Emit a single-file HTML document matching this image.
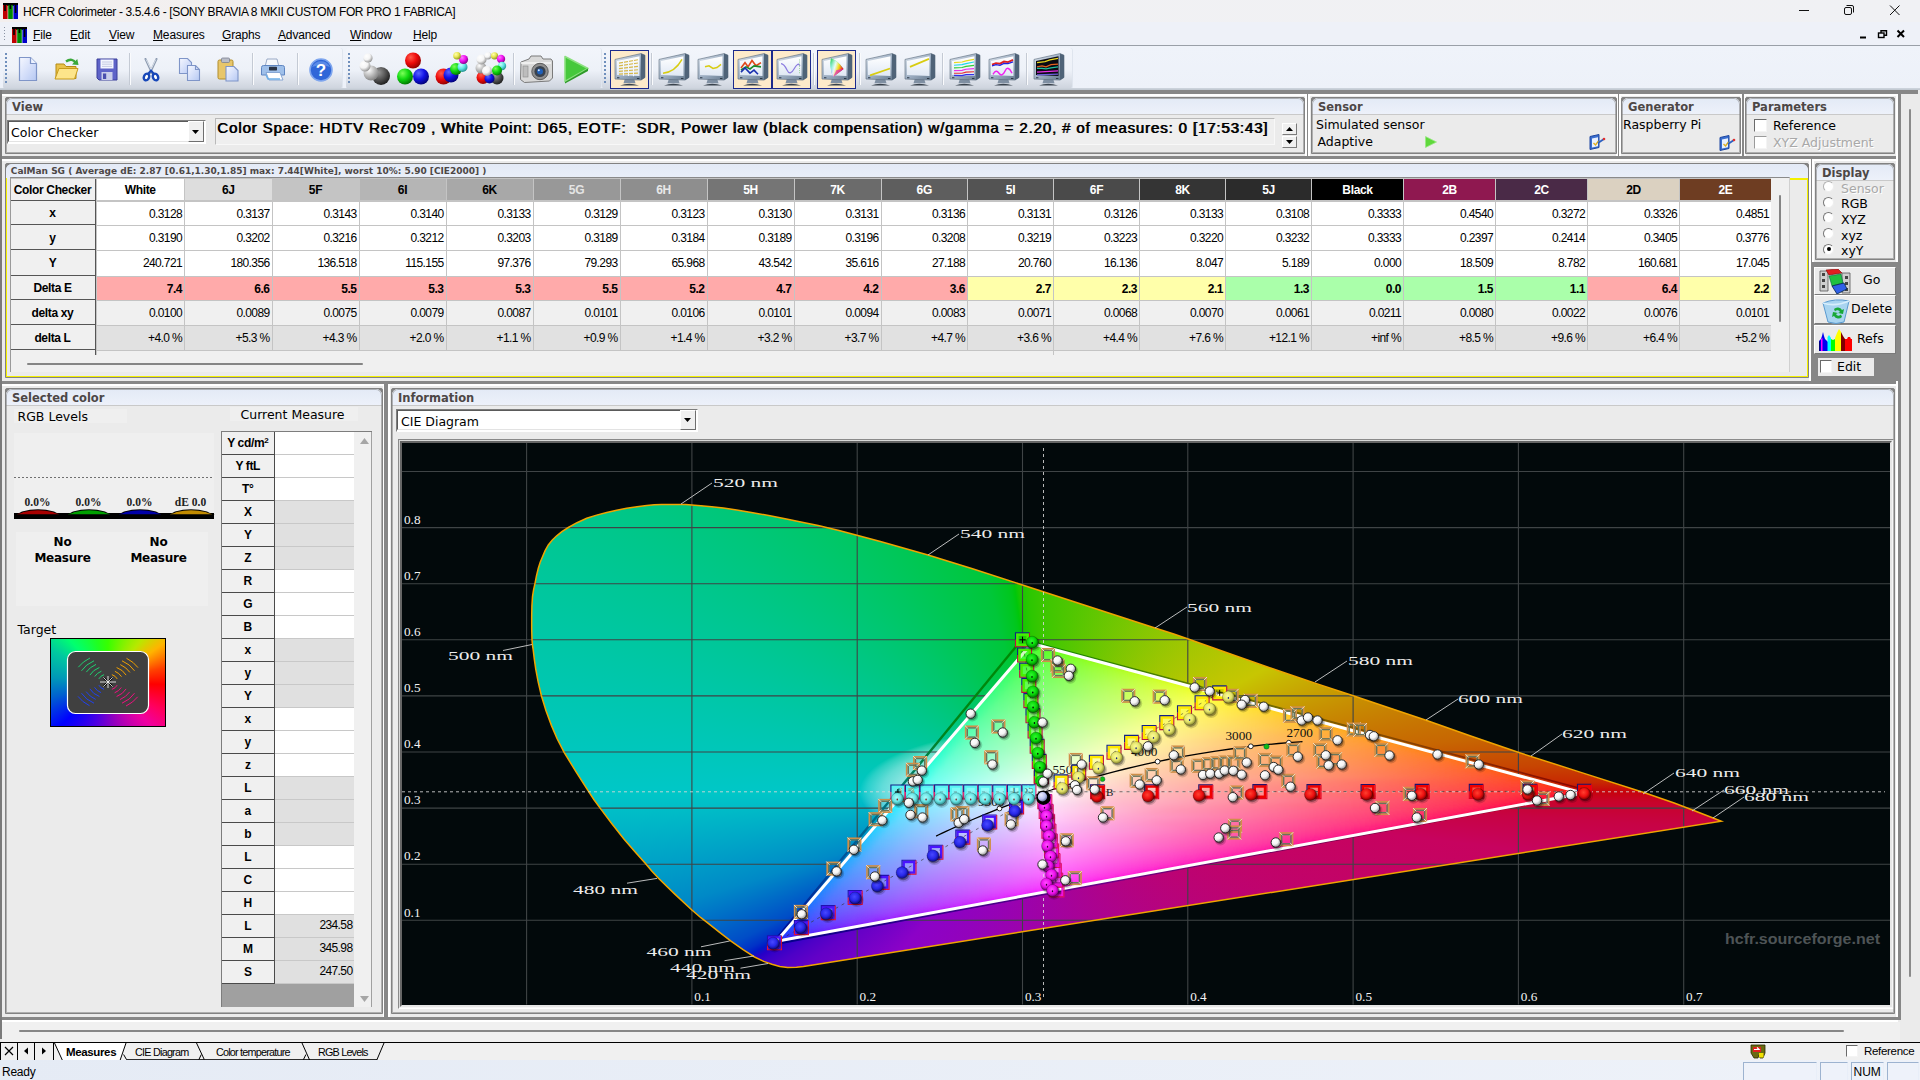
<!DOCTYPE html><html><head><meta charset="utf-8"><title>HCFR Colorimeter</title><style>

*{box-sizing:border-box;margin:0;padding:0}
html,body{width:1920px;height:1080px;overflow:hidden;background:#ebebeb;font-family:"Liberation Sans",sans-serif;font-size:12px;color:#000}
.a{position:absolute}
.t{position:absolute;white-space:pre;line-height:1}
.dj{font-family:"DejaVu Sans","Liberation Sans",sans-serif}
.hd{font-family:"DejaVu Sans","Liberation Sans",sans-serif;font-weight:bold;font-size:11.5px;color:#4d4746}
.pn{position:absolute;border:1px solid #828282;border-radius:2px 2px 0 0;background:#828282}
.pe{position:absolute;left:0;top:0;right:0;bottom:0;border-radius:6px 6px 0 0;box-shadow:inset 0 0 0 1px rgba(125,125,125,.55)}
.pn>.pb{position:absolute;left:0;top:0;right:0;bottom:0;background:#ebebeb;border-radius:6px 6px 0 0;overflow:hidden}
.pn .ph{position:absolute;left:0;top:0;right:0;height:17px;background:linear-gradient(#e3eaf6,#edf1fa);border-bottom:1px solid #c9c9c9}
.gb{position:absolute;background:#868686}
.wl{position:absolute;background:#fff}

</style></head><body>
<div class="a" style="left:0px;top:0px;width:1920px;height:22px;background:linear-gradient(90deg,#f3efee,#f1f1f3 30%,#f0f1f4)"></div>
<svg class="a" style="left:3px;top:3px" width="15" height="16" viewBox="0 0 15 16"><rect x="0" y="0" width="15" height="3" fill="#000"/><rect x="0" y="2" width="4.6" height="14" fill="#c00000"/><rect x="5.2" y="2" width="4.6" height="14" fill="#008a00"/><rect x="10.4" y="2" width="4.6" height="14" fill="#0000c8"/><rect x="1.2" y="2" width="1.6" height="6" fill="#000"/><rect x="6.6" y="2" width="1.6" height="4" fill="#000"/><rect x="11.8" y="2" width="1.6" height="8" fill="#000"/></svg>
<div class="t" style="left:23px;top:6px;font-size:12px;letter-spacing:-0.36px">HCFR Colorimeter - 3.5.4.6 - [SONY BRAVIA 8 MKII CUSTOM FOR PRO 1 FABRICA]</div>
<svg class="a" style="left:1780px;top:0" width="140" height="22" viewBox="0 0 140 22" fill="none" stroke="#111" stroke-width="1"><path d="M19 10.5h10"/><rect x="64.5" y="7.5" width="7" height="7" rx="1.5"/><path d="M66.5 5.5h5.5a1.5 1.5 0 0 1 1.5 1.5v5.5"/><path d="M110 5.5l9.5 9.5M119.5 5.5l-9.5 9.5"/></svg>
<div class="a" style="left:0px;top:22px;width:1920px;height:24px;background:#eef1f8"></div>
<div class="a" style="left:0px;top:45px;width:1920px;height:1px;background:#9aa0a8"></div>
<div class="a" style="left:4px;top:27px;width:1px;height:14px;background:repeating-linear-gradient(#8a93a3 0 1px,transparent 1px 3px)"></div>
<svg class="a" style="left:12px;top:27px" width="15" height="16" viewBox="0 0 15 16"><rect x="0" y="0" width="15" height="3" fill="#000"/><rect x="0" y="2" width="4.6" height="14" fill="#c00000"/><rect x="5.2" y="2" width="4.6" height="14" fill="#008a00"/><rect x="10.4" y="2" width="4.6" height="14" fill="#0000c8"/><rect x="1.2" y="2" width="1.6" height="6" fill="#000"/><rect x="6.6" y="2" width="1.6" height="4" fill="#000"/><rect x="11.8" y="2" width="1.6" height="8" fill="#000"/></svg>
<div class="t" style="left:33px;top:28.5px;font-size:12px;letter-spacing:-0.15px"><u>F</u>ile</div>
<div class="t" style="left:70px;top:28.5px;font-size:12px;letter-spacing:-0.15px"><u>E</u>dit</div>
<div class="t" style="left:109px;top:28.5px;font-size:12px;letter-spacing:-0.15px"><u>V</u>iew</div>
<div class="t" style="left:153px;top:28.5px;font-size:12px;letter-spacing:-0.15px"><u>M</u>easures</div>
<div class="t" style="left:222px;top:28.5px;font-size:12px;letter-spacing:-0.15px"><u>G</u>raphs</div>
<div class="t" style="left:278px;top:28.5px;font-size:12px;letter-spacing:-0.15px"><u>A</u>dvanced</div>
<div class="t" style="left:350px;top:28.5px;font-size:12px;letter-spacing:-0.15px"><u>W</u>indow</div>
<div class="t" style="left:413px;top:28.5px;font-size:12px;letter-spacing:-0.15px"><u>H</u>elp</div>
<svg class="a" style="left:1850px;top:26" width="60" height="16" viewBox="0 0 60 16" fill="none" stroke="#000"><path d="M10 11.5h6" stroke-width="2"/><rect x="28.5" y="7" width="5.5" height="4.5" stroke-width="1.4"/><path d="M31 7v-2.3h5.5v4.5h-2.5" stroke-width="1.4"/><path d="M47.5 4.5l6.5 6.5M54 4.5l-6.5 6.5" stroke-width="2"/></svg>
<div class="a" style="left:0px;top:46px;width:1920px;height:44px;background:linear-gradient(#eff3fa,#edf1f9)"></div>
<div class="a" style="left:3px;top:48px;width:339px;height:41px;border-radius:3px;background:linear-gradient(#f2f5fb 0,#edf1f8 55%,#cdd3dd 100%);box-shadow:1px 0 0 #dfe5ee"></div>
<div class="a" style="left:346px;top:48px;width:255px;height:41px;border-radius:3px;background:linear-gradient(#f2f5fb 0,#edf1f8 55%,#cdd3dd 100%);box-shadow:1px 0 0 #dfe5ee"></div>
<div class="a" style="left:602px;top:48px;width:470px;height:41px;border-radius:3px;background:linear-gradient(#f2f5fb 0,#edf1f8 55%,#cdd3dd 100%);box-shadow:1px 0 0 #dfe5ee"></div>
<div class="a" style="left:5px;top:53px;width:2px;height:31px;background:repeating-linear-gradient(#6f8fbc 0 2px,transparent 2px 4px)"></div>
<div class="a" style="left:348px;top:53px;width:2px;height:31px;background:repeating-linear-gradient(#6f8fbc 0 2px,transparent 2px 4px)"></div>
<div class="a" style="left:604px;top:53px;width:2px;height:31px;background:repeating-linear-gradient(#6f8fbc 0 2px,transparent 2px 4px)"></div>
<div class="a" style="left:129px;top:53px;width:1px;height:32px;background:#c4cad4"></div>
<div class="a" style="left:130px;top:53px;width:1px;height:32px;background:#fafbfd"></div>
<div class="a" style="left:252px;top:53px;width:1px;height:32px;background:#c4cad4"></div>
<div class="a" style="left:253px;top:53px;width:1px;height:32px;background:#fafbfd"></div>
<div class="a" style="left:297px;top:53px;width:1px;height:32px;background:#c4cad4"></div>
<div class="a" style="left:298px;top:53px;width:1px;height:32px;background:#fafbfd"></div>
<div class="a" style="left:513px;top:53px;width:1px;height:32px;background:#c4cad4"></div>
<div class="a" style="left:514px;top:53px;width:1px;height:32px;background:#fafbfd"></div>
<div class="a" style="left:651px;top:53px;width:1px;height:32px;background:#c4cad4"></div>
<div class="a" style="left:652px;top:53px;width:1px;height:32px;background:#fafbfd"></div>
<div class="a" style="left:813px;top:53px;width:1px;height:32px;background:#c4cad4"></div>
<div class="a" style="left:814px;top:53px;width:1px;height:32px;background:#fafbfd"></div>
<div class="a" style="left:858.5px;top:53px;width:1px;height:32px;background:#c4cad4"></div>
<div class="a" style="left:859.5px;top:53px;width:1px;height:32px;background:#fafbfd"></div>
<div class="a" style="left:942px;top:53px;width:1px;height:32px;background:#c4cad4"></div>
<div class="a" style="left:943px;top:53px;width:1px;height:32px;background:#fafbfd"></div>
<div class="a" style="left:1026px;top:53px;width:1px;height:32px;background:#c4cad4"></div>
<div class="a" style="left:1027px;top:53px;width:1px;height:32px;background:#fafbfd"></div>
<div class="a" style="left:0px;top:88px;width:1920px;height:2px;background:linear-gradient(#cfd6df,#bfc6cf)"></div>
<svg width="0" height="0" style="position:absolute"><defs>
<radialGradient id="bw" cx="35%" cy="30%" r="70%"><stop offset="0" stop-color="#fff"/><stop offset="0.55" stop-color="#f4f4f4"/><stop offset="1" stop-color="#9a9a9a"/></radialGradient>
<radialGradient id="bgry" cx="35%" cy="30%" r="70%"><stop offset="0" stop-color="#fff"/><stop offset="1" stop-color="#888"/></radialGradient>
<radialGradient id="bdk" cx="35%" cy="30%" r="70%"><stop offset="0" stop-color="#999"/><stop offset="1" stop-color="#222"/></radialGradient>
<radialGradient id="bred" cx="35%" cy="30%" r="75%"><stop offset="0" stop-color="#ff5a4a"/><stop offset="0.5" stop-color="#ee0a0a"/><stop offset="1" stop-color="#8a0000"/></radialGradient>
<radialGradient id="bgrn" cx="35%" cy="30%" r="75%"><stop offset="0" stop-color="#7dff5a"/><stop offset="0.5" stop-color="#10d810"/><stop offset="1" stop-color="#007000"/></radialGradient>
<radialGradient id="bblu" cx="35%" cy="30%" r="75%"><stop offset="0" stop-color="#5a66ff"/><stop offset="0.5" stop-color="#1212e6"/><stop offset="1" stop-color="#000070"/></radialGradient>
<radialGradient id="byel" cx="35%" cy="30%" r="75%"><stop offset="0" stop-color="#ffffb0"/><stop offset="0.5" stop-color="#e6e650"/><stop offset="1" stop-color="#8a8a20"/></radialGradient>
<radialGradient id="bcya" cx="35%" cy="30%" r="75%"><stop offset="0" stop-color="#c8ffff"/><stop offset="0.5" stop-color="#5fe6e6"/><stop offset="1" stop-color="#1f8a8a"/></radialGradient>
<radialGradient id="bmag" cx="35%" cy="30%" r="75%"><stop offset="0" stop-color="#ff7aff"/><stop offset="0.5" stop-color="#f010f0"/><stop offset="1" stop-color="#800080"/></radialGradient>
<radialGradient id="bwp" cx="35%" cy="30%" r="75%"><stop offset="0" stop-color="#eef"/><stop offset="0.6" stop-color="#b8c0f0"/><stop offset="1" stop-color="#606890"/></radialGradient>
<linearGradient id="bez" x1="0" y1="0" x2="1" y2="1"><stop offset="0" stop-color="#dfe6ee"/><stop offset="0.5" stop-color="#9fb0c4"/><stop offset="1" stop-color="#5f7488"/></linearGradient>
<linearGradient id="scr" x1="0" y1="0" x2="0" y2="1"><stop offset="0" stop-color="#ffffff"/><stop offset="1" stop-color="#dfe8f4"/></linearGradient>
<linearGradient id="pg" x1="0" y1="0" x2="1" y2="1"><stop offset="0" stop-color="#f6f8ff"/><stop offset="0.5" stop-color="#d6e0fa"/><stop offset="1" stop-color="#b6c8f2"/></linearGradient>
</defs></svg>
<svg class="a" style="left:18px;top:56px" width="20" height="26" viewBox="0 0 20 26"><path d="M1.5 1.5h11l6 6v17h-17z" fill="url(#pg)" stroke="#7f95c8" stroke-width="1.2"/><path d="M12.5 1.5v6h6" fill="#eef3ff" stroke="#7f95c8" stroke-width="1.2"/></svg>
<svg class="a" style="left:54px;top:56px" width="27" height="26" viewBox="0 0 27 26"><path d="M2 8h8l2 2.5h10v12h-20z" fill="#e9c24a" stroke="#b48a14" stroke-width="1"/><path d="M1 23l4-10.5h19l-3.5 10.5z" fill="#fde58a" stroke="#c89b1a" stroke-width="1"/><path d="M12 5.5c4-3 8-2 9.5 1.5" fill="none" stroke="#3aa83a" stroke-width="2.4"/><path d="M18 8.5l6.5 0.5-1.2-6z" fill="#3aa83a"/></svg>
<svg class="a" style="left:96px;top:58px" width="22" height="23" viewBox="0 0 22 23"><path d="M1 1h20v21h-18l-2-2z" fill="#5e63c8" stroke="#3a3f9a" stroke-width="1"/><rect x="4.5" y="1.5" width="13" height="9" fill="#f4f6ff"/><path d="M6 4h10M6 6.2h10M6 8.4h10" stroke="#b9bfdc" stroke-width="0.8"/><rect x="5.5" y="14" width="11" height="8" fill="#c9cdea"/><rect x="7" y="15.5" width="3.2" height="5.5" fill="#4a4fae"/></svg>
<svg class="a" style="left:141px;top:58px" width="20" height="24" viewBox="0 0 20 24"><path d="M4.500 1l6.500 14M15.500 1l-6.500 14" stroke="#8d9bb0" stroke-width="2" stroke-linecap="round"/><path d="M5.200 1.500l5.300 11M14.800 1.500l-5.300 11" stroke="#e8edf5" stroke-width=".8"/><ellipse cx="5.500" cy="19" rx="2.600" ry="3.400" transform="rotate(25 5.500 19)" fill="#fff" stroke="#1747b8" stroke-width="2.400"/><ellipse cx="14.500" cy="19" rx="2.600" ry="3.400" transform="rotate(-25 14.500 19)" fill="#fff" stroke="#1747b8" stroke-width="2.400"/><path d="M7.500 15.500l2.500-3 2.500 3" fill="none" stroke="#1747b8" stroke-width="2"/></svg>
<svg class="a" style="left:178px;top:57px" width="23" height="25" viewBox="0 0 23 25"><path d="M1.5 1.5h8l4 4v11h-12z" fill="url(#pg)" stroke="#7f95c8" stroke-width="1.1"/><path d="M9.5 8.5h8l4 4v11h-12z" fill="url(#pg)" stroke="#7f95c8" stroke-width="1.1"/><path d="M17.5 8.5v4h4" fill="none" stroke="#7f95c8" stroke-width="1.1"/></svg>
<svg class="a" style="left:217px;top:57px" width="22" height="25" viewBox="0 0 22 25"><rect x="1" y="3" width="15" height="19" rx="1.5" fill="#e8c66a" stroke="#b08c2a" stroke-width="1"/><rect x="4.5" y="1" width="8" height="4.5" rx="1" fill="#b9bdc8" stroke="#7c8190" stroke-width="0.8"/><path d="M9 9.5h8l4 4v10.5h-12z" fill="url(#pg)" stroke="#7f95c8" stroke-width="1.1"/></svg>
<svg class="a" style="left:260px;top:58px" width="26" height="23" viewBox="0 0 26 23"><path d="M7 1h10l2 8h-14z" fill="#f6f8fc" stroke="#8fa0c0" stroke-width="0.9"/><path d="M1.5 9.5q0-2 2-2h19q2 0 2 2v7.5h-23z" fill="#9fc0ea" stroke="#5f86c2" stroke-width="1"/><path d="M6 14.5h14l3 7.5h-14z" fill="#ffffff" stroke="#7fa0d0" stroke-width="0.9"/><rect x="9" y="8.8" width="8" height="3.6" rx="0.6" fill="#2a3446"/><path d="M6 17l2 4h12" stroke="#6fb0e8" stroke-width="1.5" fill="none"/></svg>
<svg class="a" style="left:309px;top:58px" width="24" height="24" viewBox="0 0 24 24"><circle cx="12" cy="12" r="11" fill="#2f66d8" stroke="#7fa6ee" stroke-width="1.6"/><path d="M3 9a10 10 0 0 1 18 0a14 8 0 0 0-18 0z" fill="#7ea8f2" opacity=".55"/><text x="12" y="18" text-anchor="middle" font-family="Liberation Sans, sans-serif" font-weight="bold" font-size="17" fill="#fff">?</text></svg>
<svg class="a" style="left:357px;top:52px" width="34" height="34" viewBox="0 0 34 34"><circle cx="24" cy="24" r="9" fill="url(#bdk)"/><circle cx="14" cy="21" r="7.5" fill="url(#bgry)"/><circle cx="8" cy="14" r="5.5" fill="url(#bw)"/><circle cx="11" cy="6" r="4.6" fill="url(#bw)"/></svg>
<svg class="a" style="left:396px;top:52px" width="34" height="34" viewBox="0 0 34 34"><circle cx="17" cy="8.5" r="8" fill="url(#bred)"/><circle cx="9" cy="24.5" r="8" fill="url(#bgrn)"/><circle cx="25" cy="24.5" r="8" fill="url(#bblu)"/></svg>
<svg class="a" style="left:435px;top:52px" width="36" height="34" viewBox="0 0 36 34"><circle cx="8.5" cy="24.5" r="8" fill="url(#bred)"/><circle cx="16" cy="23" r="7.5" fill="url(#bblu)"/><circle cx="21" cy="17" r="6" fill="url(#bgrn)"/><circle cx="27.5" cy="15" r="5" fill="url(#bcya)"/><circle cx="28.5" cy="7.5" r="4.6" fill="url(#bmag)"/><circle cx="22" cy="3.8" r="3.8" fill="url(#byel)"/></svg>
<svg class="a" style="left:474px;top:52px" width="34" height="34" viewBox="0 0 34 34"><circle cx="23" cy="26" r="6.5" fill="url(#bdk)"/><circle cx="9" cy="25.5" r="6.5" fill="url(#bred)"/><circle cx="15.5" cy="26.5" r="5" fill="url(#bblu)"/><circle cx="7" cy="16" r="5.5" fill="url(#bgry)"/><circle cx="7.5" cy="7.5" r="5" fill="url(#bw)"/><circle cx="14" cy="3.8" r="3.6" fill="url(#bw)"/><circle cx="20.5" cy="3.8" r="3.6" fill="url(#byel)"/><circle cx="27" cy="7" r="4.2" fill="url(#bmag)"/><circle cx="28" cy="14" r="4.2" fill="url(#bcya)"/><circle cx="23" cy="18.5" r="5" fill="url(#bgrn)"/><circle cx="13" cy="19" r="5" fill="url(#bw)"/></svg>
<svg class="a" style="left:519px;top:54px" width="35" height="31" viewBox="0 0 35 31"><path d="M2 8l8-3 2-3h10l2 3h8l1.5 2v17l-3 3-25 1.5-4-3z" fill="#d9d9d9" stroke="#7a7a7a" stroke-width="1"/><path d="M2 9h30" stroke="#f6f6f6" stroke-width="1.5"/><rect x="4" y="12" width="5" height="11" fill="#bdbdbd" stroke="#8a8a8a" stroke-width=".6"/><circle cx="21" cy="17.5" r="8.2" fill="#8f8f8f" stroke="#5a5a5a"/><circle cx="21" cy="17.5" r="5.6" fill="#39424e"/><circle cx="21" cy="17.5" r="3" fill="#1f5fb8"/><circle cx="19.8" cy="16.2" r="1" fill="#cfe4ff"/></svg>
<svg class="a" style="left:563px;top:55px" width="27" height="29" viewBox="0 0 27 29"><path d="M2 1.5l23 12-23 13z" fill="#46c83c" stroke="#8be07f" stroke-width="1.6" stroke-linejoin="round"/><path d="M2 27l23-13.5v2.5l-23 12.5z" fill="#2e9a28"/></svg>
<div class="a" style="left:610px;top:50px;width:39px;height:39px;background:#fdeaca;border:1.5px solid #1c2a8c"></div><svg class="a" style="left:614px;top:51.500px" width="32" height="35" viewBox="0 0 32 33" preserveAspectRatio="none"><path d="M6 31.500q9-3 19 0z" fill="#39424c"/><path d="M11 25h9l1.500 4.500h-12z" fill="#7f8fa2"/><path d="M1 7l26-5.5 4 1.5v21l-4 2.5-26-1z" fill="url(#bez)" stroke="#5b6b7d" stroke-width="0.6"/><path d="M27 1.5l4 1.5v21l-4 2.5z" fill="#4f6378"/><path d="M3 8.6l22.5-4.6v18.6l-22.5-0.9z" fill="url(#scr)"/><path d="M3 24.2l2.4.1M23 24.9l2.4.1" stroke="#2d3a48" stroke-width="1"/><g stroke="#d6b84a" stroke-width="1.1"><path d="M5 10.5l19-3.2"/><path d="M5 13.1l19-2.7"/><path d="M5 15.7l19-2.1"/><path d="M5 18.3l19-1.6"/><path d="M5 20.9l19-1.0"/></g><g stroke="#f4f7fb" stroke-width="1"><path d="M9.5 7.5v15M14.5 6.5v16.2M19.5 5.5v17.4"/></g></svg>
<svg class="a" style="left:658px;top:51.500px" width="32" height="35" viewBox="0 0 32 33" preserveAspectRatio="none"><path d="M6 31.500q9-3 19 0z" fill="#39424c"/><path d="M11 25h9l1.500 4.500h-12z" fill="#7f8fa2"/><path d="M1 7l26-5.5 4 1.5v21l-4 2.5-26-1z" fill="url(#bez)" stroke="#5b6b7d" stroke-width="0.6"/><path d="M27 1.5l4 1.5v21l-4 2.5z" fill="#4f6378"/><path d="M3 8.6l22.5-4.6v18.6l-22.5-0.9z" fill="url(#scr)"/><path d="M3 24.2l2.4.1M23 24.9l2.4.1" stroke="#2d3a48" stroke-width="1"/><path d="M5 20q12-1 19-13" fill="none" stroke="#d8cc10" stroke-width="1.5"/></svg>
<svg class="a" style="left:697px;top:51.500px" width="32" height="35" viewBox="0 0 32 33" preserveAspectRatio="none"><path d="M6 31.500q9-3 19 0z" fill="#39424c"/><path d="M11 25h9l1.500 4.500h-12z" fill="#7f8fa2"/><path d="M1 7l26-5.5 4 1.5v21l-4 2.5-26-1z" fill="url(#bez)" stroke="#5b6b7d" stroke-width="0.6"/><path d="M27 1.5l4 1.5v21l-4 2.5z" fill="#4f6378"/><path d="M3 8.6l22.5-4.6v18.6l-22.5-0.9z" fill="url(#scr)"/><path d="M3 24.2l2.4.1M23 24.9l2.4.1" stroke="#2d3a48" stroke-width="1"/><path d="M8 14l4-1 4 2.5 4-.8 4-3" fill="none" stroke="#d8cc10" stroke-width="1.5"/></svg>
<div class="a" style="left:733px;top:50px;width:39px;height:39px;background:#fdeaca;border:1.5px solid #1c2a8c"></div><svg class="a" style="left:737px;top:51.500px" width="32" height="35" viewBox="0 0 32 33" preserveAspectRatio="none"><path d="M6 31.500q9-3 19 0z" fill="#39424c"/><path d="M11 25h9l1.500 4.500h-12z" fill="#7f8fa2"/><path d="M1 7l26-5.5 4 1.5v21l-4 2.5-26-1z" fill="url(#bez)" stroke="#5b6b7d" stroke-width="0.6"/><path d="M27 1.5l4 1.5v21l-4 2.5z" fill="#4f6378"/><path d="M3 8.6l22.5-4.6v18.6l-22.5-0.9z" fill="url(#scr)"/><path d="M3 24.2l2.4.1M23 24.9l2.4.1" stroke="#2d3a48" stroke-width="1"/><path d="M4 15l4-5 3 4 4-6 4 5 5-3" fill="none" stroke="#e0481a" stroke-width="1.6"/><path d="M4 17l5-3 4 2 4-3 7 1" fill="none" stroke="#1a8a2a" stroke-width="1.6"/><path d="M4 19l4-4 5 5 4-3 4 4" fill="none" stroke="#1a30b0" stroke-width="1.6"/></svg>
<div class="a" style="left:772px;top:50px;width:39px;height:39px;background:#fdeaca;border:1.5px solid #1c2a8c"></div><svg class="a" style="left:776px;top:51.500px" width="32" height="35" viewBox="0 0 32 33" preserveAspectRatio="none"><path d="M6 31.500q9-3 19 0z" fill="#39424c"/><path d="M11 25h9l1.500 4.500h-12z" fill="#7f8fa2"/><path d="M1 7l26-5.5 4 1.5v21l-4 2.5-26-1z" fill="url(#bez)" stroke="#5b6b7d" stroke-width="0.6"/><path d="M27 1.5l4 1.5v21l-4 2.5z" fill="#4f6378"/><path d="M3 8.6l22.5-4.6v18.6l-22.5-0.9z" fill="url(#scr)"/><path d="M3 24.2l2.4.1M23 24.9l2.4.1" stroke="#2d3a48" stroke-width="1"/><path d="M5 11q3 0 6 6t7-1 6-3" fill="none" stroke="#8a7adf" stroke-width="1.2"/><path d="M23.5 7v14" stroke="#8fd08f" stroke-width="0.8" stroke-dasharray="1 1"/></svg>
<div class="a" style="left:817px;top:50px;width:39px;height:39px;background:#fdeaca;border:1.5px solid #1c2a8c"></div><svg class="a" style="left:821px;top:51.500px" width="32" height="35" viewBox="0 0 32 33" preserveAspectRatio="none"><path d="M6 31.500q9-3 19 0z" fill="#39424c"/><path d="M11 25h9l1.500 4.500h-12z" fill="#7f8fa2"/><path d="M1 7l26-5.5 4 1.5v21l-4 2.5-26-1z" fill="url(#bez)" stroke="#5b6b7d" stroke-width="0.6"/><path d="M27 1.5l4 1.5v21l-4 2.5z" fill="#4f6378"/><path d="M3 8.6l22.5-4.6v18.6l-22.5-0.9z" fill="url(#scr)"/><path d="M3 24.2l2.4.1M23 24.9l2.4.1" stroke="#2d3a48" stroke-width="1"/><defs><linearGradient id="ci1" x1="0" y1="0" x2="0.300" y2="1"><stop offset="0" stop-color="#10c830"/><stop offset=".5" stop-color="#30e0c0"/><stop offset="1" stop-color="#3030f0"/></linearGradient><linearGradient id="ci2" x1="0" y1="0" x2="1" y2="0.400"><stop offset="0" stop-color="#fff" stop-opacity="0"/><stop offset=".45" stop-color="#fff" stop-opacity=".9"/><stop offset=".7" stop-color="#f0e020"/><stop offset="1" stop-color="#f02020"/></linearGradient></defs><path d="M10 6q-2 8 2 17.500l10.500-7.500q-6-8-12.500-10z" fill="url(#ci1)"/><path d="M10 6q-2 8 2 17.500l10.500-7.500q-6-8-12.500-10z" fill="url(#ci2)"/><path d="M12 23.500l10.500-7.500-7 1z" fill="#e020c0" opacity=".7"/></svg>
<svg class="a" style="left:865px;top:51.500px" width="32" height="35" viewBox="0 0 32 33" preserveAspectRatio="none"><path d="M6 31.500q9-3 19 0z" fill="#39424c"/><path d="M11 25h9l1.500 4.500h-12z" fill="#7f8fa2"/><path d="M1 7l26-5.5 4 1.5v21l-4 2.5-26-1z" fill="url(#bez)" stroke="#5b6b7d" stroke-width="0.6"/><path d="M27 1.5l4 1.5v21l-4 2.5z" fill="#4f6378"/><path d="M3 8.6l22.5-4.6v18.6l-22.5-0.9z" fill="url(#scr)"/><path d="M3 24.2l2.4.1M23 24.9l2.4.1" stroke="#2d3a48" stroke-width="1"/><path d="M5 22l20-6.5" fill="none" stroke="#d8cc10" stroke-width="1.6"/></svg>
<svg class="a" style="left:904px;top:51.500px" width="32" height="35" viewBox="0 0 32 33" preserveAspectRatio="none"><path d="M6 31.500q9-3 19 0z" fill="#39424c"/><path d="M11 25h9l1.500 4.500h-12z" fill="#7f8fa2"/><path d="M1 7l26-5.5 4 1.5v21l-4 2.5-26-1z" fill="url(#bez)" stroke="#5b6b7d" stroke-width="0.6"/><path d="M27 1.5l4 1.5v21l-4 2.5z" fill="#4f6378"/><path d="M3 8.6l22.5-4.6v18.6l-22.5-0.9z" fill="url(#scr)"/><path d="M3 24.2l2.4.1M23 24.9l2.4.1" stroke="#2d3a48" stroke-width="1"/><path d="M6 14l19-7.5" fill="none" stroke="#d8cc10" stroke-width="1.6"/></svg>
<svg class="a" style="left:949px;top:51.500px" width="32" height="35" viewBox="0 0 32 33" preserveAspectRatio="none"><path d="M6 31.500q9-3 19 0z" fill="#39424c"/><path d="M11 25h9l1.500 4.500h-12z" fill="#7f8fa2"/><path d="M1 7l26-5.5 4 1.5v21l-4 2.5-26-1z" fill="url(#bez)" stroke="#5b6b7d" stroke-width="0.6"/><path d="M27 1.5l4 1.5v21l-4 2.5z" fill="#4f6378"/><path d="M3 8.6l22.5-4.6v18.6l-22.5-0.9z" fill="url(#scr)"/><path d="M3 24.2l2.4.1M23 24.9l2.4.1" stroke="#2d3a48" stroke-width="1"/><g stroke-width="1.1" fill="none"><path d="M5 10l8-.6 4-1 8-1.5" stroke="#e8d820"/><path d="M5 12.5l8-.6 4-1 8-1.5" stroke="#20d8e8"/><path d="M5 15l8-.4 4-1 8-1" stroke="#30d030"/><path d="M5 17.5l8-.2 4-1 8-.6" stroke="#e830e8"/><path d="M5 20l8 0 4-1 8-.4" stroke="#e83030"/><path d="M5 22l8 .2 4-.8 8 0" stroke="#3030e8"/></g></svg>
<svg class="a" style="left:988px;top:51.500px" width="32" height="35" viewBox="0 0 32 33" preserveAspectRatio="none"><path d="M6 31.500q9-3 19 0z" fill="#39424c"/><path d="M11 25h9l1.500 4.500h-12z" fill="#7f8fa2"/><path d="M1 7l26-5.5 4 1.5v21l-4 2.5-26-1z" fill="url(#bez)" stroke="#5b6b7d" stroke-width="0.6"/><path d="M27 1.5l4 1.5v21l-4 2.5z" fill="#4f6378"/><path d="M3 8.6l22.5-4.6v18.6l-22.5-0.9z" fill="url(#scr)"/><path d="M3 24.2l2.4.1M23 24.9l2.4.1" stroke="#2d3a48" stroke-width="1"/><path d="M4 12l4-1.5 4 .5 4-2 4 .5 5-2" fill="none" stroke="#e02020" stroke-width="1.8"/><path d="M4 13l4-1 4 .5 4-1.8 4 .2 5-1.6" fill="none" stroke="#2020e0" stroke-width="1.2"/><path d="M5 21q3-5 6-1t6-2 7 2" fill="none" stroke="#f020f0" stroke-width="1.4"/></svg>
<svg class="a" style="left:1033px;top:51.500px" width="32" height="35" viewBox="0 0 32 33" preserveAspectRatio="none"><path d="M6 31.500q9-3 19 0z" fill="#39424c"/><path d="M11 25h9l1.500 4.500h-12z" fill="#7f8fa2"/><path d="M1 7l26-5.5 4 1.5v21l-4 2.5-26-1z" fill="url(#bez)" stroke="#5b6b7d" stroke-width="0.6"/><path d="M27 1.5l4 1.5v21l-4 2.5z" fill="#4f6378"/><path d="M3 8.6l22.5-4.6v18.6l-22.5-0.9z" fill="#0a0a14"/><path d="M3 24.2l2.4.1M23 24.9l2.4.1" stroke="#2d3a48" stroke-width="1"/><g stroke-width="1.2" fill="none"><path d="M4 10l8-1 5-1.5 8-1.5" stroke="#e8d820"/><path d="M4 14l5-1 4 1 5-2 7-.5" stroke="#e06020"/><path d="M4 15.5l5 0 4 .5 5-1 7-1" stroke="#20c0a0"/><path d="M4 19l21-1.2" stroke="#e830e8"/><path d="M4 21.5l21-.6" stroke="#7060e0"/></g></svg>
<div class="a" style="left:0px;top:90px;width:1900px;height:3.5px;background:#878787"></div>
<div class="a" style="left:2px;top:93.5px;width:1896px;height:2px;background:#fff"></div>
<div class="a" style="left:0px;top:155.8px;width:1900px;height:3px;background:#878787"></div>
<div class="a" style="left:2px;top:158.8px;width:1896px;height:2px;background:#fff"></div>
<div class="a" style="left:0px;top:380.6px;width:1900px;height:3.4px;background:#878787"></div>
<div class="a" style="left:2px;top:384.0px;width:1896px;height:2px;background:#fff"></div>
<div class="a" style="left:0px;top:1016.6px;width:1900px;height:3px;background:#878787"></div>
<div class="a" style="left:2px;top:1019.6px;width:1896px;height:2px;background:#fff"></div>
<div class="a" style="left:1900px;top:90px;width:18px;height:3.5px;background:#878787"></div>
<div class="a" style="left:0px;top:90px;width:1.6px;height:949px;background:#7a7a7a"></div>
<div class="a" style="left:1897.6px;top:90px;width:3.2px;height:930px;background:#878787"></div>
<div class="a" style="left:1895.6px;top:94px;width:2px;height:923px;background:#fff"></div>
<div class="a" style="left:1304.8px;top:94px;width:2px;height:62px;background:#fff"></div>
<div class="a" style="left:1306.8px;top:94px;width:1.3px;height:62px;background:#878787"></div>
<div class="a" style="left:1308.1px;top:94px;width:2px;height:62px;background:#fff"></div>
<div class="a" style="left:1616px;top:94px;width:2px;height:62px;background:#fff"></div>
<div class="a" style="left:1618px;top:94px;width:1.3px;height:62px;background:#878787"></div>
<div class="a" style="left:1619.3px;top:94px;width:2px;height:62px;background:#fff"></div>
<div class="a" style="left:1740.4px;top:94px;width:2px;height:62px;background:#fff"></div>
<div class="a" style="left:1742.4px;top:94px;width:1.3px;height:62px;background:#878787"></div>
<div class="a" style="left:1743.7px;top:94px;width:2px;height:62px;background:#fff"></div>
<div class="a" style="left:1808.8px;top:159px;width:2px;height:222px;background:#fff"></div>
<div class="a" style="left:1810.6px;top:159px;width:1.6px;height:222px;background:#878787"></div>
<div class="a" style="left:1812.2px;top:159px;width:2px;height:222px;background:#fff"></div>
<div class="a" style="left:1812px;top:262px;width:86px;height:119px;background:#878787"></div>
<div class="a" style="left:382.6px;top:384px;width:2px;height:633px;background:#fff"></div>
<div class="a" style="left:384.4px;top:384px;width:3.4px;height:633px;background:#878787"></div>
<div class="a" style="left:387.8px;top:384px;width:2.4px;height:633px;background:#fff"></div>
<div class="a" style="left:1909.4px;top:109px;width:2px;height:868px;background:#8a8a8a;border-radius:1px"></div>
<div class="a" style="left:1901px;top:94px;width:19px;height:945px;background:#f0f0f0;z-index:-1"></div>
<div class="pn" style="left:5px;top:97px;width:1300px;height:56.5px;"><div class="pb"><div class="ph" style="height:17px"></div><div class="t hd" style="left:6px;top:4px">View</div><div class="a" style="left:1px;top:22px;width:199px;height:23.5px;border:1.5px solid #7d7d7d;border-right-color:#fff;border-bottom-color:#fff;background:#fff"><div class="a" style="left:0px;top:0px;width:196px;height:20.5px;border:1px solid #5a5a5a;border-right-color:#e3e3e3;border-bottom-color:#e3e3e3"></div><div class="t dj" style="left:3px;top:5.5px;font-size:12.5px">Color Checker</div><div class="a" style="left:180px;top:0px;width:16px;height:20.5px;background:#f0f0f0;border:1px solid #fff;border-right-color:#6f6f6f;border-bottom-color:#6f6f6f"></div><svg class="a" style="left:184px;top:8.5px" width="8" height="5"><path d="M0 0h7l-3.5 4z" fill="#000"/></svg></div><div class="a" style="left:209px;top:20px;width:1060px;height:27px;border:1px solid #b9b9b9;border-right-color:#f8f8f8;border-bottom-color:#f8f8f8;background:#efefef"></div><div class="t" style="left:211px;top:21.5px;font-size:15px;letter-spacing:0.88px;text-shadow:0.8px 0 0 #000">Color Space: HDTV Rec709 , White Point: D65, EOTF:  SDR, Power law (black compensation) w/gamma = 2.20, # of measures: 0 [17:53:43]</div><div class="a" style="left:1276px;top:25px;width:15px;height:12px;background:#f0f0f0;border:1px solid #fff;border-right-color:#7b7b7b;border-bottom-color:#7b7b7b"></div><svg class="a" style="left:1280px;top:29px" width="8" height="5"><path d="M0 4l3.5-4 3.5 4z" fill="#000"/></svg><div class="a" style="left:1276px;top:38px;width:15px;height:12px;background:#f0f0f0;border:1px solid #fff;border-right-color:#7b7b7b;border-bottom-color:#7b7b7b"></div><svg class="a" style="left:1280px;top:42px" width="8" height="5"><path d="M0 0h7l-3.5 4z" fill="#000"/></svg><div class="pe"></div></div></div>
<div class="pn" style="left:1311px;top:97px;width:305.5px;height:56.5px;"><div class="pb"><div class="ph" style="height:17px"></div><div class="t hd" style="left:6px;top:4px">Sensor</div><div class="t dj" style="left:4px;top:21px;font-size:12.5px">Simulated sensor</div><div class="t dj" style="left:5.5px;top:38px;font-size:12.5px">Adaptive</div><svg class="a" style="left:113px;top:38px" width="13" height="12"><path d="M0.5 0.5l11 5.5-11 5.5z" fill="#5fd83c" stroke="#9be884" stroke-width="0.8"/></svg><svg class="a" style="left:276px;top:35px" width="18" height="18" viewBox="0 0 18 18"><path d="M2 3.5l9-2v13l-9 2z" fill="#3a6fd0" stroke="#1f47a0" stroke-width="1"/><path d="M4 5.5l6-1.3v9l-6 1.3z" fill="#e8f0ff"/><path d="M5.5 10l2 2 3-4" stroke="#e0b020" stroke-width="1.4" fill="none"/><path d="M10 10l6-4" stroke="#2a5fc0" stroke-width="1.8"/><circle cx="16" cy="6" r="1.3" fill="#e03030"/></svg><div class="pe"></div></div></div>
<div class="pn" style="left:1621px;top:97px;width:120px;height:56.5px;"><div class="pb"><div class="ph" style="height:17px"></div><div class="t hd" style="left:6px;top:4px">Generator</div><div class="t dj" style="left:1px;top:21px;font-size:12.5px">Raspberry Pi</div><svg class="a" style="left:96px;top:36px" width="18" height="18" viewBox="0 0 18 18"><path d="M2 3.5l9-2v13l-9 2z" fill="#3a6fd0" stroke="#1f47a0" stroke-width="1"/><path d="M4 5.5l6-1.3v9l-6 1.3z" fill="#e8f0ff"/><path d="M5.5 10l2 2 3-4" stroke="#e0b020" stroke-width="1.4" fill="none"/><path d="M10 10l6-4" stroke="#2a5fc0" stroke-width="1.8"/><circle cx="16" cy="6" r="1.3" fill="#e03030"/></svg><div class="pe"></div></div></div>
<div class="pn" style="left:1745px;top:97px;width:150px;height:56.5px;"><div class="pb"><div class="ph" style="height:17px"></div><div class="t hd" style="left:6px;top:4px">Parameters</div><div class="a" style="left:8px;top:21px;width:12.5px;height:12.5px;background:#fff;border:1.5px solid #6a6a6a;border-right-color:#f4f4f4;border-bottom-color:#f4f4f4"></div><div class="t dj" style="left:27px;top:22px;font-size:12.5px">Reference</div><div class="a" style="left:8px;top:38px;width:12.5px;height:12.5px;background:#fff;border:1.5px solid #9a9a9a;border-right-color:#f4f4f4;border-bottom-color:#f4f4f4"></div><div class="t dj" style="left:27px;top:39px;font-size:12.5px;color:#a8a8a8;text-shadow:1px 1px 0 #fff">XYZ Adjustment</div><div class="pe"></div></div></div>
<div class="a" style="left:5px;top:162.6px;width:1803.6px;height:215.6px;border:1px solid #828282;border-radius:2px 2px 0 0;background:#828282"><div class="a" style="left:0px;top:0px;width:1801.6px;height:213.6px;background:#ebebeb;border-radius:6px 6px 0 0"></div><div class="a" style="left:0px;top:0px;width:1801.6px;height:15px;border-radius:6px 6px 0 0;background:linear-gradient(#e3eaf6,#eaeff9)"></div><div class="t dj" style="left:4.8px;top:3.7px;font-size:9px;font-weight:bold;color:#4d4746;letter-spacing:0px">CalMan SG ( Average dE: 2.87 [0.61,1.30,1.85] max: 7.44[White], worst 10%: 5.90 [CIE2000] )</div></div>
<div class="a" style="left:6px;top:178px;width:1.2px;height:199px;background:#f4f000"></div>
<div class="a" style="left:6px;top:375.8px;width:1802px;height:1.4px;background:#f4f000"></div>
<div class="a" style="left:1807px;top:178px;width:1.4px;height:199px;background:#f4f000"></div>
<div class="a" style="left:1790px;top:178.4px;width:18px;height:1.2px;background:#f4f000"></div>
<div class="a" style="left:10px;top:177px;width:1780px;height:195px;background:#f0f0f0;border-top:1.5px solid #8a8a8a;border-left:1px solid #9a9a9a;border-right:1px solid #d0d0d0"></div>
<div class="a" style="left:10.5px;top:177.5px;width:1760.5px;height:177.5px;background:#c4c4c4"></div>
<div class="a" style="left:95.5px;top:351.3px;width:1675.5px;height:3.6999999999999886px;background:repeating-linear-gradient(90deg,#c4c4c4 0 1px,#f0f0f0 1px 87px)"></div>
<div class="a" style="left:10.5px;top:178.5px;width:85.0px;height:22.2px;background:#f0f0f0;line-height:23.2px;text-align:center;white-space:pre;overflow:hidden;font-weight:bold;letter-spacing:-0.35px;border-right:1px solid #555;border-bottom:1px solid #555">Color Checker</div>
<div class="a" style="left:96.5px;top:178.5px;width:87.5px;height:21.2px;background:#ffffff;line-height:22.2px;text-align:center;white-space:pre;overflow:hidden;font-weight:bold;letter-spacing:-0.35px;color:#000">White</div>
<div class="a" style="left:185.0px;top:178.5px;width:86.5px;height:21.2px;background:#dddddd;line-height:22.2px;text-align:center;white-space:pre;overflow:hidden;font-weight:bold;letter-spacing:-0.35px;color:#000">6J</div>
<div class="a" style="left:272.5px;top:178.5px;width:86.0px;height:21.2px;background:#c4c4c4;line-height:22.2px;text-align:center;white-space:pre;overflow:hidden;font-weight:bold;letter-spacing:-0.35px;color:#000">5F</div>
<div class="a" style="left:359.5px;top:178.5px;width:86.0px;height:21.2px;background:#b5b5b5;line-height:22.2px;text-align:center;white-space:pre;overflow:hidden;font-weight:bold;letter-spacing:-0.35px;color:#000">6I</div>
<div class="a" style="left:446.5px;top:178.5px;width:86.0px;height:21.2px;background:#a8a8a8;line-height:22.2px;text-align:center;white-space:pre;overflow:hidden;font-weight:bold;letter-spacing:-0.35px;color:#000">6K</div>
<div class="a" style="left:533.5px;top:178.5px;width:86.0px;height:21.2px;background:#989898;line-height:22.2px;text-align:center;white-space:pre;overflow:hidden;font-weight:bold;letter-spacing:-0.35px;color:#e4e4e4">5G</div>
<div class="a" style="left:620.5px;top:178.5px;width:86.0px;height:21.2px;background:#8e8e8e;line-height:22.2px;text-align:center;white-space:pre;overflow:hidden;font-weight:bold;letter-spacing:-0.35px;color:#e8e8e8">6H</div>
<div class="a" style="left:707.5px;top:178.5px;width:86.0px;height:21.2px;background:#757575;line-height:22.2px;text-align:center;white-space:pre;overflow:hidden;font-weight:bold;letter-spacing:-0.35px;color:#fff">5H</div>
<div class="a" style="left:794.5px;top:178.5px;width:86.0px;height:21.2px;background:#6b6b6b;line-height:22.2px;text-align:center;white-space:pre;overflow:hidden;font-weight:bold;letter-spacing:-0.35px;color:#fff">7K</div>
<div class="a" style="left:881.5px;top:178.5px;width:85.5px;height:21.2px;background:#5e5e5e;line-height:22.2px;text-align:center;white-space:pre;overflow:hidden;font-weight:bold;letter-spacing:-0.35px;color:#fff">6G</div>
<div class="a" style="left:968.0px;top:178.5px;width:85.0px;height:21.2px;background:#535353;line-height:22.2px;text-align:center;white-space:pre;overflow:hidden;font-weight:bold;letter-spacing:-0.35px;color:#fff">5I</div>
<div class="a" style="left:1054.0px;top:178.5px;width:85.0px;height:21.2px;background:#4a4a4a;line-height:22.2px;text-align:center;white-space:pre;overflow:hidden;font-weight:bold;letter-spacing:-0.35px;color:#fff">6F</div>
<div class="a" style="left:1140.0px;top:178.5px;width:85.0px;height:21.2px;background:#343434;line-height:22.2px;text-align:center;white-space:pre;overflow:hidden;font-weight:bold;letter-spacing:-0.35px;color:#fff">8K</div>
<div class="a" style="left:1226.0px;top:178.5px;width:85.0px;height:21.2px;background:#2b2b2b;line-height:22.2px;text-align:center;white-space:pre;overflow:hidden;font-weight:bold;letter-spacing:-0.35px;color:#fff">5J</div>
<div class="a" style="left:1312.0px;top:178.5px;width:91.0px;height:21.2px;background:#000000;line-height:22.2px;text-align:center;white-space:pre;overflow:hidden;font-weight:bold;letter-spacing:-0.35px;color:#fff">Black</div>
<div class="a" style="left:1404.0px;top:178.5px;width:91.0px;height:21.2px;background:#8f1850;line-height:22.2px;text-align:center;white-space:pre;overflow:hidden;font-weight:bold;letter-spacing:-0.35px;color:#fff">2B</div>
<div class="a" style="left:1496.0px;top:178.5px;width:91.0px;height:21.2px;background:#4a2a47;line-height:22.2px;text-align:center;white-space:pre;overflow:hidden;font-weight:bold;letter-spacing:-0.35px;color:#fff">2C</div>
<div class="a" style="left:1588.0px;top:178.5px;width:91.0px;height:21.2px;background:#dbd1c1;line-height:22.2px;text-align:center;white-space:pre;overflow:hidden;font-weight:bold;letter-spacing:-0.35px;color:#000">2D</div>
<div class="a" style="left:1680.0px;top:178.5px;width:91.0px;height:21.2px;background:#6e3d22;line-height:22.2px;text-align:center;white-space:pre;overflow:hidden;font-weight:bold;letter-spacing:-0.35px;color:#fff">2E</div>
<div class="a" style="left:10.5px;top:200.7px;width:85.0px;height:24.6px;background:#f0f0f0;line-height:25.6px;text-align:center;white-space:pre;overflow:hidden;font-weight:bold;letter-spacing:-0.35px;border-right:1px solid #555;border-bottom:1px solid #555">x</div>
<div class="a" style="left:96.5px;top:201.7px;width:87.5px;height:23.6px;background:#fff;line-height:24.6px;text-align:right;white-space:pre;overflow:hidden;letter-spacing:-0.62px;padding-right:2px;">0.3128</div>
<div class="a" style="left:185.0px;top:201.7px;width:86.5px;height:23.6px;background:#fff;line-height:24.6px;text-align:right;white-space:pre;overflow:hidden;letter-spacing:-0.62px;padding-right:2px;">0.3137</div>
<div class="a" style="left:272.5px;top:201.7px;width:86.0px;height:23.6px;background:#fff;line-height:24.6px;text-align:right;white-space:pre;overflow:hidden;letter-spacing:-0.62px;padding-right:2px;">0.3143</div>
<div class="a" style="left:359.5px;top:201.7px;width:86.0px;height:23.6px;background:#fff;line-height:24.6px;text-align:right;white-space:pre;overflow:hidden;letter-spacing:-0.62px;padding-right:2px;">0.3140</div>
<div class="a" style="left:446.5px;top:201.7px;width:86.0px;height:23.6px;background:#fff;line-height:24.6px;text-align:right;white-space:pre;overflow:hidden;letter-spacing:-0.62px;padding-right:2px;">0.3133</div>
<div class="a" style="left:533.5px;top:201.7px;width:86.0px;height:23.6px;background:#fff;line-height:24.6px;text-align:right;white-space:pre;overflow:hidden;letter-spacing:-0.62px;padding-right:2px;">0.3129</div>
<div class="a" style="left:620.5px;top:201.7px;width:86.0px;height:23.6px;background:#fff;line-height:24.6px;text-align:right;white-space:pre;overflow:hidden;letter-spacing:-0.62px;padding-right:2px;">0.3123</div>
<div class="a" style="left:707.5px;top:201.7px;width:86.0px;height:23.6px;background:#fff;line-height:24.6px;text-align:right;white-space:pre;overflow:hidden;letter-spacing:-0.62px;padding-right:2px;">0.3130</div>
<div class="a" style="left:794.5px;top:201.7px;width:86.0px;height:23.6px;background:#fff;line-height:24.6px;text-align:right;white-space:pre;overflow:hidden;letter-spacing:-0.62px;padding-right:2px;">0.3131</div>
<div class="a" style="left:881.5px;top:201.7px;width:85.5px;height:23.6px;background:#fff;line-height:24.6px;text-align:right;white-space:pre;overflow:hidden;letter-spacing:-0.62px;padding-right:2px;">0.3136</div>
<div class="a" style="left:968.0px;top:201.7px;width:85.0px;height:23.6px;background:#fff;line-height:24.6px;text-align:right;white-space:pre;overflow:hidden;letter-spacing:-0.62px;padding-right:2px;">0.3131</div>
<div class="a" style="left:1054.0px;top:201.7px;width:85.0px;height:23.6px;background:#fff;line-height:24.6px;text-align:right;white-space:pre;overflow:hidden;letter-spacing:-0.62px;padding-right:2px;">0.3126</div>
<div class="a" style="left:1140.0px;top:201.7px;width:85.0px;height:23.6px;background:#fff;line-height:24.6px;text-align:right;white-space:pre;overflow:hidden;letter-spacing:-0.62px;padding-right:2px;">0.3133</div>
<div class="a" style="left:1226.0px;top:201.7px;width:85.0px;height:23.6px;background:#fff;line-height:24.6px;text-align:right;white-space:pre;overflow:hidden;letter-spacing:-0.62px;padding-right:2px;">0.3108</div>
<div class="a" style="left:1312.0px;top:201.7px;width:91.0px;height:23.6px;background:#fff;line-height:24.6px;text-align:right;white-space:pre;overflow:hidden;letter-spacing:-0.62px;padding-right:2px;">0.3333</div>
<div class="a" style="left:1404.0px;top:201.7px;width:91.0px;height:23.6px;background:#fff;line-height:24.6px;text-align:right;white-space:pre;overflow:hidden;letter-spacing:-0.62px;padding-right:2px;">0.4540</div>
<div class="a" style="left:1496.0px;top:201.7px;width:91.0px;height:23.6px;background:#fff;line-height:24.6px;text-align:right;white-space:pre;overflow:hidden;letter-spacing:-0.62px;padding-right:2px;">0.3272</div>
<div class="a" style="left:1588.0px;top:201.7px;width:91.0px;height:23.6px;background:#fff;line-height:24.6px;text-align:right;white-space:pre;overflow:hidden;letter-spacing:-0.62px;padding-right:2px;">0.3326</div>
<div class="a" style="left:1680.0px;top:201.7px;width:91.0px;height:23.6px;background:#fff;line-height:24.6px;text-align:right;white-space:pre;overflow:hidden;letter-spacing:-0.62px;padding-right:2px;">0.4851</div>
<div class="a" style="left:10.5px;top:225.3px;width:85.0px;height:25.0px;background:#f0f0f0;line-height:26.0px;text-align:center;white-space:pre;overflow:hidden;font-weight:bold;letter-spacing:-0.35px;border-right:1px solid #555;border-bottom:1px solid #555">y</div>
<div class="a" style="left:96.5px;top:226.3px;width:87.5px;height:24.0px;background:#fff;line-height:25.0px;text-align:right;white-space:pre;overflow:hidden;letter-spacing:-0.62px;padding-right:2px;">0.3190</div>
<div class="a" style="left:185.0px;top:226.3px;width:86.5px;height:24.0px;background:#fff;line-height:25.0px;text-align:right;white-space:pre;overflow:hidden;letter-spacing:-0.62px;padding-right:2px;">0.3202</div>
<div class="a" style="left:272.5px;top:226.3px;width:86.0px;height:24.0px;background:#fff;line-height:25.0px;text-align:right;white-space:pre;overflow:hidden;letter-spacing:-0.62px;padding-right:2px;">0.3216</div>
<div class="a" style="left:359.5px;top:226.3px;width:86.0px;height:24.0px;background:#fff;line-height:25.0px;text-align:right;white-space:pre;overflow:hidden;letter-spacing:-0.62px;padding-right:2px;">0.3212</div>
<div class="a" style="left:446.5px;top:226.3px;width:86.0px;height:24.0px;background:#fff;line-height:25.0px;text-align:right;white-space:pre;overflow:hidden;letter-spacing:-0.62px;padding-right:2px;">0.3203</div>
<div class="a" style="left:533.5px;top:226.3px;width:86.0px;height:24.0px;background:#fff;line-height:25.0px;text-align:right;white-space:pre;overflow:hidden;letter-spacing:-0.62px;padding-right:2px;">0.3189</div>
<div class="a" style="left:620.5px;top:226.3px;width:86.0px;height:24.0px;background:#fff;line-height:25.0px;text-align:right;white-space:pre;overflow:hidden;letter-spacing:-0.62px;padding-right:2px;">0.3184</div>
<div class="a" style="left:707.5px;top:226.3px;width:86.0px;height:24.0px;background:#fff;line-height:25.0px;text-align:right;white-space:pre;overflow:hidden;letter-spacing:-0.62px;padding-right:2px;">0.3189</div>
<div class="a" style="left:794.5px;top:226.3px;width:86.0px;height:24.0px;background:#fff;line-height:25.0px;text-align:right;white-space:pre;overflow:hidden;letter-spacing:-0.62px;padding-right:2px;">0.3196</div>
<div class="a" style="left:881.5px;top:226.3px;width:85.5px;height:24.0px;background:#fff;line-height:25.0px;text-align:right;white-space:pre;overflow:hidden;letter-spacing:-0.62px;padding-right:2px;">0.3208</div>
<div class="a" style="left:968.0px;top:226.3px;width:85.0px;height:24.0px;background:#fff;line-height:25.0px;text-align:right;white-space:pre;overflow:hidden;letter-spacing:-0.62px;padding-right:2px;">0.3219</div>
<div class="a" style="left:1054.0px;top:226.3px;width:85.0px;height:24.0px;background:#fff;line-height:25.0px;text-align:right;white-space:pre;overflow:hidden;letter-spacing:-0.62px;padding-right:2px;">0.3223</div>
<div class="a" style="left:1140.0px;top:226.3px;width:85.0px;height:24.0px;background:#fff;line-height:25.0px;text-align:right;white-space:pre;overflow:hidden;letter-spacing:-0.62px;padding-right:2px;">0.3220</div>
<div class="a" style="left:1226.0px;top:226.3px;width:85.0px;height:24.0px;background:#fff;line-height:25.0px;text-align:right;white-space:pre;overflow:hidden;letter-spacing:-0.62px;padding-right:2px;">0.3232</div>
<div class="a" style="left:1312.0px;top:226.3px;width:91.0px;height:24.0px;background:#fff;line-height:25.0px;text-align:right;white-space:pre;overflow:hidden;letter-spacing:-0.62px;padding-right:2px;">0.3333</div>
<div class="a" style="left:1404.0px;top:226.3px;width:91.0px;height:24.0px;background:#fff;line-height:25.0px;text-align:right;white-space:pre;overflow:hidden;letter-spacing:-0.62px;padding-right:2px;">0.2397</div>
<div class="a" style="left:1496.0px;top:226.3px;width:91.0px;height:24.0px;background:#fff;line-height:25.0px;text-align:right;white-space:pre;overflow:hidden;letter-spacing:-0.62px;padding-right:2px;">0.2414</div>
<div class="a" style="left:1588.0px;top:226.3px;width:91.0px;height:24.0px;background:#fff;line-height:25.0px;text-align:right;white-space:pre;overflow:hidden;letter-spacing:-0.62px;padding-right:2px;">0.3405</div>
<div class="a" style="left:1680.0px;top:226.3px;width:91.0px;height:24.0px;background:#fff;line-height:25.0px;text-align:right;white-space:pre;overflow:hidden;letter-spacing:-0.62px;padding-right:2px;">0.3776</div>
<div class="a" style="left:10.5px;top:250.3px;width:85.0px;height:25.4px;background:#f0f0f0;line-height:26.4px;text-align:center;white-space:pre;overflow:hidden;font-weight:bold;letter-spacing:-0.35px;border-right:1px solid #555;border-bottom:1px solid #555">Y</div>
<div class="a" style="left:96.5px;top:251.3px;width:87.5px;height:24.4px;background:#fff;line-height:25.4px;text-align:right;white-space:pre;overflow:hidden;letter-spacing:-0.62px;padding-right:2px;">240.721</div>
<div class="a" style="left:185.0px;top:251.3px;width:86.5px;height:24.4px;background:#fff;line-height:25.4px;text-align:right;white-space:pre;overflow:hidden;letter-spacing:-0.62px;padding-right:2px;">180.356</div>
<div class="a" style="left:272.5px;top:251.3px;width:86.0px;height:24.4px;background:#fff;line-height:25.4px;text-align:right;white-space:pre;overflow:hidden;letter-spacing:-0.62px;padding-right:2px;">136.518</div>
<div class="a" style="left:359.5px;top:251.3px;width:86.0px;height:24.4px;background:#fff;line-height:25.4px;text-align:right;white-space:pre;overflow:hidden;letter-spacing:-0.62px;padding-right:2px;">115.155</div>
<div class="a" style="left:446.5px;top:251.3px;width:86.0px;height:24.4px;background:#fff;line-height:25.4px;text-align:right;white-space:pre;overflow:hidden;letter-spacing:-0.62px;padding-right:2px;">97.376</div>
<div class="a" style="left:533.5px;top:251.3px;width:86.0px;height:24.4px;background:#fff;line-height:25.4px;text-align:right;white-space:pre;overflow:hidden;letter-spacing:-0.62px;padding-right:2px;">79.293</div>
<div class="a" style="left:620.5px;top:251.3px;width:86.0px;height:24.4px;background:#fff;line-height:25.4px;text-align:right;white-space:pre;overflow:hidden;letter-spacing:-0.62px;padding-right:2px;">65.968</div>
<div class="a" style="left:707.5px;top:251.3px;width:86.0px;height:24.4px;background:#fff;line-height:25.4px;text-align:right;white-space:pre;overflow:hidden;letter-spacing:-0.62px;padding-right:2px;">43.542</div>
<div class="a" style="left:794.5px;top:251.3px;width:86.0px;height:24.4px;background:#fff;line-height:25.4px;text-align:right;white-space:pre;overflow:hidden;letter-spacing:-0.62px;padding-right:2px;">35.616</div>
<div class="a" style="left:881.5px;top:251.3px;width:85.5px;height:24.4px;background:#fff;line-height:25.4px;text-align:right;white-space:pre;overflow:hidden;letter-spacing:-0.62px;padding-right:2px;">27.188</div>
<div class="a" style="left:968.0px;top:251.3px;width:85.0px;height:24.4px;background:#fff;line-height:25.4px;text-align:right;white-space:pre;overflow:hidden;letter-spacing:-0.62px;padding-right:2px;">20.760</div>
<div class="a" style="left:1054.0px;top:251.3px;width:85.0px;height:24.4px;background:#fff;line-height:25.4px;text-align:right;white-space:pre;overflow:hidden;letter-spacing:-0.62px;padding-right:2px;">16.136</div>
<div class="a" style="left:1140.0px;top:251.3px;width:85.0px;height:24.4px;background:#fff;line-height:25.4px;text-align:right;white-space:pre;overflow:hidden;letter-spacing:-0.62px;padding-right:2px;">8.047</div>
<div class="a" style="left:1226.0px;top:251.3px;width:85.0px;height:24.4px;background:#fff;line-height:25.4px;text-align:right;white-space:pre;overflow:hidden;letter-spacing:-0.62px;padding-right:2px;">5.189</div>
<div class="a" style="left:1312.0px;top:251.3px;width:91.0px;height:24.4px;background:#fff;line-height:25.4px;text-align:right;white-space:pre;overflow:hidden;letter-spacing:-0.62px;padding-right:2px;">0.000</div>
<div class="a" style="left:1404.0px;top:251.3px;width:91.0px;height:24.4px;background:#fff;line-height:25.4px;text-align:right;white-space:pre;overflow:hidden;letter-spacing:-0.62px;padding-right:2px;">18.509</div>
<div class="a" style="left:1496.0px;top:251.3px;width:91.0px;height:24.4px;background:#fff;line-height:25.4px;text-align:right;white-space:pre;overflow:hidden;letter-spacing:-0.62px;padding-right:2px;">8.782</div>
<div class="a" style="left:1588.0px;top:251.3px;width:91.0px;height:24.4px;background:#fff;line-height:25.4px;text-align:right;white-space:pre;overflow:hidden;letter-spacing:-0.62px;padding-right:2px;">160.681</div>
<div class="a" style="left:1680.0px;top:251.3px;width:91.0px;height:24.4px;background:#fff;line-height:25.4px;text-align:right;white-space:pre;overflow:hidden;letter-spacing:-0.62px;padding-right:2px;">17.045</div>
<div class="a" style="left:10.5px;top:275.7px;width:85.0px;height:24.6px;background:#f0f0f0;line-height:25.6px;text-align:center;white-space:pre;overflow:hidden;font-weight:bold;letter-spacing:-0.35px;border-right:1px solid #555;border-bottom:1px solid #555">Delta E</div>
<div class="a" style="left:96.5px;top:276.7px;width:87.5px;height:23.6px;background:#ffaaaa;line-height:24.6px;text-align:right;white-space:pre;overflow:hidden;font-weight:bold;letter-spacing:-0.5px;padding-right:2px;">7.4</div>
<div class="a" style="left:185.0px;top:276.7px;width:86.5px;height:23.6px;background:#ffaaaa;line-height:24.6px;text-align:right;white-space:pre;overflow:hidden;font-weight:bold;letter-spacing:-0.5px;padding-right:2px;">6.6</div>
<div class="a" style="left:272.5px;top:276.7px;width:86.0px;height:23.6px;background:#ffaaaa;line-height:24.6px;text-align:right;white-space:pre;overflow:hidden;font-weight:bold;letter-spacing:-0.5px;padding-right:2px;">5.5</div>
<div class="a" style="left:359.5px;top:276.7px;width:86.0px;height:23.6px;background:#ffaaaa;line-height:24.6px;text-align:right;white-space:pre;overflow:hidden;font-weight:bold;letter-spacing:-0.5px;padding-right:2px;">5.3</div>
<div class="a" style="left:446.5px;top:276.7px;width:86.0px;height:23.6px;background:#ffaaaa;line-height:24.6px;text-align:right;white-space:pre;overflow:hidden;font-weight:bold;letter-spacing:-0.5px;padding-right:2px;">5.3</div>
<div class="a" style="left:533.5px;top:276.7px;width:86.0px;height:23.6px;background:#ffaaaa;line-height:24.6px;text-align:right;white-space:pre;overflow:hidden;font-weight:bold;letter-spacing:-0.5px;padding-right:2px;">5.5</div>
<div class="a" style="left:620.5px;top:276.7px;width:86.0px;height:23.6px;background:#ffaaaa;line-height:24.6px;text-align:right;white-space:pre;overflow:hidden;font-weight:bold;letter-spacing:-0.5px;padding-right:2px;">5.2</div>
<div class="a" style="left:707.5px;top:276.7px;width:86.0px;height:23.6px;background:#ffaaaa;line-height:24.6px;text-align:right;white-space:pre;overflow:hidden;font-weight:bold;letter-spacing:-0.5px;padding-right:2px;">4.7</div>
<div class="a" style="left:794.5px;top:276.7px;width:86.0px;height:23.6px;background:#ffaaaa;line-height:24.6px;text-align:right;white-space:pre;overflow:hidden;font-weight:bold;letter-spacing:-0.5px;padding-right:2px;">4.2</div>
<div class="a" style="left:881.5px;top:276.7px;width:85.5px;height:23.6px;background:#ffaaaa;line-height:24.6px;text-align:right;white-space:pre;overflow:hidden;font-weight:bold;letter-spacing:-0.5px;padding-right:2px;">3.6</div>
<div class="a" style="left:968.0px;top:276.7px;width:85.0px;height:23.6px;background:#ffffaa;line-height:24.6px;text-align:right;white-space:pre;overflow:hidden;font-weight:bold;letter-spacing:-0.5px;padding-right:2px;">2.7</div>
<div class="a" style="left:1054.0px;top:276.7px;width:85.0px;height:23.6px;background:#ffffaa;line-height:24.6px;text-align:right;white-space:pre;overflow:hidden;font-weight:bold;letter-spacing:-0.5px;padding-right:2px;">2.3</div>
<div class="a" style="left:1140.0px;top:276.7px;width:85.0px;height:23.6px;background:#ffffaa;line-height:24.6px;text-align:right;white-space:pre;overflow:hidden;font-weight:bold;letter-spacing:-0.5px;padding-right:2px;">2.1</div>
<div class="a" style="left:1226.0px;top:276.7px;width:85.0px;height:23.6px;background:#aaffaa;line-height:24.6px;text-align:right;white-space:pre;overflow:hidden;font-weight:bold;letter-spacing:-0.5px;padding-right:2px;">1.3</div>
<div class="a" style="left:1312.0px;top:276.7px;width:91.0px;height:23.6px;background:#aaffaa;line-height:24.6px;text-align:right;white-space:pre;overflow:hidden;font-weight:bold;letter-spacing:-0.5px;padding-right:2px;">0.0</div>
<div class="a" style="left:1404.0px;top:276.7px;width:91.0px;height:23.6px;background:#aaffaa;line-height:24.6px;text-align:right;white-space:pre;overflow:hidden;font-weight:bold;letter-spacing:-0.5px;padding-right:2px;">1.5</div>
<div class="a" style="left:1496.0px;top:276.7px;width:91.0px;height:23.6px;background:#aaffaa;line-height:24.6px;text-align:right;white-space:pre;overflow:hidden;font-weight:bold;letter-spacing:-0.5px;padding-right:2px;">1.1</div>
<div class="a" style="left:1588.0px;top:276.7px;width:91.0px;height:23.6px;background:#ffaaaa;line-height:24.6px;text-align:right;white-space:pre;overflow:hidden;font-weight:bold;letter-spacing:-0.5px;padding-right:2px;">6.4</div>
<div class="a" style="left:1680.0px;top:276.7px;width:91.0px;height:23.6px;background:#ffffaa;line-height:24.6px;text-align:right;white-space:pre;overflow:hidden;font-weight:bold;letter-spacing:-0.5px;padding-right:2px;">2.2</div>
<div class="a" style="left:10.5px;top:300.3px;width:85.0px;height:25.0px;background:#f0f0f0;line-height:26.0px;text-align:center;white-space:pre;overflow:hidden;font-weight:bold;letter-spacing:-0.35px;border-right:1px solid #555;border-bottom:1px solid #555">delta xy</div>
<div class="a" style="left:96.5px;top:301.3px;width:87.5px;height:24.0px;background:#f0f0f0;line-height:25.0px;text-align:right;white-space:pre;overflow:hidden;letter-spacing:-0.62px;padding-right:2px;">0.0100</div>
<div class="a" style="left:185.0px;top:301.3px;width:86.5px;height:24.0px;background:#f0f0f0;line-height:25.0px;text-align:right;white-space:pre;overflow:hidden;letter-spacing:-0.62px;padding-right:2px;">0.0089</div>
<div class="a" style="left:272.5px;top:301.3px;width:86.0px;height:24.0px;background:#f0f0f0;line-height:25.0px;text-align:right;white-space:pre;overflow:hidden;letter-spacing:-0.62px;padding-right:2px;">0.0075</div>
<div class="a" style="left:359.5px;top:301.3px;width:86.0px;height:24.0px;background:#f0f0f0;line-height:25.0px;text-align:right;white-space:pre;overflow:hidden;letter-spacing:-0.62px;padding-right:2px;">0.0079</div>
<div class="a" style="left:446.5px;top:301.3px;width:86.0px;height:24.0px;background:#f0f0f0;line-height:25.0px;text-align:right;white-space:pre;overflow:hidden;letter-spacing:-0.62px;padding-right:2px;">0.0087</div>
<div class="a" style="left:533.5px;top:301.3px;width:86.0px;height:24.0px;background:#f0f0f0;line-height:25.0px;text-align:right;white-space:pre;overflow:hidden;letter-spacing:-0.62px;padding-right:2px;">0.0101</div>
<div class="a" style="left:620.5px;top:301.3px;width:86.0px;height:24.0px;background:#f0f0f0;line-height:25.0px;text-align:right;white-space:pre;overflow:hidden;letter-spacing:-0.62px;padding-right:2px;">0.0106</div>
<div class="a" style="left:707.5px;top:301.3px;width:86.0px;height:24.0px;background:#f0f0f0;line-height:25.0px;text-align:right;white-space:pre;overflow:hidden;letter-spacing:-0.62px;padding-right:2px;">0.0101</div>
<div class="a" style="left:794.5px;top:301.3px;width:86.0px;height:24.0px;background:#f0f0f0;line-height:25.0px;text-align:right;white-space:pre;overflow:hidden;letter-spacing:-0.62px;padding-right:2px;">0.0094</div>
<div class="a" style="left:881.5px;top:301.3px;width:85.5px;height:24.0px;background:#f0f0f0;line-height:25.0px;text-align:right;white-space:pre;overflow:hidden;letter-spacing:-0.62px;padding-right:2px;">0.0083</div>
<div class="a" style="left:968.0px;top:301.3px;width:85.0px;height:24.0px;background:#f0f0f0;line-height:25.0px;text-align:right;white-space:pre;overflow:hidden;letter-spacing:-0.62px;padding-right:2px;">0.0071</div>
<div class="a" style="left:1054.0px;top:301.3px;width:85.0px;height:24.0px;background:#f0f0f0;line-height:25.0px;text-align:right;white-space:pre;overflow:hidden;letter-spacing:-0.62px;padding-right:2px;">0.0068</div>
<div class="a" style="left:1140.0px;top:301.3px;width:85.0px;height:24.0px;background:#f0f0f0;line-height:25.0px;text-align:right;white-space:pre;overflow:hidden;letter-spacing:-0.62px;padding-right:2px;">0.0070</div>
<div class="a" style="left:1226.0px;top:301.3px;width:85.0px;height:24.0px;background:#f0f0f0;line-height:25.0px;text-align:right;white-space:pre;overflow:hidden;letter-spacing:-0.62px;padding-right:2px;">0.0061</div>
<div class="a" style="left:1312.0px;top:301.3px;width:91.0px;height:24.0px;background:#f0f0f0;line-height:25.0px;text-align:right;white-space:pre;overflow:hidden;letter-spacing:-0.62px;padding-right:2px;">0.0211</div>
<div class="a" style="left:1404.0px;top:301.3px;width:91.0px;height:24.0px;background:#f0f0f0;line-height:25.0px;text-align:right;white-space:pre;overflow:hidden;letter-spacing:-0.62px;padding-right:2px;">0.0080</div>
<div class="a" style="left:1496.0px;top:301.3px;width:91.0px;height:24.0px;background:#f0f0f0;line-height:25.0px;text-align:right;white-space:pre;overflow:hidden;letter-spacing:-0.62px;padding-right:2px;">0.0022</div>
<div class="a" style="left:1588.0px;top:301.3px;width:91.0px;height:24.0px;background:#f0f0f0;line-height:25.0px;text-align:right;white-space:pre;overflow:hidden;letter-spacing:-0.62px;padding-right:2px;">0.0076</div>
<div class="a" style="left:1680.0px;top:301.3px;width:91.0px;height:24.0px;background:#f0f0f0;line-height:25.0px;text-align:right;white-space:pre;overflow:hidden;letter-spacing:-0.62px;padding-right:2px;">0.0101</div>
<div class="a" style="left:10.5px;top:325.3px;width:85.0px;height:25.0px;background:#f0f0f0;line-height:26.0px;text-align:center;white-space:pre;overflow:hidden;font-weight:bold;letter-spacing:-0.35px;border-right:1px solid #555;border-bottom:1px solid #555">delta L</div>
<div class="a" style="left:96.5px;top:326.3px;width:87.5px;height:24.0px;background:#e1e1e1;line-height:25.0px;text-align:right;white-space:pre;overflow:hidden;letter-spacing:-0.62px;padding-right:2px;">+4.0 %</div>
<div class="a" style="left:185.0px;top:326.3px;width:86.5px;height:24.0px;background:#e1e1e1;line-height:25.0px;text-align:right;white-space:pre;overflow:hidden;letter-spacing:-0.62px;padding-right:2px;">+5.3 %</div>
<div class="a" style="left:272.5px;top:326.3px;width:86.0px;height:24.0px;background:#e1e1e1;line-height:25.0px;text-align:right;white-space:pre;overflow:hidden;letter-spacing:-0.62px;padding-right:2px;">+4.3 %</div>
<div class="a" style="left:359.5px;top:326.3px;width:86.0px;height:24.0px;background:#e1e1e1;line-height:25.0px;text-align:right;white-space:pre;overflow:hidden;letter-spacing:-0.62px;padding-right:2px;">+2.0 %</div>
<div class="a" style="left:446.5px;top:326.3px;width:86.0px;height:24.0px;background:#e1e1e1;line-height:25.0px;text-align:right;white-space:pre;overflow:hidden;letter-spacing:-0.62px;padding-right:2px;">+1.1 %</div>
<div class="a" style="left:533.5px;top:326.3px;width:86.0px;height:24.0px;background:#e1e1e1;line-height:25.0px;text-align:right;white-space:pre;overflow:hidden;letter-spacing:-0.62px;padding-right:2px;">+0.9 %</div>
<div class="a" style="left:620.5px;top:326.3px;width:86.0px;height:24.0px;background:#e1e1e1;line-height:25.0px;text-align:right;white-space:pre;overflow:hidden;letter-spacing:-0.62px;padding-right:2px;">+1.4 %</div>
<div class="a" style="left:707.5px;top:326.3px;width:86.0px;height:24.0px;background:#e1e1e1;line-height:25.0px;text-align:right;white-space:pre;overflow:hidden;letter-spacing:-0.62px;padding-right:2px;">+3.2 %</div>
<div class="a" style="left:794.5px;top:326.3px;width:86.0px;height:24.0px;background:#e1e1e1;line-height:25.0px;text-align:right;white-space:pre;overflow:hidden;letter-spacing:-0.62px;padding-right:2px;">+3.7 %</div>
<div class="a" style="left:881.5px;top:326.3px;width:85.5px;height:24.0px;background:#e1e1e1;line-height:25.0px;text-align:right;white-space:pre;overflow:hidden;letter-spacing:-0.62px;padding-right:2px;">+4.7 %</div>
<div class="a" style="left:968.0px;top:326.3px;width:85.0px;height:24.0px;background:#e1e1e1;line-height:25.0px;text-align:right;white-space:pre;overflow:hidden;letter-spacing:-0.62px;padding-right:2px;">+3.6 %</div>
<div class="a" style="left:1054.0px;top:326.3px;width:85.0px;height:24.0px;background:#e1e1e1;line-height:25.0px;text-align:right;white-space:pre;overflow:hidden;letter-spacing:-0.62px;padding-right:2px;">+4.4 %</div>
<div class="a" style="left:1140.0px;top:326.3px;width:85.0px;height:24.0px;background:#e1e1e1;line-height:25.0px;text-align:right;white-space:pre;overflow:hidden;letter-spacing:-0.62px;padding-right:2px;">+7.6 %</div>
<div class="a" style="left:1226.0px;top:326.3px;width:85.0px;height:24.0px;background:#e1e1e1;line-height:25.0px;text-align:right;white-space:pre;overflow:hidden;letter-spacing:-0.62px;padding-right:2px;">+12.1 %</div>
<div class="a" style="left:1312.0px;top:326.3px;width:91.0px;height:24.0px;background:#e1e1e1;line-height:25.0px;text-align:right;white-space:pre;overflow:hidden;letter-spacing:-0.62px;padding-right:2px;">+inf %</div>
<div class="a" style="left:1404.0px;top:326.3px;width:91.0px;height:24.0px;background:#e1e1e1;line-height:25.0px;text-align:right;white-space:pre;overflow:hidden;letter-spacing:-0.62px;padding-right:2px;">+8.5 %</div>
<div class="a" style="left:1496.0px;top:326.3px;width:91.0px;height:24.0px;background:#e1e1e1;line-height:25.0px;text-align:right;white-space:pre;overflow:hidden;letter-spacing:-0.62px;padding-right:2px;">+9.6 %</div>
<div class="a" style="left:1588.0px;top:326.3px;width:91.0px;height:24.0px;background:#e1e1e1;line-height:25.0px;text-align:right;white-space:pre;overflow:hidden;letter-spacing:-0.62px;padding-right:2px;">+6.4 %</div>
<div class="a" style="left:1680.0px;top:326.3px;width:91.0px;height:24.0px;background:#e1e1e1;line-height:25.0px;text-align:right;white-space:pre;overflow:hidden;letter-spacing:-0.62px;padding-right:2px;">+5.2 %</div>
<div class="a" style="left:10.5px;top:350.3px;width:85.0px;height:4.7px;background:#f0f0f0;line-height:5.7px;text-align:center;white-space:pre;overflow:hidden;border-right:1px solid #555"></div>
<div class="a" style="left:96.5px;top:351.3px;width:87.5px;height:3.7px;background:#f0f0f0;line-height:4.7px;text-align:center;white-space:pre;overflow:hidden;"></div>
<div class="a" style="left:185.0px;top:351.3px;width:86.5px;height:3.7px;background:#f0f0f0;line-height:4.7px;text-align:center;white-space:pre;overflow:hidden;"></div>
<div class="a" style="left:272.5px;top:351.3px;width:86.0px;height:3.7px;background:#f0f0f0;line-height:4.7px;text-align:center;white-space:pre;overflow:hidden;"></div>
<div class="a" style="left:359.5px;top:351.3px;width:86.0px;height:3.7px;background:#f0f0f0;line-height:4.7px;text-align:center;white-space:pre;overflow:hidden;"></div>
<div class="a" style="left:446.5px;top:351.3px;width:86.0px;height:3.7px;background:#f0f0f0;line-height:4.7px;text-align:center;white-space:pre;overflow:hidden;"></div>
<div class="a" style="left:533.5px;top:351.3px;width:86.0px;height:3.7px;background:#f0f0f0;line-height:4.7px;text-align:center;white-space:pre;overflow:hidden;"></div>
<div class="a" style="left:620.5px;top:351.3px;width:86.0px;height:3.7px;background:#f0f0f0;line-height:4.7px;text-align:center;white-space:pre;overflow:hidden;"></div>
<div class="a" style="left:707.5px;top:351.3px;width:86.0px;height:3.7px;background:#f0f0f0;line-height:4.7px;text-align:center;white-space:pre;overflow:hidden;"></div>
<div class="a" style="left:794.5px;top:351.3px;width:86.0px;height:3.7px;background:#f0f0f0;line-height:4.7px;text-align:center;white-space:pre;overflow:hidden;"></div>
<div class="a" style="left:881.5px;top:351.3px;width:85.5px;height:3.7px;background:#f0f0f0;line-height:4.7px;text-align:center;white-space:pre;overflow:hidden;"></div>
<div class="a" style="left:968.0px;top:351.3px;width:85.0px;height:3.7px;background:#f0f0f0;line-height:4.7px;text-align:center;white-space:pre;overflow:hidden;"></div>
<div class="a" style="left:1054.0px;top:351.3px;width:85.0px;height:3.7px;background:#f0f0f0;line-height:4.7px;text-align:center;white-space:pre;overflow:hidden;"></div>
<div class="a" style="left:1140.0px;top:351.3px;width:85.0px;height:3.7px;background:#f0f0f0;line-height:4.7px;text-align:center;white-space:pre;overflow:hidden;"></div>
<div class="a" style="left:1226.0px;top:351.3px;width:85.0px;height:3.7px;background:#f0f0f0;line-height:4.7px;text-align:center;white-space:pre;overflow:hidden;"></div>
<div class="a" style="left:1312.0px;top:351.3px;width:91.0px;height:3.7px;background:#f0f0f0;line-height:4.7px;text-align:center;white-space:pre;overflow:hidden;"></div>
<div class="a" style="left:1404.0px;top:351.3px;width:91.0px;height:3.7px;background:#f0f0f0;line-height:4.7px;text-align:center;white-space:pre;overflow:hidden;"></div>
<div class="a" style="left:1496.0px;top:351.3px;width:91.0px;height:3.7px;background:#f0f0f0;line-height:4.7px;text-align:center;white-space:pre;overflow:hidden;"></div>
<div class="a" style="left:1588.0px;top:351.3px;width:91.0px;height:3.7px;background:#f0f0f0;line-height:4.7px;text-align:center;white-space:pre;overflow:hidden;"></div>
<div class="a" style="left:1680.0px;top:351.3px;width:91.0px;height:3.7px;background:#f0f0f0;line-height:4.7px;text-align:center;white-space:pre;overflow:hidden;"></div>
<div class="a" style="left:1779px;top:195px;width:2px;height:127px;background:#858585;border-radius:1px"></div>
<div class="a" style="left:27px;top:362.6px;width:336px;height:2px;background:#858585;border-radius:1px"></div>
<div class="pn" style="left:1815px;top:163px;width:80px;height:97px;"><div class="pb"><div class="ph" style="height:17px"></div><div class="t hd" style="left:6px;top:4px">Display</div><div class="a" style="left:7px;top:17.0px;width:11px;height:11px;border-radius:50%;background:#fff;border:1.4px solid #b0b0b0;border-right-color:#eee;border-bottom-color:#eee"></div><div class="t dj" style="left:25px;top:18.5px;font-size:12.5px;color:#a8a8a8;text-shadow:1px 1px 0 #fff">Sensor</div><div class="a" style="left:7px;top:32.7px;width:11px;height:11px;border-radius:50%;background:#fff;border:1.4px solid #777;border-right-color:#eee;border-bottom-color:#eee"></div><div class="t dj" style="left:25px;top:34.2px;font-size:12.5px;color:#000;">RGB</div><div class="a" style="left:7px;top:48.4px;width:11px;height:11px;border-radius:50%;background:#fff;border:1.4px solid #777;border-right-color:#eee;border-bottom-color:#eee"></div><div class="t dj" style="left:25px;top:49.9px;font-size:12.5px;color:#000;">XYZ</div><div class="a" style="left:7px;top:64.1px;width:11px;height:11px;border-radius:50%;background:#fff;border:1.4px solid #777;border-right-color:#eee;border-bottom-color:#eee"></div><div class="t dj" style="left:25px;top:65.6px;font-size:12.5px;color:#000;">xyz</div><div class="a" style="left:7px;top:79.8px;width:11px;height:11px;border-radius:50%;background:#fff;border:1.4px solid #777;border-right-color:#eee;border-bottom-color:#eee"></div><div class="a" style="left:10.5px;top:83.3px;width:4px;height:4px;border-radius:50%;background:#000"></div><div class="t dj" style="left:25px;top:81.3px;font-size:12.5px;color:#000;">xyY</div><div class="pe"></div></div></div>
<div class="a" style="left:1814px;top:266.5px;width:82px;height:28px;background:#ebebeb;border:1.5px solid #fff;border-right-color:#7a7a7a;border-bottom-color:#7a7a7a"><svg class="a" style="left:3px;top:1px" width="34" height="25" viewBox="0 0 34 25"><path d="M2 2h8v20h-8z" fill="#cfcfcf" stroke="#555" stroke-width=".8"/><path d="M24 4h8v20h-8z" fill="#cfcfcf" stroke="#555" stroke-width=".8"/><g fill="#444"><rect x="4" y="4" width="3" height="3"/><rect x="4" y="10" width="3" height="3"/><rect x="4" y="16" width="3" height="3"/><rect x="27" y="7" width="3" height="3"/><rect x="27" y="13" width="3" height="3"/><rect x="27" y="19" width="3" height="3"/></g><path d="M8 1l12-1 4 4-13 2z" fill="#e02020" stroke="#700" stroke-width=".6"/><path d="M11 7l12-2 2 9-11 3z" fill="#20c040" stroke="#064" stroke-width=".6"/><path d="M14 17l12-3 3 6-10 5z" fill="#3060e8" stroke="#024" stroke-width=".8"/></svg><div class="t dj" style="left:48px;top:6.5px;font-size:12.5px">Go</div></div>
<div class="a" style="left:1814px;top:295px;width:82px;height:29px;background:#ebebeb;border:1.5px solid #fff;border-right-color:#7a7a7a;border-bottom-color:#7a7a7a"><svg class="a" style="left:6px;top:1px" width="30" height="27" viewBox="0 0 30 27"><path d="M2 6q12-5 26-2l-5 21q-8 3-16 0z" fill="#a9d4f0" stroke="#5a9ad0" stroke-width="1"/><path d="M2 6q12 4 26-2" fill="none" stroke="#d8eefc" stroke-width="1.6"/><path d="M13 12a5 5 0 0 1 8 1l2-1-1 5-5-1 2-1a3 3 0 0 0-5-.6zM21 20a5 5 0 0 1-8-1l-2 1 1-5 5 1-2 1a3 3 0 0 0 5 .6z" fill="#18a838"/></svg><div class="t dj" style="left:36px;top:7.0px;font-size:12.5px">Delete</div></div>
<div class="a" style="left:1814px;top:324.5px;width:82px;height:29px;background:#ebebeb;border:1.5px solid #fff;border-right-color:#7a7a7a;border-bottom-color:#7a7a7a"><svg class="a" style="left:4px;top:3px" width="33" height="22" viewBox="0 0 33 22"><path d="M0 22v-10l2-2 1-3 1-4 1 4 1 3 2 2 1 1v9z" fill="#0000f0"/><path d="M0 22v-9l1.2-1.5v10.5z" fill="#000080"/><path d="M2 22v-12l1.5-1v13z" fill="#f0f"/><path d="M8.5 22v-14l1.5-2 2 3v13z" fill="#0ff"/><path d="M12 22v-12l2 1 2-1v12z" fill="#0f0"/><path d="M16 22v-13l2-5 2-4 2 3v19z" fill="#ff0"/><path d="M22 22v-19l2 4 2 3v12z" fill="#800000"/><path d="M26 22v-12h2l1-2h2l1 2h1v12z" fill="#f00"/></svg><div class="t dj" style="left:42px;top:7.0px;font-size:12.5px">Refs</div></div>
<div class="a" style="left:1818px;top:358px;width:56px;height:18px;background:#ebebeb"><div class="a" style="left:1.5px;top:2px;width:12.5px;height:12.5px;background:#fff;border:1.5px solid #6a6a6a;border-right-color:#f4f4f4;border-bottom-color:#f4f4f4"></div><div class="t dj" style="left:19px;top:2.5px;font-size:12.5px">Edit</div></div>
<div class="pn" style="left:5px;top:388px;width:378px;height:626px;"><div class="pb"><div class="ph" style="height:17px"></div><div class="t hd" style="left:6px;top:4px">Selected color</div><div class="a" style="left:7.5px;top:19.5px;width:113px;height:14px;background:#efefef"></div><div class="t dj" style="left:11.5px;top:21.5px;font-size:12.5px">RGB Levels</div><div class="a" style="left:223.5px;top:17.5px;width:128px;height:14px;background:#efefef"></div><div class="t dj" style="left:234.5px;top:20.0px;font-size:12.5px">Current Measure</div><div class="a" style="left:7.5px;top:43.5px;width:200px;height:86px;background:#efefef"></div><div class="a" style="left:7.5px;top:87.5px;width:200px;height:1px;background:repeating-linear-gradient(90deg,#707070 0 2px,transparent 2px 4px)"></div><div class="t" style="left:6.5px;top:107.5px;width:50px;text-align:center;font-family:'Liberation Serif',serif;font-weight:bold;font-size:11.5px;color:#222">0.0%</div><div class="t" style="left:57.5px;top:107.5px;width:50px;text-align:center;font-family:'Liberation Serif',serif;font-weight:bold;font-size:11.5px;color:#222">0.0%</div><div class="t" style="left:108.5px;top:107.5px;width:50px;text-align:center;font-family:'Liberation Serif',serif;font-weight:bold;font-size:11.5px;color:#222">0.0%</div><div class="t" style="left:159.5px;top:107.5px;width:50px;text-align:center;font-family:'Liberation Serif',serif;font-weight:bold;font-size:11.5px;color:#222">dE 0.0</div><div class="a" style="left:7.5px;top:123.89999999999998px;width:200px;height:5.8px;background:#000"></div><svg class="a" style="left:7.5px;top:119.5px" width="48" height="6" viewBox="0 0 48 6"><path d="M0 6q4-1 8-3.5q16-4.5 32 0q4 2.500 8 3.5z" fill="#000"/><path d="M2.500 5.200q5-1 7-2.200q14.500-3.500 29 0q3 1.500 7 2.200z" fill="#a80000"/></svg><svg class="a" style="left:58.5px;top:119.5px" width="48" height="6" viewBox="0 0 48 6"><path d="M0 6q4-1 8-3.5q16-4.5 32 0q4 2.500 8 3.5z" fill="#000"/><path d="M2.500 5.200q5-1 7-2.200q14.500-3.500 29 0q3 1.500 7 2.200z" fill="#00a000"/></svg><svg class="a" style="left:109.5px;top:119.5px" width="48" height="6" viewBox="0 0 48 6"><path d="M0 6q4-1 8-3.5q16-4.5 32 0q4 2.500 8 3.5z" fill="#000"/><path d="M2.500 5.200q5-1 7-2.200q14.500-3.500 29 0q3 1.500 7 2.200z" fill="#0000a8"/></svg><svg class="a" style="left:160.5px;top:119.5px" width="48" height="6" viewBox="0 0 48 6"><path d="M0 6q4-1 8-3.5q16-4.5 32 0q4 2.500 8 3.5z" fill="#000"/><path d="M2.500 5.200q5-1 7-2.200q14.500-3.500 29 0q3 1.500 7 2.200z" fill="#c08a00"/></svg><div class="a" style="left:9.5px;top:143.10000000000002px;width:192px;height:74px;background:#efefef"></div><div class="t" style="left:16.5px;top:145.0px;width:80px;text-align:center;font-weight:bold;font-size:12px;line-height:16.2px;font-family:'DejaVu Sans',sans-serif;letter-spacing:-0.25px">No<br>Measure</div><div class="t" style="left:112.5px;top:145.0px;width:80px;text-align:center;font-weight:bold;font-size:12px;line-height:16.2px;font-family:'DejaVu Sans',sans-serif;letter-spacing:-0.25px">No<br>Measure</div><div class="t dj" style="left:11.5px;top:234.5px;font-size:12.5px">Target</div><div class="a" style="left:43.5px;top:248.5px;width:116px;height:89px;border:1px solid #000;background:conic-gradient(from 0deg at 50% 50%,#38ff00 0deg,#b8e800 38deg,#ffb400 55deg,#ff4000 75deg,#ff0000 92deg,#ff0060 118deg,#f000a0 135deg,#9000c0 172deg,#5000e0 195deg,#0000ff 228deg,#0060d0 255deg,#0098b8 275deg,#00c8a0 300deg,#00ff70 318deg,#20ff20 345deg,#38ff00 360deg)"></div><svg class="a" style="left:43.5px;top:248.5px" width="116" height="89" viewBox="0 0 116 89"><rect x="17.5" y="13.5" width="81" height="62" rx="8" fill="#404040" stroke="#fff" stroke-width="1.2"/><path d="M48.8 40.9A10.0 8.0 0 0 1 54.1 36.6" stroke="#20d070" stroke-width="1" fill="none"/><path d="M44.7 38.5A15.0 12.0 0 0 1 51.4 33.2" stroke="#20d070" stroke-width="1" fill="none"/><path d="M39.9 37.1A20.0 16.0 0 0 1 49.4 29.5" stroke="#20d070" stroke-width="1" fill="none"/><path d="M36.3 34.1A25.0 20.0 0 0 1 46.0 26.4" stroke="#20d070" stroke-width="1" fill="none"/><path d="M31.5 32.8A30.0 24.0 0 0 1 44.0 22.8" stroke="#20d070" stroke-width="1" fill="none"/><path d="M28.3 29.2A35.0 28.0 0 0 1 40.0 20.0" stroke="#20d070" stroke-width="1" fill="none"/><path d="M61.9 36.6A10.0 8.0 0 0 1 67.2 40.9" stroke="#f0a000" stroke-width="1" fill="none"/><path d="M64.9 33.3A15.0 12.0 0 0 1 71.5 38.7" stroke="#f0a000" stroke-width="1" fill="none"/><path d="M66.6 29.5A20.0 16.0 0 0 1 76.1 37.1" stroke="#f0a000" stroke-width="1" fill="none"/><path d="M70.3 26.6A25.0 20.0 0 0 1 79.9 34.4" stroke="#f0a000" stroke-width="1" fill="none"/><path d="M72.0 22.8A30.0 24.0 0 0 1 84.5 32.8" stroke="#f0a000" stroke-width="1" fill="none"/><path d="M76.5 20.3A35.0 28.0 0 0 1 88.0 29.6" stroke="#f0a000" stroke-width="1" fill="none"/><path d="M54.1 51.4A10.0 8.0 0 0 1 48.8 47.1" stroke="#2040f0" stroke-width="1" fill="none"/><path d="M51.1 54.7A15.0 12.0 0 0 1 44.5 49.3" stroke="#2040f0" stroke-width="1" fill="none"/><path d="M49.4 58.5A20.0 16.0 0 0 1 39.9 50.9" stroke="#2040f0" stroke-width="1" fill="none"/><path d="M45.7 61.4A25.0 20.0 0 0 1 36.1 53.6" stroke="#2040f0" stroke-width="1" fill="none"/><path d="M44.0 65.2A30.0 24.0 0 0 1 31.5 55.2" stroke="#2040f0" stroke-width="1" fill="none"/><path d="M39.5 67.7A35.0 28.0 0 0 1 28.0 58.4" stroke="#2040f0" stroke-width="1" fill="none"/><path d="M67.2 47.1A10.0 8.0 0 0 1 61.9 51.4" stroke="#f01080" stroke-width="1" fill="none"/><path d="M71.3 49.5A15.0 12.0 0 0 1 64.6 54.8" stroke="#f01080" stroke-width="1" fill="none"/><path d="M76.1 50.9A20.0 16.0 0 0 1 66.6 58.5" stroke="#f01080" stroke-width="1" fill="none"/><path d="M79.7 53.9A25.0 20.0 0 0 1 70.0 61.6" stroke="#f01080" stroke-width="1" fill="none"/><path d="M84.5 55.2A30.0 24.0 0 0 1 72.0 65.2" stroke="#f01080" stroke-width="1" fill="none"/><path d="M87.7 58.8A35.0 28.0 0 0 1 76.0 68.0" stroke="#f01080" stroke-width="1" fill="none"/><path d="M54 40l8 8M62 40l-8 8" stroke="#000" stroke-width="2"/><path d="M53.500 39.500l9 9M62.500 39.500l-9 9M58 38v12M50 44h16" stroke="#fff" stroke-width="0.800"/></svg><div class="a" style="left:214.5px;top:41.5px;width:151px;height:576.5px;background:#a0a0a0;border-top:1.5px solid #7d7d7d;border-left:1.5px solid #7d7d7d"></div><div class="a" style="left:216.0px;top:43.19999999999999px;width:52.5px;height:23px;background:#f0f0f0;border-right:1px solid #4a4a4a;border-bottom:1px solid #4a4a4a;text-align:center;line-height:22px;font-weight:bold;letter-spacing:-0.35px;white-space:pre">Y cd/m<span style="font-size:8px;position:relative;top:-4px">2</span></div><div class="a" style="left:268.5px;top:43.19999999999999px;width:79.5px;height:23px;background:#fff;border-bottom:1px solid #c8c8c8;text-align:right;line-height:21px;padding-right:1.5px;letter-spacing:-0.6px"></div><div class="a" style="left:216.0px;top:66.19999999999999px;width:52.5px;height:23px;background:#f0f0f0;border-right:1px solid #4a4a4a;border-bottom:1px solid #4a4a4a;text-align:center;line-height:22px;font-weight:bold;letter-spacing:-0.35px;white-space:pre">Y ftL</div><div class="a" style="left:268.5px;top:66.19999999999999px;width:79.5px;height:23px;background:#fff;border-bottom:1px solid #c8c8c8;text-align:right;line-height:21px;padding-right:1.5px;letter-spacing:-0.6px"></div><div class="a" style="left:216.0px;top:89.19999999999999px;width:52.5px;height:23px;background:#f0f0f0;border-right:1px solid #4a4a4a;border-bottom:1px solid #4a4a4a;text-align:center;line-height:22px;font-weight:bold;letter-spacing:-0.35px;white-space:pre">T°</div><div class="a" style="left:268.5px;top:89.19999999999999px;width:79.5px;height:23px;background:#fff;border-bottom:1px solid #c8c8c8;text-align:right;line-height:21px;padding-right:1.5px;letter-spacing:-0.6px"></div><div class="a" style="left:216.0px;top:112.19999999999999px;width:52.5px;height:23px;background:#f0f0f0;border-right:1px solid #4a4a4a;border-bottom:1px solid #4a4a4a;text-align:center;line-height:22px;font-weight:bold;letter-spacing:-0.35px;white-space:pre">X</div><div class="a" style="left:268.5px;top:112.19999999999999px;width:79.5px;height:23px;background:#e0e0e0;border-bottom:1px solid #c8c8c8;text-align:right;line-height:21px;padding-right:1.5px;letter-spacing:-0.6px"></div><div class="a" style="left:216.0px;top:135.20000000000005px;width:52.5px;height:23px;background:#f0f0f0;border-right:1px solid #4a4a4a;border-bottom:1px solid #4a4a4a;text-align:center;line-height:22px;font-weight:bold;letter-spacing:-0.35px;white-space:pre">Y</div><div class="a" style="left:268.5px;top:135.20000000000005px;width:79.5px;height:23px;background:#e0e0e0;border-bottom:1px solid #c8c8c8;text-align:right;line-height:21px;padding-right:1.5px;letter-spacing:-0.6px"></div><div class="a" style="left:216.0px;top:158.20000000000005px;width:52.5px;height:23px;background:#f0f0f0;border-right:1px solid #4a4a4a;border-bottom:1px solid #4a4a4a;text-align:center;line-height:22px;font-weight:bold;letter-spacing:-0.35px;white-space:pre">Z</div><div class="a" style="left:268.5px;top:158.20000000000005px;width:79.5px;height:23px;background:#e0e0e0;border-bottom:1px solid #c8c8c8;text-align:right;line-height:21px;padding-right:1.5px;letter-spacing:-0.6px"></div><div class="a" style="left:216.0px;top:181.20000000000005px;width:52.5px;height:23px;background:#f0f0f0;border-right:1px solid #4a4a4a;border-bottom:1px solid #4a4a4a;text-align:center;line-height:22px;font-weight:bold;letter-spacing:-0.35px;white-space:pre">R</div><div class="a" style="left:268.5px;top:181.20000000000005px;width:79.5px;height:23px;background:#fff;border-bottom:1px solid #c8c8c8;text-align:right;line-height:21px;padding-right:1.5px;letter-spacing:-0.6px"></div><div class="a" style="left:216.0px;top:204.20000000000005px;width:52.5px;height:23px;background:#f0f0f0;border-right:1px solid #4a4a4a;border-bottom:1px solid #4a4a4a;text-align:center;line-height:22px;font-weight:bold;letter-spacing:-0.35px;white-space:pre">G</div><div class="a" style="left:268.5px;top:204.20000000000005px;width:79.5px;height:23px;background:#fff;border-bottom:1px solid #c8c8c8;text-align:right;line-height:21px;padding-right:1.5px;letter-spacing:-0.6px"></div><div class="a" style="left:216.0px;top:227.20000000000005px;width:52.5px;height:23px;background:#f0f0f0;border-right:1px solid #4a4a4a;border-bottom:1px solid #4a4a4a;text-align:center;line-height:22px;font-weight:bold;letter-spacing:-0.35px;white-space:pre">B</div><div class="a" style="left:268.5px;top:227.20000000000005px;width:79.5px;height:23px;background:#fff;border-bottom:1px solid #c8c8c8;text-align:right;line-height:21px;padding-right:1.5px;letter-spacing:-0.6px"></div><div class="a" style="left:216.0px;top:250.20000000000005px;width:52.5px;height:23px;background:#f0f0f0;border-right:1px solid #4a4a4a;border-bottom:1px solid #4a4a4a;text-align:center;line-height:22px;font-weight:bold;letter-spacing:-0.35px;white-space:pre">x</div><div class="a" style="left:268.5px;top:250.20000000000005px;width:79.5px;height:23px;background:#e0e0e0;border-bottom:1px solid #c8c8c8;text-align:right;line-height:21px;padding-right:1.5px;letter-spacing:-0.6px"></div><div class="a" style="left:216.0px;top:273.20000000000005px;width:52.5px;height:23px;background:#f0f0f0;border-right:1px solid #4a4a4a;border-bottom:1px solid #4a4a4a;text-align:center;line-height:22px;font-weight:bold;letter-spacing:-0.35px;white-space:pre">y</div><div class="a" style="left:268.5px;top:273.20000000000005px;width:79.5px;height:23px;background:#e0e0e0;border-bottom:1px solid #c8c8c8;text-align:right;line-height:21px;padding-right:1.5px;letter-spacing:-0.6px"></div><div class="a" style="left:216.0px;top:296.20000000000005px;width:52.5px;height:23px;background:#f0f0f0;border-right:1px solid #4a4a4a;border-bottom:1px solid #4a4a4a;text-align:center;line-height:22px;font-weight:bold;letter-spacing:-0.35px;white-space:pre">Y</div><div class="a" style="left:268.5px;top:296.20000000000005px;width:79.5px;height:23px;background:#e0e0e0;border-bottom:1px solid #c8c8c8;text-align:right;line-height:21px;padding-right:1.5px;letter-spacing:-0.6px"></div><div class="a" style="left:216.0px;top:319.20000000000005px;width:52.5px;height:23px;background:#f0f0f0;border-right:1px solid #4a4a4a;border-bottom:1px solid #4a4a4a;text-align:center;line-height:22px;font-weight:bold;letter-spacing:-0.35px;white-space:pre">x</div><div class="a" style="left:268.5px;top:319.20000000000005px;width:79.5px;height:23px;background:#fff;border-bottom:1px solid #c8c8c8;text-align:right;line-height:21px;padding-right:1.5px;letter-spacing:-0.6px"></div><div class="a" style="left:216.0px;top:342.20000000000005px;width:52.5px;height:23px;background:#f0f0f0;border-right:1px solid #4a4a4a;border-bottom:1px solid #4a4a4a;text-align:center;line-height:22px;font-weight:bold;letter-spacing:-0.35px;white-space:pre">y</div><div class="a" style="left:268.5px;top:342.20000000000005px;width:79.5px;height:23px;background:#fff;border-bottom:1px solid #c8c8c8;text-align:right;line-height:21px;padding-right:1.5px;letter-spacing:-0.6px"></div><div class="a" style="left:216.0px;top:365.20000000000005px;width:52.5px;height:23px;background:#f0f0f0;border-right:1px solid #4a4a4a;border-bottom:1px solid #4a4a4a;text-align:center;line-height:22px;font-weight:bold;letter-spacing:-0.35px;white-space:pre">z</div><div class="a" style="left:268.5px;top:365.20000000000005px;width:79.5px;height:23px;background:#fff;border-bottom:1px solid #c8c8c8;text-align:right;line-height:21px;padding-right:1.5px;letter-spacing:-0.6px"></div><div class="a" style="left:216.0px;top:388.20000000000005px;width:52.5px;height:23px;background:#f0f0f0;border-right:1px solid #4a4a4a;border-bottom:1px solid #4a4a4a;text-align:center;line-height:22px;font-weight:bold;letter-spacing:-0.35px;white-space:pre">L</div><div class="a" style="left:268.5px;top:388.20000000000005px;width:79.5px;height:23px;background:#e0e0e0;border-bottom:1px solid #c8c8c8;text-align:right;line-height:21px;padding-right:1.5px;letter-spacing:-0.6px"></div><div class="a" style="left:216.0px;top:411.20000000000005px;width:52.5px;height:23px;background:#f0f0f0;border-right:1px solid #4a4a4a;border-bottom:1px solid #4a4a4a;text-align:center;line-height:22px;font-weight:bold;letter-spacing:-0.35px;white-space:pre">a</div><div class="a" style="left:268.5px;top:411.20000000000005px;width:79.5px;height:23px;background:#e0e0e0;border-bottom:1px solid #c8c8c8;text-align:right;line-height:21px;padding-right:1.5px;letter-spacing:-0.6px"></div><div class="a" style="left:216.0px;top:434.20000000000005px;width:52.5px;height:23px;background:#f0f0f0;border-right:1px solid #4a4a4a;border-bottom:1px solid #4a4a4a;text-align:center;line-height:22px;font-weight:bold;letter-spacing:-0.35px;white-space:pre">b</div><div class="a" style="left:268.5px;top:434.20000000000005px;width:79.5px;height:23px;background:#e0e0e0;border-bottom:1px solid #c8c8c8;text-align:right;line-height:21px;padding-right:1.5px;letter-spacing:-0.6px"></div><div class="a" style="left:216.0px;top:457.20000000000005px;width:52.5px;height:23px;background:#f0f0f0;border-right:1px solid #4a4a4a;border-bottom:1px solid #4a4a4a;text-align:center;line-height:22px;font-weight:bold;letter-spacing:-0.35px;white-space:pre">L</div><div class="a" style="left:268.5px;top:457.20000000000005px;width:79.5px;height:23px;background:#fff;border-bottom:1px solid #c8c8c8;text-align:right;line-height:21px;padding-right:1.5px;letter-spacing:-0.6px"></div><div class="a" style="left:216.0px;top:480.20000000000005px;width:52.5px;height:23px;background:#f0f0f0;border-right:1px solid #4a4a4a;border-bottom:1px solid #4a4a4a;text-align:center;line-height:22px;font-weight:bold;letter-spacing:-0.35px;white-space:pre">C</div><div class="a" style="left:268.5px;top:480.20000000000005px;width:79.5px;height:23px;background:#fff;border-bottom:1px solid #c8c8c8;text-align:right;line-height:21px;padding-right:1.5px;letter-spacing:-0.6px"></div><div class="a" style="left:216.0px;top:503.20000000000005px;width:52.5px;height:23px;background:#f0f0f0;border-right:1px solid #4a4a4a;border-bottom:1px solid #4a4a4a;text-align:center;line-height:22px;font-weight:bold;letter-spacing:-0.35px;white-space:pre">H</div><div class="a" style="left:268.5px;top:503.20000000000005px;width:79.5px;height:23px;background:#fff;border-bottom:1px solid #c8c8c8;text-align:right;line-height:21px;padding-right:1.5px;letter-spacing:-0.6px"></div><div class="a" style="left:216.0px;top:526.2px;width:52.5px;height:23px;background:#f0f0f0;border-right:1px solid #4a4a4a;border-bottom:1px solid #4a4a4a;text-align:center;line-height:22px;font-weight:bold;letter-spacing:-0.35px;white-space:pre">L</div><div class="a" style="left:268.5px;top:526.2px;width:79.5px;height:23px;background:#e0e0e0;border-bottom:1px solid #c8c8c8;text-align:right;line-height:21px;padding-right:1.5px;letter-spacing:-0.6px">234.58</div><div class="a" style="left:216.0px;top:549.2px;width:52.5px;height:23px;background:#f0f0f0;border-right:1px solid #4a4a4a;border-bottom:1px solid #4a4a4a;text-align:center;line-height:22px;font-weight:bold;letter-spacing:-0.35px;white-space:pre">M</div><div class="a" style="left:268.5px;top:549.2px;width:79.5px;height:23px;background:#e0e0e0;border-bottom:1px solid #c8c8c8;text-align:right;line-height:21px;padding-right:1.5px;letter-spacing:-0.6px">345.98</div><div class="a" style="left:216.0px;top:572.2px;width:52.5px;height:23px;background:#f0f0f0;border-right:1px solid #4a4a4a;border-bottom:1px solid #4a4a4a;text-align:center;line-height:22px;font-weight:bold;letter-spacing:-0.35px;white-space:pre">S</div><div class="a" style="left:268.5px;top:572.2px;width:79.5px;height:23px;background:#e0e0e0;border-bottom:1px solid #c8c8c8;text-align:right;line-height:21px;padding-right:1.5px;letter-spacing:-0.6px">247.50</div><div class="a" style="left:348.0px;top:42.5px;width:17px;height:575px;background:#f0f0f0"></div><svg class="a" style="left:353.5px;top:48.5px" width="9" height="6"><path d="M0 6l4.500-6 4.500 6z" fill="#a6a6a6"/></svg><svg class="a" style="left:353.5px;top:606.5px" width="9" height="6"><path d="M0 0h9l-4.500 6z" fill="#a6a6a6"/></svg><div class="pe"></div></div></div>
<div class="pn" style="left:391px;top:388px;width:1504px;height:626px;"><div class="pb"><div class="ph" style="height:17px"></div><div class="t hd" style="left:6px;top:4px">Information</div><div class="a" style="left:3.5px;top:19.899999999999977px;width:302px;height:23.2px;border:1.5px solid #7d7d7d;border-right-color:#fff;border-bottom-color:#fff;background:#fff"><div class="a" style="left:0px;top:0px;width:299px;height:20.2px;border:1px solid #5a5a5a;border-right-color:#e3e3e3;border-bottom-color:#e3e3e3"></div><div class="t dj" style="left:4.5px;top:6px;font-size:12.5px">CIE Diagram</div><div class="a" style="left:283px;top:0px;width:16px;height:20.2px;background:#f0f0f0;border:1px solid #fff;border-right-color:#6f6f6f;border-bottom-color:#6f6f6f"></div><svg class="a" style="left:287px;top:8.5px" width="8" height="5"><path d="M0 0h7l-3.500 4z" fill="#000"/></svg></div><div class="a" style="left:5.5px;top:49.5px;width:1496px;height:570px;border:1px solid #8a8a8a;border-right-color:#fff;border-bottom-color:#fff;background:#02090b"><div class="a" style="left:0px;top:0px;width:1494px;height:568px;border:1px solid #d8d8d8;border-right-color:#f6f6f6;border-bottom-color:#f6f6f6"><div class="a" style="left:0px;top:0px;width:1492px;height:566px;border:2px solid #666;border-right-color:#e6e6e6;border-bottom-color:#e6e6e6"></div></div></div><div class="pe"></div></div></div>
<div class="a" style="left:402px;top:443px;width:1488px;height:561.5px;background:#02090b"></div><div class="a" style="left:402px;top:443px;width:1488px;height:561.5px;clip-path:polygon(401.4px 523.4px,394.5px 524.2px,385.6px 524.6px,377.8px 523.4px,369.9px 521.2px,361.7px 518.4px,352.6px 514.0px,341.1px 506.7px,329.0px 498.2px,317.6px 489.4px,306.9px 480.9px,298.9px 474.7px,289.6px 466.8px,272.8px 451.1px,256.5px 435.3px,249.5px 427.8px,243.9px 421.1px,233.6px 409.5px,221.9px 395.9px,209.5px 380.2px,198.3px 365.4px,192.0px 356.7px,185.7px 347.1px,173.9px 328.7px,162.1px 309.3px,155.0px 295.5px,149.5px 282.6px,144.0px 267.7px,139.4px 252.7px,136.1px 238.6px,133.7px 225.9px,132.2px 215.4px,131.2px 207.0px,130.5px 202.3px,130.0px 197.0px,129.7px 186.0px,129.7px 173.7px,129.9px 163.1px,130.5px 153.7px,131.6px 146.7px,133.0px 140.3px,134.5px 132.7px,136.3px 125.3px,138.2px 119.3px,140.5px 113.7px,143.1px 107.7px,146.3px 102.0px,150.1px 97.2px,154.7px 92.8px,159.9px 88.6px,166.3px 84.5px,175.0px 79.7px,184.7px 75.3px,194.6px 72.1px,204.7px 69.5px,214.7px 67.2px,224.7px 65.3px,235.0px 63.7px,244.7px 62.5px,252.3px 61.8px,259.7px 61.5px,269.1px 61.4px,278.0px 61.5px,283.7px 61.6px,289.7px 62.0px,298.9px 62.7px,309.7px 63.7px,321.4px 65.1px,334.7px 67.0px,350.8px 69.7px,368.0px 72.8px,384.4px 76.0px,401.3px 79.5px,416.2px 82.6px,438.0px 87.8px,478.4px 98.5px,526.0px 112.0px,570.5px 125.8px,620.5px 142.0px,690.6px 164.7px,753.0px 185.0px,771.8px 191.0px,785.5px 195.7px,829.2px 211.2px,878.0px 228.3px,915.3px 240.9px,950.5px 252.5px,986.8px 264.7px,1025.5px 277.8px,1068.0px 292.7px,1116.8px 309.5px,1182.0px 330.4px,1241.8px 349.5px,1272.2px 360.0px,1290.5px 367.0px,1307.9px 373.7px,1319.3px 378.3px);background:conic-gradient(from 0deg at 641.5px 348.8px,#3cc701 0.0deg,#c7c602 61.0deg,#c76602 83.0deg,#c74502 87.0deg,#c72902 89.0deg,#c7030c 90.0deg,#c7032b 91.0deg,#c70344 93.0deg,#c7035f 97.0deg,#8c02c7 222.0deg,#6201c7 234.0deg,#4e01c7 237.0deg,#3801c7 239.0deg,#2600c7 240.0deg,#001ac7 241.0deg,#0032c7 242.0deg,#004dc7 244.0deg,#0089c7 253.0deg,#00c7c7 270.0deg,#00c739 345.0deg,#00c721 350.0deg,#00c719 351.0deg,#00c70a 352.0deg,#16c701 353.0deg,#2cc701 356.0deg,#3cc701 360.0deg)"></div><svg class="a" style="left:402px;top:443px" width="1488" height="561.5" viewBox="402 443 1488 561.5" font-family="Liberation Serif, serif"><defs><linearGradient id="i0" gradientUnits="userSpaceOnUse" x1="1023" x2="1042" y1="0" y2="0"><stop offset="0.000" stop-color="#1cff15"/><stop offset="1.000" stop-color="#52ff00"/></linearGradient><linearGradient id="i1" gradientUnits="userSpaceOnUse" x1="1023" x2="1045" y1="0" y2="0"><stop offset="0.000" stop-color="#28ff2b"/><stop offset="1.000" stop-color="#58ff00"/></linearGradient><linearGradient id="i2" gradientUnits="userSpaceOnUse" x1="1019" x2="1060" y1="0" y2="0"><stop offset="0.000" stop-color="#28ff3a"/><stop offset="0.500" stop-color="#54ff2a"/><stop offset="1.000" stop-color="#6eff00"/></linearGradient><linearGradient id="i3" gradientUnits="userSpaceOnUse" x1="1016" x2="1075" y1="0" y2="0"><stop offset="0.000" stop-color="#27ff44"/><stop offset="0.333" stop-color="#53ff39"/><stop offset="0.667" stop-color="#6cff29"/><stop offset="1.000" stop-color="#7fff00"/></linearGradient><linearGradient id="i4" gradientUnits="userSpaceOnUse" x1="1012" x2="1090" y1="0" y2="0"><stop offset="0.000" stop-color="#27ff4d"/><stop offset="0.333" stop-color="#5cff41"/><stop offset="0.667" stop-color="#78ff30"/><stop offset="1.000" stop-color="#8fff00"/></linearGradient><linearGradient id="i5" gradientUnits="userSpaceOnUse" x1="1009" x2="1104" y1="0" y2="0"><stop offset="0.000" stop-color="#26ff55"/><stop offset="0.250" stop-color="#5aff4c"/><stop offset="0.750" stop-color="#8bff2f"/><stop offset="1.000" stop-color="#9dff00"/></linearGradient><linearGradient id="i6" gradientUnits="userSpaceOnUse" x1="1005" x2="1119" y1="0" y2="0"><stop offset="0.000" stop-color="#26ff5c"/><stop offset="0.200" stop-color="#58ff55"/><stop offset="0.400" stop-color="#74ff4b"/><stop offset="0.800" stop-color="#9aff2e"/><stop offset="1.000" stop-color="#abff00"/></linearGradient><linearGradient id="i7" gradientUnits="userSpaceOnUse" x1="1002" x2="1134" y1="0" y2="0"><stop offset="0.000" stop-color="#25ff63"/><stop offset="0.167" stop-color="#58ff5c"/><stop offset="0.333" stop-color="#73ff55"/><stop offset="0.667" stop-color="#99ff3f"/><stop offset="0.833" stop-color="#a9ff2e"/><stop offset="1.000" stop-color="#b8ff00"/></linearGradient><linearGradient id="i8" gradientUnits="userSpaceOnUse" x1="999" x2="1149" y1="0" y2="0"><stop offset="0.000" stop-color="#25ff69"/><stop offset="0.167" stop-color="#5cff62"/><stop offset="0.333" stop-color="#79ff5a"/><stop offset="0.667" stop-color="#a3ff44"/><stop offset="0.833" stop-color="#b4ff32"/><stop offset="1.000" stop-color="#c4ff00"/></linearGradient><linearGradient id="i9" gradientUnits="userSpaceOnUse" x1="995" x2="1163" y1="0" y2="0"><stop offset="0.000" stop-color="#24ff6f"/><stop offset="0.143" stop-color="#5bff69"/><stop offset="0.286" stop-color="#78ff62"/><stop offset="0.714" stop-color="#b2ff44"/><stop offset="0.857" stop-color="#c1ff32"/><stop offset="1.000" stop-color="#d0ff00"/></linearGradient><linearGradient id="i10" gradientUnits="userSpaceOnUse" x1="992" x2="1178" y1="0" y2="0"><stop offset="0.000" stop-color="#24ff75"/><stop offset="0.125" stop-color="#5bff6f"/><stop offset="0.250" stop-color="#77ff69"/><stop offset="0.625" stop-color="#b1ff50"/><stop offset="0.750" stop-color="#c0ff44"/><stop offset="0.875" stop-color="#ceff32"/><stop offset="1.000" stop-color="#dcff00"/></linearGradient><linearGradient id="i11" gradientUnits="userSpaceOnUse" x1="988" x2="1193" y1="0" y2="0"><stop offset="0.000" stop-color="#23ff7a"/><stop offset="0.125" stop-color="#5eff75"/><stop offset="0.250" stop-color="#7cff6e"/><stop offset="0.500" stop-color="#a8ff5f"/><stop offset="0.750" stop-color="#caff48"/><stop offset="0.875" stop-color="#d9ff35"/><stop offset="1.000" stop-color="#e8ff00"/></linearGradient><linearGradient id="i12" gradientUnits="userSpaceOnUse" x1="985" x2="1207" y1="0" y2="0"><stop offset="0.000" stop-color="#22ff80"/><stop offset="0.111" stop-color="#5dff7b"/><stop offset="0.222" stop-color="#7bff75"/><stop offset="0.556" stop-color="#b8ff5f"/><stop offset="0.778" stop-color="#d8ff48"/><stop offset="0.889" stop-color="#e6ff35"/><stop offset="1.000" stop-color="#f4ff00"/></linearGradient><linearGradient id="i13" gradientUnits="userSpaceOnUse" x1="981" x2="1222" y1="0" y2="0"><stop offset="0.000" stop-color="#22ff85"/><stop offset="0.100" stop-color="#5dff80"/><stop offset="0.200" stop-color="#7bff7b"/><stop offset="0.500" stop-color="#b7ff68"/><stop offset="0.800" stop-color="#e5ff48"/><stop offset="0.900" stop-color="#f3ff36"/><stop offset="1.000" stop-color="#fffe00"/></linearGradient><linearGradient id="i14" gradientUnits="userSpaceOnUse" x1="978" x2="1237" y1="0" y2="0"><stop offset="0.000" stop-color="#21ff8a"/><stop offset="0.100" stop-color="#60ff85"/><stop offset="0.200" stop-color="#7fff80"/><stop offset="0.500" stop-color="#bfff6c"/><stop offset="0.800" stop-color="#efff4c"/><stop offset="0.900" stop-color="#feff38"/><stop offset="1.000" stop-color="#fff200"/></linearGradient><linearGradient id="i15" gradientUnits="userSpaceOnUse" x1="974" x2="1252" y1="0" y2="0"><stop offset="0.000" stop-color="#20ff8f"/><stop offset="0.091" stop-color="#5fff8b"/><stop offset="0.182" stop-color="#7fff86"/><stop offset="0.364" stop-color="#abff7b"/><stop offset="0.727" stop-color="#eeff5a"/><stop offset="0.818" stop-color="#fdff4c"/><stop offset="0.909" stop-color="#fff336"/><stop offset="1.000" stop-color="#ffe700"/></linearGradient><linearGradient id="i16" gradientUnits="userSpaceOnUse" x1="971" x2="1266" y1="0" y2="0"><stop offset="0.000" stop-color="#1fff94"/><stop offset="0.083" stop-color="#5fff90"/><stop offset="0.167" stop-color="#7eff8c"/><stop offset="0.417" stop-color="#bdff7c"/><stop offset="0.750" stop-color="#fcff5b"/><stop offset="0.833" stop-color="#fff44a"/><stop offset="0.917" stop-color="#ffe834"/><stop offset="1.000" stop-color="#ffdd00"/></linearGradient><linearGradient id="i17" gradientUnits="userSpaceOnUse" x1="968" x2="1281" y1="0" y2="0"><stop offset="0.000" stop-color="#1fff99"/><stop offset="0.077" stop-color="#5fff95"/><stop offset="0.154" stop-color="#7eff91"/><stop offset="0.308" stop-color="#aaff88"/><stop offset="0.692" stop-color="#fbff66"/><stop offset="0.846" stop-color="#ffe947"/><stop offset="0.923" stop-color="#ffdd32"/><stop offset="1.000" stop-color="#ffd300"/></linearGradient><linearGradient id="i18" gradientUnits="userSpaceOnUse" x1="964" x2="1296" y1="0" y2="0"><stop offset="0.000" stop-color="#1eff9e"/><stop offset="0.077" stop-color="#61ff9a"/><stop offset="0.154" stop-color="#82ff96"/><stop offset="0.308" stop-color="#b0ff8d"/><stop offset="0.615" stop-color="#f5ff73"/><stop offset="0.692" stop-color="#fff968"/><stop offset="0.923" stop-color="#ffd433"/><stop offset="1.000" stop-color="#ffca00"/></linearGradient><linearGradient id="i19" gradientUnits="userSpaceOnUse" x1="961" x2="1311" y1="0" y2="0"><stop offset="0.000" stop-color="#1dffa2"/><stop offset="0.071" stop-color="#61ff9f"/><stop offset="0.143" stop-color="#81ff9b"/><stop offset="0.286" stop-color="#afff93"/><stop offset="0.571" stop-color="#f5ff7c"/><stop offset="0.643" stop-color="#fffa72"/><stop offset="0.857" stop-color="#ffd545"/><stop offset="0.929" stop-color="#ffcb31"/><stop offset="1.000" stop-color="#ffc200"/></linearGradient><linearGradient id="i20" gradientUnits="userSpaceOnUse" x1="957" x2="1325" y1="0" y2="0"><stop offset="0.000" stop-color="#1cffa7"/><stop offset="0.067" stop-color="#61ffa4"/><stop offset="0.133" stop-color="#81ffa1"/><stop offset="0.267" stop-color="#afff99"/><stop offset="0.533" stop-color="#f5ff85"/><stop offset="0.600" stop-color="#fffa7c"/><stop offset="0.867" stop-color="#ffcb42"/><stop offset="0.933" stop-color="#ffc230"/><stop offset="1.000" stop-color="#ffb900"/></linearGradient><linearGradient id="i21" gradientUnits="userSpaceOnUse" x1="954" x2="1340" y1="0" y2="0"><stop offset="0.000" stop-color="#1affac"/><stop offset="0.067" stop-color="#63ffa9"/><stop offset="0.133" stop-color="#85ffa5"/><stop offset="0.267" stop-color="#b5ff9e"/><stop offset="0.533" stop-color="#fdff8a"/><stop offset="0.867" stop-color="#ffc343"/><stop offset="0.933" stop-color="#ffba30"/><stop offset="1.000" stop-color="#ffb100"/></linearGradient><linearGradient id="i22" gradientUnits="userSpaceOnUse" x1="950" x2="1355" y1="0" y2="0"><stop offset="0.000" stop-color="#19ffb0"/><stop offset="0.062" stop-color="#63ffae"/><stop offset="0.125" stop-color="#85ffab"/><stop offset="0.375" stop-color="#dbff9c"/><stop offset="0.500" stop-color="#fdff91"/><stop offset="0.875" stop-color="#ffba41"/><stop offset="0.938" stop-color="#ffb12e"/><stop offset="1.000" stop-color="#ffaa00"/></linearGradient><linearGradient id="i23" gradientUnits="userSpaceOnUse" x1="947" x2="1370" y1="0" y2="0"><stop offset="0.000" stop-color="#17ffb5"/><stop offset="0.059" stop-color="#63ffb3"/><stop offset="0.118" stop-color="#85ffb0"/><stop offset="0.235" stop-color="#b5ffaa"/><stop offset="0.471" stop-color="#fdff99"/><stop offset="0.706" stop-color="#ffcc66"/><stop offset="0.882" stop-color="#ffb13f"/><stop offset="0.941" stop-color="#ffa92d"/><stop offset="1.000" stop-color="#ffa200"/></linearGradient><linearGradient id="i24" gradientUnits="userSpaceOnUse" x1="944" x2="1384" y1="0" y2="0"><stop offset="0.000" stop-color="#16ffba"/><stop offset="0.059" stop-color="#65ffb7"/><stop offset="0.118" stop-color="#88ffb5"/><stop offset="0.235" stop-color="#baffae"/><stop offset="0.412" stop-color="#f4ffa3"/><stop offset="0.471" stop-color="#fff99a"/><stop offset="0.765" stop-color="#ffbb5a"/><stop offset="0.882" stop-color="#ffaa3f"/><stop offset="0.941" stop-color="#ffa22d"/><stop offset="1.000" stop-color="#ff9b00"/></linearGradient><linearGradient id="i25" gradientUnits="userSpaceOnUse" x1="940" x2="1399" y1="0" y2="0"><stop offset="0.000" stop-color="#13ffbf"/><stop offset="0.056" stop-color="#65ffbc"/><stop offset="0.111" stop-color="#88ffba"/><stop offset="0.222" stop-color="#baffb4"/><stop offset="0.389" stop-color="#f4ffaa"/><stop offset="0.444" stop-color="#fff8a1"/><stop offset="0.611" stop-color="#ffcf7a"/><stop offset="0.889" stop-color="#ffa23d"/><stop offset="0.944" stop-color="#ff9a2c"/><stop offset="1.000" stop-color="#ff9300"/></linearGradient><linearGradient id="i26" gradientUnits="userSpaceOnUse" x1="937" x2="1414" y1="0" y2="0"><stop offset="0.000" stop-color="#11ffc3"/><stop offset="0.053" stop-color="#65ffc1"/><stop offset="0.105" stop-color="#88ffbf"/><stop offset="0.211" stop-color="#baffba"/><stop offset="0.368" stop-color="#f5ffb1"/><stop offset="0.421" stop-color="#fff8a8"/><stop offset="0.684" stop-color="#ffba6a"/><stop offset="0.895" stop-color="#ff9a3c"/><stop offset="0.947" stop-color="#ff932b"/><stop offset="1.000" stop-color="#ff8c00"/></linearGradient><linearGradient id="i27" gradientUnits="userSpaceOnUse" x1="933" x2="1429" y1="0" y2="0"><stop offset="0.000" stop-color="#0dffc8"/><stop offset="0.050" stop-color="#65ffc6"/><stop offset="0.100" stop-color="#88ffc4"/><stop offset="0.200" stop-color="#baffc0"/><stop offset="0.350" stop-color="#f5ffb7"/><stop offset="0.400" stop-color="#fff7ae"/><stop offset="0.600" stop-color="#ffc37c"/><stop offset="0.900" stop-color="#ff923b"/><stop offset="0.950" stop-color="#ff8b2b"/><stop offset="1.000" stop-color="#ff8500"/></linearGradient><linearGradient id="i28" gradientUnits="userSpaceOnUse" x1="930" x2="1443" y1="0" y2="0"><stop offset="0.000" stop-color="#07ffcd"/><stop offset="0.050" stop-color="#67ffcb"/><stop offset="0.100" stop-color="#8cffc9"/><stop offset="0.250" stop-color="#d5ffc2"/><stop offset="0.350" stop-color="#fdffbd"/><stop offset="0.600" stop-color="#ffbc7c"/><stop offset="0.900" stop-color="#ff8b3b"/><stop offset="0.950" stop-color="#ff842b"/><stop offset="1.000" stop-color="#ff7e00"/></linearGradient><linearGradient id="i29" gradientUnits="userSpaceOnUse" x1="926" x2="1458" y1="0" y2="0"><stop offset="0.000" stop-color="#00ffd2"/><stop offset="0.048" stop-color="#67ffd0"/><stop offset="0.095" stop-color="#8cffce"/><stop offset="0.190" stop-color="#c0ffcb"/><stop offset="0.333" stop-color="#feffc3"/><stop offset="0.524" stop-color="#ffc68d"/><stop offset="0.905" stop-color="#ff8339"/><stop offset="0.952" stop-color="#ff7d2a"/><stop offset="1.000" stop-color="#ff7600"/></linearGradient><linearGradient id="i30" gradientUnits="userSpaceOnUse" x1="923" x2="1473" y1="0" y2="0"><stop offset="0.000" stop-color="#00ffd7"/><stop offset="0.045" stop-color="#67ffd5"/><stop offset="0.091" stop-color="#8cffd4"/><stop offset="0.182" stop-color="#c1ffd0"/><stop offset="0.318" stop-color="#ffffca"/><stop offset="0.500" stop-color="#ffc593"/><stop offset="0.909" stop-color="#ff7b38"/><stop offset="0.955" stop-color="#ff7529"/><stop offset="1.000" stop-color="#ff6f00"/></linearGradient><linearGradient id="i31" gradientUnits="userSpaceOnUse" x1="920" x2="1488" y1="0" y2="0"><stop offset="0.000" stop-color="#00ffdc"/><stop offset="0.045" stop-color="#6affda"/><stop offset="0.091" stop-color="#8fffd9"/><stop offset="0.182" stop-color="#c6ffd6"/><stop offset="0.273" stop-color="#f2ffd2"/><stop offset="0.318" stop-color="#fff8ca"/><stop offset="0.455" stop-color="#ffca9f"/><stop offset="0.909" stop-color="#ff7438"/><stop offset="0.955" stop-color="#ff6d29"/><stop offset="1.000" stop-color="#ff6700"/></linearGradient><linearGradient id="i32" gradientUnits="userSpaceOnUse" x1="916" x2="1502" y1="0" y2="0"><stop offset="0.000" stop-color="#00ffe1"/><stop offset="0.043" stop-color="#6affdf"/><stop offset="0.087" stop-color="#90ffde"/><stop offset="0.174" stop-color="#c6ffdc"/><stop offset="0.261" stop-color="#f3ffd9"/><stop offset="0.304" stop-color="#fff7d0"/><stop offset="0.435" stop-color="#ffc9a4"/><stop offset="0.913" stop-color="#ff6c37"/><stop offset="0.957" stop-color="#ff6528"/><stop offset="1.000" stop-color="#ff5f00"/></linearGradient><linearGradient id="i33" gradientUnits="userSpaceOnUse" x1="913" x2="1517" y1="0" y2="0"><stop offset="0.000" stop-color="#00ffe6"/><stop offset="0.042" stop-color="#6affe5"/><stop offset="0.083" stop-color="#90ffe4"/><stop offset="0.167" stop-color="#c7ffe2"/><stop offset="0.250" stop-color="#f4ffdf"/><stop offset="0.292" stop-color="#fff6d5"/><stop offset="0.458" stop-color="#ffbc9e"/><stop offset="0.917" stop-color="#ff6436"/><stop offset="0.958" stop-color="#ff5d28"/><stop offset="1.000" stop-color="#ff5600"/></linearGradient><linearGradient id="i34" gradientUnits="userSpaceOnUse" x1="909" x2="1532" y1="0" y2="0"><stop offset="0.000" stop-color="#00ffeb"/><stop offset="0.042" stop-color="#6cffea"/><stop offset="0.083" stop-color="#94ffe9"/><stop offset="0.167" stop-color="#ccffe8"/><stop offset="0.250" stop-color="#fbffe5"/><stop offset="0.375" stop-color="#ffceb6"/><stop offset="0.917" stop-color="#ff5c36"/><stop offset="0.958" stop-color="#ff5428"/><stop offset="1.000" stop-color="#ff4d00"/></linearGradient><linearGradient id="i35" gradientUnits="userSpaceOnUse" x1="906" x2="1547" y1="0" y2="0"><stop offset="0.000" stop-color="#00fff0"/><stop offset="0.040" stop-color="#6cfff0"/><stop offset="0.080" stop-color="#94ffef"/><stop offset="0.160" stop-color="#cdffee"/><stop offset="0.240" stop-color="#fcffec"/><stop offset="0.360" stop-color="#ffcdbc"/><stop offset="0.680" stop-color="#ff7e6c"/><stop offset="0.920" stop-color="#ff5235"/><stop offset="0.960" stop-color="#ff4b27"/><stop offset="1.000" stop-color="#ff4200"/></linearGradient><linearGradient id="i36" gradientUnits="userSpaceOnUse" x1="902" x2="1561" y1="0" y2="0"><stop offset="0.000" stop-color="#00fff5"/><stop offset="0.038" stop-color="#6dfff5"/><stop offset="0.077" stop-color="#95fff5"/><stop offset="0.154" stop-color="#cffff4"/><stop offset="0.231" stop-color="#fefff3"/><stop offset="0.346" stop-color="#ffcbc0"/><stop offset="0.615" stop-color="#ff8479"/><stop offset="0.923" stop-color="#ff4834"/><stop offset="0.962" stop-color="#ff3f27"/><stop offset="1.000" stop-color="#ff3502"/></linearGradient><linearGradient id="i37" gradientUnits="userSpaceOnUse" x1="899" x2="1576" y1="0" y2="0"><stop offset="0.000" stop-color="#00fffb"/><stop offset="0.037" stop-color="#6dfffb"/><stop offset="0.074" stop-color="#96fffb"/><stop offset="0.148" stop-color="#d0fffa"/><stop offset="0.222" stop-color="#fffef9"/><stop offset="0.296" stop-color="#ffd8d4"/><stop offset="0.519" stop-color="#ff938f"/><stop offset="0.926" stop-color="#ff3c34"/><stop offset="0.963" stop-color="#ff3126"/><stop offset="1.000" stop-color="#ff2304"/></linearGradient><linearGradient id="i38" gradientUnits="userSpaceOnUse" x1="896" x2="1591" y1="0" y2="0"><stop offset="0.000" stop-color="#00feff"/><stop offset="0.037" stop-color="#6ffdff"/><stop offset="0.074" stop-color="#98fdff"/><stop offset="0.148" stop-color="#d4fdff"/><stop offset="0.185" stop-color="#edfdff"/><stop offset="0.222" stop-color="#fff7f9"/><stop offset="0.333" stop-color="#ffc3c5"/><stop offset="0.630" stop-color="#ff7476"/><stop offset="0.889" stop-color="#ff393e"/><stop offset="0.926" stop-color="#ff2d34"/><stop offset="0.963" stop-color="#ff1a26"/><stop offset="1.000" stop-color="#ff001e"/></linearGradient><linearGradient id="i39" gradientUnits="userSpaceOnUse" x1="892" x2="1571" y1="0" y2="0"><stop offset="0.000" stop-color="#00f8ff"/><stop offset="0.037" stop-color="#6cf8ff"/><stop offset="0.074" stop-color="#95f7ff"/><stop offset="0.185" stop-color="#e7f6ff"/><stop offset="0.222" stop-color="#fef6ff"/><stop offset="0.333" stop-color="#ffc3cb"/><stop offset="0.667" stop-color="#ff6b75"/><stop offset="0.889" stop-color="#ff3849"/><stop offset="0.926" stop-color="#ff2c40"/><stop offset="1.000" stop-color="#ff0032"/></linearGradient><linearGradient id="i40" gradientUnits="userSpaceOnUse" x1="889" x2="1549" y1="0" y2="0"><stop offset="0.000" stop-color="#00f3ff"/><stop offset="0.038" stop-color="#6bf2ff"/><stop offset="0.077" stop-color="#93f2ff"/><stop offset="0.154" stop-color="#cdf0ff"/><stop offset="0.231" stop-color="#fcefff"/><stop offset="0.346" stop-color="#ffbecd"/><stop offset="0.923" stop-color="#ff2d4c"/><stop offset="0.962" stop-color="#ff1943"/><stop offset="1.000" stop-color="#ff0040"/></linearGradient><linearGradient id="i41" gradientUnits="userSpaceOnUse" x1="885" x2="1527" y1="0" y2="0"><stop offset="0.000" stop-color="#00eeff"/><stop offset="0.040" stop-color="#6aedff"/><stop offset="0.080" stop-color="#92ecff"/><stop offset="0.160" stop-color="#cbeaff"/><stop offset="0.240" stop-color="#fae8ff"/><stop offset="0.360" stop-color="#ffb9cf"/><stop offset="0.640" stop-color="#ff7188"/><stop offset="0.880" stop-color="#ff3b5d"/><stop offset="0.920" stop-color="#ff2e56"/><stop offset="0.960" stop-color="#ff1a4e"/><stop offset="1.000" stop-color="#ff004a"/></linearGradient><linearGradient id="i42" gradientUnits="userSpaceOnUse" x1="882" x2="1505" y1="0" y2="0"><stop offset="0.000" stop-color="#00e8ff"/><stop offset="0.042" stop-color="#69e7ff"/><stop offset="0.083" stop-color="#91e6ff"/><stop offset="0.167" stop-color="#cae4ff"/><stop offset="0.250" stop-color="#f8e2ff"/><stop offset="0.292" stop-color="#ffd4f1"/><stop offset="0.458" stop-color="#ff9cb8"/><stop offset="0.875" stop-color="#ff3c66"/><stop offset="0.917" stop-color="#ff2f5f"/><stop offset="0.958" stop-color="#ff1c58"/><stop offset="1.000" stop-color="#ff0054"/></linearGradient><linearGradient id="i43" gradientUnits="userSpaceOnUse" x1="878" x2="1484" y1="0" y2="0"><stop offset="0.000" stop-color="#00e3ff"/><stop offset="0.042" stop-color="#67e2ff"/><stop offset="0.083" stop-color="#8ee1ff"/><stop offset="0.167" stop-color="#c5deff"/><stop offset="0.250" stop-color="#f1dbff"/><stop offset="0.292" stop-color="#ffd4f8"/><stop offset="0.458" stop-color="#ff9cbe"/><stop offset="0.875" stop-color="#ff3c6d"/><stop offset="0.917" stop-color="#ff2f67"/><stop offset="0.958" stop-color="#ff1c60"/><stop offset="1.000" stop-color="#ff005c"/></linearGradient><linearGradient id="i44" gradientUnits="userSpaceOnUse" x1="875" x2="1462" y1="0" y2="0"><stop offset="0.000" stop-color="#00deff"/><stop offset="0.043" stop-color="#66ddff"/><stop offset="0.087" stop-color="#8ddbff"/><stop offset="0.174" stop-color="#c4d8ff"/><stop offset="0.261" stop-color="#f0d5ff"/><stop offset="0.304" stop-color="#ffcffa"/><stop offset="0.391" stop-color="#ffafd9"/><stop offset="0.739" stop-color="#ff5c8a"/><stop offset="0.870" stop-color="#ff3e75"/><stop offset="0.957" stop-color="#ff1d68"/><stop offset="1.000" stop-color="#ff0064"/></linearGradient><linearGradient id="i45" gradientUnits="userSpaceOnUse" x1="872" x2="1440" y1="0" y2="0"><stop offset="0.000" stop-color="#00daff"/><stop offset="0.045" stop-color="#65d8ff"/><stop offset="0.091" stop-color="#8cd6ff"/><stop offset="0.182" stop-color="#c3d3ff"/><stop offset="0.273" stop-color="#eeceff"/><stop offset="0.318" stop-color="#ffc9fb"/><stop offset="0.500" stop-color="#ff91c1"/><stop offset="0.909" stop-color="#ff3277"/><stop offset="0.955" stop-color="#ff1e70"/><stop offset="1.000" stop-color="#ff006c"/></linearGradient><linearGradient id="i46" gradientUnits="userSpaceOnUse" x1="868" x2="1418" y1="0" y2="0"><stop offset="0.000" stop-color="#00d5ff"/><stop offset="0.045" stop-color="#62d3ff"/><stop offset="0.091" stop-color="#88d1ff"/><stop offset="0.182" stop-color="#bdcdff"/><stop offset="0.318" stop-color="#fbc6ff"/><stop offset="0.545" stop-color="#ff86bd"/><stop offset="0.864" stop-color="#ff3f85"/><stop offset="0.909" stop-color="#ff327e"/><stop offset="0.955" stop-color="#ff1e78"/><stop offset="1.000" stop-color="#ff0073"/></linearGradient><linearGradient id="i47" gradientUnits="userSpaceOnUse" x1="865" x2="1396" y1="0" y2="0"><stop offset="0.000" stop-color="#00d0ff"/><stop offset="0.048" stop-color="#62ceff"/><stop offset="0.095" stop-color="#88ccff"/><stop offset="0.190" stop-color="#bcc7ff"/><stop offset="0.333" stop-color="#fac0ff"/><stop offset="0.619" stop-color="#ff76b4"/><stop offset="0.857" stop-color="#ff418c"/><stop offset="0.905" stop-color="#ff3386"/><stop offset="0.952" stop-color="#ff1f7f"/><stop offset="1.000" stop-color="#ff007a"/></linearGradient><linearGradient id="i48" gradientUnits="userSpaceOnUse" x1="861" x2="1374" y1="0" y2="0"><stop offset="0.000" stop-color="#00cbff"/><stop offset="0.050" stop-color="#61c9ff"/><stop offset="0.100" stop-color="#87c6ff"/><stop offset="0.200" stop-color="#bcc2ff"/><stop offset="0.350" stop-color="#f9b9ff"/><stop offset="0.400" stop-color="#ffadf3"/><stop offset="0.650" stop-color="#ff6fb5"/><stop offset="0.900" stop-color="#ff358d"/><stop offset="0.950" stop-color="#ff2087"/><stop offset="1.000" stop-color="#ff0082"/></linearGradient><linearGradient id="i49" gradientUnits="userSpaceOnUse" x1="858" x2="1353" y1="0" y2="0"><stop offset="0.000" stop-color="#00c7ff"/><stop offset="0.050" stop-color="#5ec4ff"/><stop offset="0.100" stop-color="#83c2ff"/><stop offset="0.200" stop-color="#b7bdff"/><stop offset="0.350" stop-color="#f1b4ff"/><stop offset="0.400" stop-color="#ffadfb"/><stop offset="0.600" stop-color="#ff7ac6"/><stop offset="0.900" stop-color="#ff3595"/><stop offset="0.950" stop-color="#ff208e"/><stop offset="1.000" stop-color="#ff0089"/></linearGradient><linearGradient id="i50" gradientUnits="userSpaceOnUse" x1="854" x2="1331" y1="0" y2="0"><stop offset="0.000" stop-color="#00c2ff"/><stop offset="0.053" stop-color="#5ebfff"/><stop offset="0.105" stop-color="#83bcff"/><stop offset="0.211" stop-color="#b6b7ff"/><stop offset="0.368" stop-color="#f1adff"/><stop offset="0.421" stop-color="#ffa7fc"/><stop offset="0.632" stop-color="#ff73c7"/><stop offset="0.842" stop-color="#ff45a4"/><stop offset="0.895" stop-color="#ff369c"/><stop offset="0.947" stop-color="#ff2295"/><stop offset="1.000" stop-color="#ff0090"/></linearGradient><linearGradient id="i51" gradientUnits="userSpaceOnUse" x1="851" x2="1309" y1="0" y2="0"><stop offset="0.000" stop-color="#00bdff"/><stop offset="0.056" stop-color="#5ebaff"/><stop offset="0.111" stop-color="#83b7ff"/><stop offset="0.222" stop-color="#b5b1ff"/><stop offset="0.389" stop-color="#f0a6ff"/><stop offset="0.444" stop-color="#ffa0fc"/><stop offset="0.722" stop-color="#ff60be"/><stop offset="0.889" stop-color="#ff38a4"/><stop offset="0.944" stop-color="#ff239d"/><stop offset="1.000" stop-color="#ff0097"/></linearGradient><linearGradient id="i52" gradientUnits="userSpaceOnUse" x1="848" x2="1287" y1="0" y2="0"><stop offset="0.000" stop-color="#00b9ff"/><stop offset="0.059" stop-color="#5db5ff"/><stop offset="0.118" stop-color="#82b2ff"/><stop offset="0.235" stop-color="#b5acff"/><stop offset="0.471" stop-color="#ff99fd"/><stop offset="0.706" stop-color="#ff63c8"/><stop offset="0.882" stop-color="#ff3aad"/><stop offset="0.941" stop-color="#ff25a5"/><stop offset="1.000" stop-color="#ff009e"/></linearGradient><linearGradient id="i53" gradientUnits="userSpaceOnUse" x1="844" x2="1265" y1="0" y2="0"><stop offset="0.000" stop-color="#00b4ff"/><stop offset="0.059" stop-color="#5ab0ff"/><stop offset="0.118" stop-color="#7eadff"/><stop offset="0.235" stop-color="#b0a7ff"/><stop offset="0.471" stop-color="#f996ff"/><stop offset="0.529" stop-color="#ff8af5"/><stop offset="0.882" stop-color="#ff3ab4"/><stop offset="0.941" stop-color="#ff25ac"/><stop offset="1.000" stop-color="#ff00a6"/></linearGradient><linearGradient id="i54" gradientUnits="userSpaceOnUse" x1="841" x2="1244" y1="0" y2="0"><stop offset="0.000" stop-color="#00b0ff"/><stop offset="0.062" stop-color="#5aabff"/><stop offset="0.125" stop-color="#7ea8ff"/><stop offset="0.250" stop-color="#afa1ff"/><stop offset="0.500" stop-color="#f88eff"/><stop offset="0.562" stop-color="#ff83f6"/><stop offset="0.875" stop-color="#ff3cbd"/><stop offset="0.938" stop-color="#ff26b5"/><stop offset="1.000" stop-color="#ff00ae"/></linearGradient><linearGradient id="i55" gradientUnits="userSpaceOnUse" x1="837" x2="1222" y1="0" y2="0"><stop offset="0.000" stop-color="#00abff"/><stop offset="0.067" stop-color="#5aa6ff"/><stop offset="0.133" stop-color="#7ea3ff"/><stop offset="0.267" stop-color="#af9bff"/><stop offset="0.533" stop-color="#f886ff"/><stop offset="0.600" stop-color="#ff7af6"/><stop offset="0.867" stop-color="#ff3ec6"/><stop offset="0.933" stop-color="#ff28bd"/><stop offset="1.000" stop-color="#ff00b5"/></linearGradient><linearGradient id="i56" gradientUnits="userSpaceOnUse" x1="834" x2="1200" y1="0" y2="0"><stop offset="0.000" stop-color="#00a7ff"/><stop offset="0.067" stop-color="#57a2ff"/><stop offset="0.133" stop-color="#7a9eff"/><stop offset="0.267" stop-color="#aa96ff"/><stop offset="0.600" stop-color="#ff7aff"/><stop offset="0.867" stop-color="#ff3ecf"/><stop offset="0.933" stop-color="#ff28c6"/><stop offset="1.000" stop-color="#ff00be"/></linearGradient><linearGradient id="i57" gradientUnits="userSpaceOnUse" x1="830" x2="1178" y1="0" y2="0"><stop offset="0.000" stop-color="#00a2ff"/><stop offset="0.071" stop-color="#569dff"/><stop offset="0.143" stop-color="#7a99ff"/><stop offset="0.286" stop-color="#aa91ff"/><stop offset="0.643" stop-color="#ff71ff"/><stop offset="0.857" stop-color="#ff41d9"/><stop offset="0.929" stop-color="#ff2acf"/><stop offset="1.000" stop-color="#ff00c6"/></linearGradient><linearGradient id="i58" gradientUnits="userSpaceOnUse" x1="827" x2="1156" y1="0" y2="0"><stop offset="0.000" stop-color="#009eff"/><stop offset="0.077" stop-color="#5698ff"/><stop offset="0.154" stop-color="#7a94ff"/><stop offset="0.308" stop-color="#aa8aff"/><stop offset="0.615" stop-color="#f070ff"/><stop offset="0.692" stop-color="#ff66ff"/><stop offset="0.846" stop-color="#ff44e4"/><stop offset="0.923" stop-color="#ff2cd9"/><stop offset="1.000" stop-color="#ff00cf"/></linearGradient><linearGradient id="i59" gradientUnits="userSpaceOnUse" x1="824" x2="1135" y1="0" y2="0"><stop offset="0.000" stop-color="#0099ff"/><stop offset="0.083" stop-color="#5793ff"/><stop offset="0.167" stop-color="#7a8eff"/><stop offset="0.333" stop-color="#aa84ff"/><stop offset="0.667" stop-color="#f066ff"/><stop offset="0.750" stop-color="#ff5afe"/><stop offset="0.833" stop-color="#ff47f0"/><stop offset="0.917" stop-color="#ff2fe3"/><stop offset="1.000" stop-color="#ff00d8"/></linearGradient><linearGradient id="i60" gradientUnits="userSpaceOnUse" x1="820" x2="1113" y1="0" y2="0"><stop offset="0.000" stop-color="#0095ff"/><stop offset="0.083" stop-color="#538eff"/><stop offset="0.167" stop-color="#7689ff"/><stop offset="0.333" stop-color="#a47fff"/><stop offset="0.667" stop-color="#e762ff"/><stop offset="0.833" stop-color="#ff47fa"/><stop offset="0.917" stop-color="#ff2fee"/><stop offset="1.000" stop-color="#ff00e2"/></linearGradient><linearGradient id="i61" gradientUnits="userSpaceOnUse" x1="817" x2="1091" y1="0" y2="0"><stop offset="0.000" stop-color="#0090ff"/><stop offset="0.091" stop-color="#5389ff"/><stop offset="0.182" stop-color="#7684ff"/><stop offset="0.364" stop-color="#a479ff"/><stop offset="0.727" stop-color="#e756ff"/><stop offset="0.818" stop-color="#f648ff"/><stop offset="0.909" stop-color="#ff31fa"/><stop offset="1.000" stop-color="#ff00ed"/></linearGradient><linearGradient id="i62" gradientUnits="userSpaceOnUse" x1="813" x2="1069" y1="0" y2="0"><stop offset="0.000" stop-color="#008bff"/><stop offset="0.100" stop-color="#5383ff"/><stop offset="0.200" stop-color="#767eff"/><stop offset="0.400" stop-color="#a571ff"/><stop offset="0.700" stop-color="#d956ff"/><stop offset="0.800" stop-color="#e948ff"/><stop offset="0.900" stop-color="#f733ff"/><stop offset="1.000" stop-color="#ff00f8"/></linearGradient><linearGradient id="i63" gradientUnits="userSpaceOnUse" x1="810" x2="1047" y1="0" y2="0"><stop offset="0.000" stop-color="#0087ff"/><stop offset="0.100" stop-color="#4f7eff"/><stop offset="0.200" stop-color="#7179ff"/><stop offset="0.400" stop-color="#9e6dff"/><stop offset="0.700" stop-color="#cf52ff"/><stop offset="0.800" stop-color="#de45ff"/><stop offset="0.900" stop-color="#ec30ff"/><stop offset="1.000" stop-color="#f900ff"/></linearGradient><linearGradient id="i64" gradientUnits="userSpaceOnUse" x1="806" x2="1026" y1="0" y2="0"><stop offset="0.000" stop-color="#0082ff"/><stop offset="0.111" stop-color="#5079ff"/><stop offset="0.222" stop-color="#7273ff"/><stop offset="0.444" stop-color="#9e65ff"/><stop offset="0.778" stop-color="#d045ff"/><stop offset="0.889" stop-color="#df31ff"/><stop offset="1.000" stop-color="#ed00ff"/></linearGradient><linearGradient id="i65" gradientUnits="userSpaceOnUse" x1="803" x2="1004" y1="0" y2="0"><stop offset="0.000" stop-color="#007dff"/><stop offset="0.125" stop-color="#5073ff"/><stop offset="0.250" stop-color="#726cff"/><stop offset="0.500" stop-color="#a05cff"/><stop offset="0.750" stop-color="#c245ff"/><stop offset="0.875" stop-color="#d231ff"/><stop offset="1.000" stop-color="#e100ff"/></linearGradient><linearGradient id="i66" gradientUnits="userSpaceOnUse" x1="800" x2="982" y1="0" y2="0"><stop offset="0.000" stop-color="#0078ff"/><stop offset="0.125" stop-color="#4b6dff"/><stop offset="0.250" stop-color="#6c67ff"/><stop offset="0.500" stop-color="#9758ff"/><stop offset="0.750" stop-color="#b841ff"/><stop offset="0.875" stop-color="#c62eff"/><stop offset="1.000" stop-color="#d400ff"/></linearGradient><linearGradient id="i67" gradientUnits="userSpaceOnUse" x1="796" x2="960" y1="0" y2="0"><stop offset="0.000" stop-color="#0073ff"/><stop offset="0.143" stop-color="#4c67ff"/><stop offset="0.286" stop-color="#6d60ff"/><stop offset="0.571" stop-color="#984eff"/><stop offset="0.714" stop-color="#a941ff"/><stop offset="0.857" stop-color="#b92fff"/><stop offset="1.000" stop-color="#c800ff"/></linearGradient><linearGradient id="i68" gradientUnits="userSpaceOnUse" x1="793" x2="938" y1="0" y2="0"><stop offset="0.000" stop-color="#006dff"/><stop offset="0.167" stop-color="#4c60ff"/><stop offset="0.333" stop-color="#6e58ff"/><stop offset="0.667" stop-color="#9a42ff"/><stop offset="0.833" stop-color="#ab2fff"/><stop offset="1.000" stop-color="#bb00ff"/></linearGradient><linearGradient id="i69" gradientUnits="userSpaceOnUse" x1="789" x2="916" y1="0" y2="0"><stop offset="0.000" stop-color="#0068ff"/><stop offset="0.200" stop-color="#4e59ff"/><stop offset="0.400" stop-color="#6f4fff"/><stop offset="0.800" stop-color="#9c30ff"/><stop offset="1.000" stop-color="#ae00ff"/></linearGradient><linearGradient id="i70" gradientUnits="userSpaceOnUse" x1="786" x2="895" y1="0" y2="0"><stop offset="0.000" stop-color="#0062ff"/><stop offset="0.200" stop-color="#4653ff"/><stop offset="0.400" stop-color="#6649ff"/><stop offset="0.600" stop-color="#7d3eff"/><stop offset="0.800" stop-color="#902dff"/><stop offset="1.000" stop-color="#a000ff"/></linearGradient><linearGradient id="i71" gradientUnits="userSpaceOnUse" x1="782" x2="873" y1="0" y2="0"><stop offset="0.000" stop-color="#005bff"/><stop offset="0.250" stop-color="#474aff"/><stop offset="0.500" stop-color="#673eff"/><stop offset="0.750" stop-color="#7e2dff"/><stop offset="1.000" stop-color="#9200ff"/></linearGradient><linearGradient id="i72" gradientUnits="userSpaceOnUse" x1="779" x2="851" y1="0" y2="0"><stop offset="0.000" stop-color="#0055ff"/><stop offset="0.333" stop-color="#493fff"/><stop offset="0.667" stop-color="#6a2eff"/><stop offset="1.000" stop-color="#8200ff"/></linearGradient><linearGradient id="i73" gradientUnits="userSpaceOnUse" x1="776" x2="829" y1="0" y2="0"><stop offset="0.000" stop-color="#004dff"/><stop offset="0.333" stop-color="#3c37ff"/><stop offset="0.667" stop-color="#5a28ff"/><stop offset="1.000" stop-color="#7000ff"/></linearGradient><linearGradient id="i74" gradientUnits="userSpaceOnUse" x1="772" x2="807" y1="0" y2="0"><stop offset="0.000" stop-color="#0045ff"/><stop offset="0.500" stop-color="#3b28ff"/><stop offset="1.000" stop-color="#5a00ff"/></linearGradient><linearGradient id="i75" gradientUnits="userSpaceOnUse" x1="769" x2="787" y1="0" y2="0"><stop offset="0.000" stop-color="#003bff"/><stop offset="1.000" stop-color="#3e00ff"/></linearGradient><linearGradient id="i76" gradientUnits="userSpaceOnUse" x1="769" x2="787" y1="0" y2="0"><stop offset="0.000" stop-color="#001dff"/><stop offset="1.000" stop-color="#4d00ff"/></linearGradient><clipPath id="cl"><path d="M803.4 966.4L796.5 967.2L787.6 967.6L779.8 966.4L771.9 964.2L763.7 961.4L754.6 957.0L743.1 949.7L731.0 941.2L719.6 932.4L708.9 923.9L700.9 917.7L691.6 909.8L674.8 894.1L658.5 878.3L651.5 870.8L645.9 864.1L635.6 852.5L623.9 838.9L611.5 823.2L600.3 808.4L594.0 799.7L587.7 790.1L575.9 771.7L564.1 752.3L557.0 738.5L551.5 725.6L546.0 710.7L541.4 695.7L538.1 681.6L535.7 668.9L534.2 658.4L533.2 650.0L532.5 645.3L532.0 640.0L531.7 629.0L531.7 616.7L531.9 606.1L532.5 596.7L533.6 589.7L535.0 583.3L536.5 575.7L538.3 568.3L540.2 562.3L542.5 556.7L545.1 550.7L548.3 545.0L552.1 540.2L556.7 535.8L561.9 531.6L568.3 527.5L577.0 522.7L586.7 518.3L596.6 515.1L606.7 512.5L616.7 510.2L626.7 508.3L637.0 506.7L646.7 505.5L654.3 504.8L661.7 504.5L671.1 504.4L680.0 504.5L685.7 504.6L691.7 505.0L700.9 505.7L711.7 506.7L723.4 508.1L736.7 510.0L752.8 512.7L770.0 515.8L786.4 519.0L803.3 522.5L818.2 525.6L840.0 530.8L880.4 541.5L928.0 555.0L972.5 568.8L1022.5 585.0L1092.6 607.7L1155.0 628.0L1173.8 634.0L1187.5 638.7L1231.2 654.2L1280.0 671.3L1317.3 683.9L1352.5 695.5L1388.8 707.7L1427.5 720.8L1470.0 735.7L1518.8 752.5L1584.0 773.4L1643.8 792.5L1674.2 803.0L1692.5 810.0L1709.9 816.7L1721.3 821.3Z"/></clipPath><clipPath id="ct"><path d="M1031.8 643.5L1583.5 793.2L776.5 941.2Z"/></clipPath><radialGradient id="cred" cx="44%" cy="40%" r="62%"><stop offset="0" stop-color="#ff4030"/><stop offset="0.55" stop-color="#ee1010"/><stop offset="1" stop-color="#7a0000"/></radialGradient><radialGradient id="cgrn" cx="44%" cy="40%" r="62%"><stop offset="0" stop-color="#30f830"/><stop offset="0.55" stop-color="#08d808"/><stop offset="1" stop-color="#006a00"/></radialGradient><radialGradient id="cblu" cx="44%" cy="40%" r="62%"><stop offset="0" stop-color="#4848ff"/><stop offset="0.55" stop-color="#2828ea"/><stop offset="1" stop-color="#0c0c78"/></radialGradient><radialGradient id="cyel" cx="44%" cy="40%" r="62%"><stop offset="0" stop-color="#fcfc98"/><stop offset="0.55" stop-color="#e4e46a"/><stop offset="1" stop-color="#84842c"/></radialGradient><radialGradient id="ccya" cx="44%" cy="40%" r="62%"><stop offset="0" stop-color="#a8fcfc"/><stop offset="0.55" stop-color="#6ae6e6"/><stop offset="1" stop-color="#288a8a"/></radialGradient><radialGradient id="cmag" cx="44%" cy="40%" r="62%"><stop offset="0" stop-color="#ff50ff"/><stop offset="0.55" stop-color="#ee10ee"/><stop offset="1" stop-color="#7a007a"/></radialGradient><filter id="vb" x="-2%" y="-2%" width="104%" height="104%"><feGaussianBlur stdDeviation="0 2"/></filter><radialGradient id="glow" cx="0.5" cy="0.5" r="0.5"><stop offset="0" stop-color="#fff" stop-opacity=".8"/><stop offset="0.75" stop-color="#fff" stop-opacity=".6"/><stop offset="0.88" stop-color="#fff" stop-opacity=".38"/><stop offset="0.96" stop-color="#fff" stop-opacity=".16"/><stop offset="1" stop-color="#fff" stop-opacity="0"/></radialGradient></defs><g clip-path="url(#cl)"><ellipse cx="1043.5" cy="791.8" rx="184" ry="63" fill="url(#glow)"/></g><path d="M526.6 443V1004.5M691.9 443V1004.5M857.2 443V1004.5M1022.5 443V1004.5M1187.8 443V1004.5M1353.1 443V1004.5M1518.4 443V1004.5M1683.7 443V1004.5M402 920.3H1890M402 864.2H1890M402 808.1H1890M402 752.0H1890M402 695.9H1890M402 639.8H1890M402 583.7H1890M402 527.6H1890M402 471.5H1890" stroke="#3f4446" stroke-width="1.1" fill="none"/><path d="M803.4 966.4L796.5 967.2L787.6 967.6L779.8 966.4L771.9 964.2L763.7 961.4L754.6 957.0L743.1 949.7L731.0 941.2L719.6 932.4L708.9 923.9L700.9 917.7L691.6 909.8L674.8 894.1L658.5 878.3L651.5 870.8L645.9 864.1L635.6 852.5L623.9 838.9L611.5 823.2L600.3 808.4L594.0 799.7L587.7 790.1L575.9 771.7L564.1 752.3L557.0 738.5L551.5 725.6L546.0 710.7L541.4 695.7L538.1 681.6L535.7 668.9L534.2 658.4L533.2 650.0L532.5 645.3L532.0 640.0L531.7 629.0L531.7 616.7L531.9 606.1L532.5 596.7L533.6 589.7L535.0 583.3L536.5 575.7L538.3 568.3L540.2 562.3L542.5 556.7L545.1 550.7L548.3 545.0L552.1 540.2L556.7 535.8L561.9 531.6L568.3 527.5L577.0 522.7L586.7 518.3L596.6 515.1L606.7 512.5L616.7 510.2L626.7 508.3L637.0 506.7L646.7 505.5L654.3 504.8L661.7 504.5L671.1 504.4L680.0 504.5L685.7 504.6L691.7 505.0L700.9 505.7L711.7 506.7L723.4 508.1L736.7 510.0L752.8 512.7L770.0 515.8L786.4 519.0L803.3 522.5L818.2 525.6L840.0 530.8L880.4 541.5L928.0 555.0L972.5 568.8L1022.5 585.0L1092.6 607.7L1155.0 628.0L1173.8 634.0L1187.5 638.7L1231.2 654.2L1280.0 671.3L1317.3 683.9L1352.5 695.5L1388.8 707.7L1427.5 720.8L1470.0 735.7L1518.8 752.5L1584.0 773.4L1643.8 792.5L1674.2 803.0L1692.5 810.0L1709.9 816.7L1721.3 821.3Z" fill="none" stroke="#f0a400" stroke-width="1.5"/><g clip-path="url(#ct)"><g filter="url(#vb)"><rect x="1021" y="639" width="22" height="4.6" fill="url(#i0)"/><rect x="1021" y="643" width="27" height="4.6" fill="url(#i1)"/><rect x="1017" y="647" width="45" height="4.6" fill="url(#i2)"/><rect x="1014" y="651" width="63" height="4.6" fill="url(#i3)"/><rect x="1010" y="655" width="81" height="4.6" fill="url(#i4)"/><rect x="1007" y="659" width="100" height="4.6" fill="url(#i5)"/><rect x="1003" y="663" width="118" height="4.6" fill="url(#i6)"/><rect x="1000" y="667" width="136" height="4.6" fill="url(#i7)"/><rect x="997" y="671" width="154" height="4.6" fill="url(#i8)"/><rect x="993" y="675" width="172" height="4.6" fill="url(#i9)"/><rect x="990" y="679" width="190" height="4.6" fill="url(#i10)"/><rect x="986" y="683" width="209" height="4.6" fill="url(#i11)"/><rect x="983" y="687" width="227" height="4.6" fill="url(#i12)"/><rect x="979" y="691" width="245" height="4.6" fill="url(#i13)"/><rect x="976" y="695" width="263" height="4.6" fill="url(#i14)"/><rect x="972" y="699" width="281" height="4.6" fill="url(#i15)"/><rect x="969" y="703" width="299" height="4.6" fill="url(#i16)"/><rect x="966" y="707" width="318" height="4.6" fill="url(#i17)"/><rect x="962" y="711" width="336" height="4.6" fill="url(#i18)"/><rect x="959" y="715" width="354" height="4.6" fill="url(#i19)"/><rect x="955" y="719" width="372" height="4.6" fill="url(#i20)"/><rect x="952" y="723" width="390" height="4.6" fill="url(#i21)"/><rect x="948" y="727" width="408" height="4.6" fill="url(#i22)"/><rect x="945" y="731" width="427" height="4.6" fill="url(#i23)"/><rect x="942" y="735" width="445" height="4.6" fill="url(#i24)"/><rect x="938" y="739" width="463" height="4.6" fill="url(#i25)"/><rect x="935" y="743" width="481" height="4.6" fill="url(#i26)"/><rect x="931" y="747" width="499" height="4.6" fill="url(#i27)"/><rect x="928" y="751" width="517" height="4.6" fill="url(#i28)"/><rect x="924" y="755" width="536" height="4.6" fill="url(#i29)"/><rect x="921" y="759" width="554" height="4.6" fill="url(#i30)"/><rect x="918" y="763" width="572" height="4.6" fill="url(#i31)"/><rect x="914" y="767" width="590" height="4.6" fill="url(#i32)"/><rect x="911" y="771" width="608" height="4.6" fill="url(#i33)"/><rect x="907" y="775" width="626" height="4.6" fill="url(#i34)"/><rect x="904" y="779" width="645" height="4.6" fill="url(#i35)"/><rect x="900" y="783" width="663" height="4.6" fill="url(#i36)"/><rect x="897" y="787" width="681" height="4.6" fill="url(#i37)"/><rect x="894" y="791" width="699" height="4.6" fill="url(#i38)"/><rect x="890" y="795" width="683" height="4.6" fill="url(#i39)"/><rect x="887" y="799" width="664" height="4.6" fill="url(#i40)"/><rect x="883" y="803" width="646" height="4.6" fill="url(#i41)"/><rect x="880" y="807" width="627" height="4.6" fill="url(#i42)"/><rect x="876" y="811" width="609" height="4.6" fill="url(#i43)"/><rect x="873" y="815" width="591" height="4.6" fill="url(#i44)"/><rect x="870" y="819" width="572" height="4.6" fill="url(#i45)"/><rect x="866" y="823" width="554" height="4.6" fill="url(#i46)"/><rect x="863" y="827" width="536" height="4.6" fill="url(#i47)"/><rect x="859" y="831" width="517" height="4.6" fill="url(#i48)"/><rect x="856" y="835" width="499" height="4.6" fill="url(#i49)"/><rect x="852" y="839" width="480" height="4.6" fill="url(#i50)"/><rect x="849" y="843" width="462" height="4.6" fill="url(#i51)"/><rect x="846" y="847" width="444" height="4.6" fill="url(#i52)"/><rect x="842" y="851" width="425" height="4.6" fill="url(#i53)"/><rect x="839" y="855" width="407" height="4.6" fill="url(#i54)"/><rect x="835" y="859" width="389" height="4.6" fill="url(#i55)"/><rect x="832" y="863" width="370" height="4.6" fill="url(#i56)"/><rect x="828" y="867" width="352" height="4.6" fill="url(#i57)"/><rect x="825" y="871" width="333" height="4.6" fill="url(#i58)"/><rect x="822" y="875" width="315" height="4.6" fill="url(#i59)"/><rect x="818" y="879" width="297" height="4.6" fill="url(#i60)"/><rect x="815" y="883" width="278" height="4.6" fill="url(#i61)"/><rect x="811" y="887" width="260" height="4.6" fill="url(#i62)"/><rect x="808" y="891" width="241" height="4.6" fill="url(#i63)"/><rect x="804" y="895" width="223" height="4.6" fill="url(#i64)"/><rect x="801" y="899" width="205" height="4.6" fill="url(#i65)"/><rect x="798" y="903" width="186" height="4.6" fill="url(#i66)"/><rect x="794" y="907" width="168" height="4.6" fill="url(#i67)"/><rect x="791" y="911" width="150" height="4.6" fill="url(#i68)"/><rect x="787" y="915" width="131" height="4.6" fill="url(#i69)"/><rect x="784" y="919" width="113" height="4.6" fill="url(#i70)"/><rect x="780" y="923" width="94" height="4.6" fill="url(#i71)"/><rect x="777" y="927" width="76" height="4.6" fill="url(#i72)"/><rect x="774" y="931" width="58" height="4.6" fill="url(#i73)"/><rect x="770" y="935" width="39" height="4.6" fill="url(#i74)"/><rect x="767" y="939" width="22" height="4.6" fill="url(#i75)"/><rect x="767" y="943" width="22" height="4.6" fill="url(#i76)"/></g></g><path d="M402 791.8H1885M1043.5 448V999.5" stroke="#d8d8d8" stroke-width="1" stroke-dasharray="3 3" fill="none" opacity=".85"/><linearGradient id="gbl" gradientUnits="userSpaceOnUse" x1="1022" y1="640" x2="775" y2="943"><stop offset="0" stop-color="#008a00"/><stop offset=".3" stop-color="#008418"/><stop offset=".5" stop-color="#007a7a"/><stop offset=".75" stop-color="#0050a0"/><stop offset="1" stop-color="#000090"/></linearGradient><path d="M1017.5 644.8L776.5 938.7" stroke="url(#gbl)" stroke-width="2.4" fill="none"/><linearGradient id="brl" gradientUnits="userSpaceOnUse" x1="775" y1="943" x2="1585" y2="791"><stop offset="0" stop-color="#00008a"/><stop offset=".4" stop-color="#6a0088"/><stop offset="1" stop-color="#8a0010"/></linearGradient><path d="M774.5 944.2L1584.5 793.5" stroke="url(#brl)" stroke-width="2.2" fill="none"/><linearGradient id="grl" gradientUnits="userSpaceOnUse" x1="1022" y1="640" x2="1585" y2="791"><stop offset="0" stop-color="#008a00"/><stop offset=".35" stop-color="#6a7a00"/><stop offset=".7" stop-color="#8a4000"/><stop offset="1" stop-color="#8a0000"/></linearGradient><path d="M1022.5 639.3L1584.5 789.5" stroke="url(#grl)" stroke-width="1.8" fill="none"/><path d="M1031.8 643.5L1583.5 793.2L776.5 941.2Z" fill="none" stroke="#fff" stroke-width="3" stroke-linejoin="round"/><text x="404" y="916.5" font-size="13.2" fill="#f4f4f4">0.1</text><text x="404" y="860.4" font-size="13.2" fill="#f4f4f4">0.2</text><text x="404" y="804.3" font-size="13.2" fill="#f4f4f4">0.3</text><text x="404" y="748.2" font-size="13.2" fill="#f4f4f4">0.4</text><text x="404" y="692.1" font-size="13.2" fill="#f4f4f4">0.5</text><text x="404" y="636.0" font-size="13.2" fill="#f4f4f4">0.6</text><text x="404" y="579.9" font-size="13.2" fill="#f4f4f4">0.7</text><text x="404" y="523.8" font-size="13.2" fill="#f4f4f4">0.8</text><text x="694.3" y="1001.4" font-size="13.2" fill="#f4f4f4">0.1</text><text x="859.6" y="1001.4" font-size="13.2" fill="#f4f4f4">0.2</text><text x="1024.9" y="1001.4" font-size="13.2" fill="#f4f4f4">0.3</text><text x="1190.2" y="1001.4" font-size="13.2" fill="#f4f4f4">0.4</text><text x="1355.5" y="1001.4" font-size="13.2" fill="#f4f4f4">0.5</text><text x="1520.8" y="1001.4" font-size="13.2" fill="#f4f4f4">0.6</text><text x="1686.1" y="1001.4" font-size="13.2" fill="#f4f4f4">0.7</text><path d="M681 504L712 483" stroke="#d0d0d0" stroke-width="0.9"/><text x="713" y="487" font-size="12" fill="#ececec" textLength="65" lengthAdjust="spacingAndGlyphs">520 nm</text><path d="M928 555L959 534" stroke="#d0d0d0" stroke-width="0.9"/><text x="960" y="538" font-size="12" fill="#ececec" textLength="65" lengthAdjust="spacingAndGlyphs">540 nm</text><path d="M1155 628L1187 607" stroke="#d0d0d0" stroke-width="0.9"/><text x="1187" y="612" font-size="12" fill="#ececec" textLength="65" lengthAdjust="spacingAndGlyphs">560 nm</text><path d="M1315 682L1347 661" stroke="#d0d0d0" stroke-width="0.9"/><text x="1348" y="665" font-size="12" fill="#ececec" textLength="65" lengthAdjust="spacingAndGlyphs">580 nm</text><path d="M1426 720L1458 699" stroke="#d0d0d0" stroke-width="0.9"/><text x="1458" y="703" font-size="12" fill="#ececec" textLength="65" lengthAdjust="spacingAndGlyphs">600 nm</text><path d="M1531 756L1562 734" stroke="#d0d0d0" stroke-width="0.9"/><text x="1562" y="738" font-size="12" fill="#ececec" textLength="65" lengthAdjust="spacingAndGlyphs">620 nm</text><path d="M1643 794L1674 773" stroke="#d0d0d0" stroke-width="0.9"/><text x="1675" y="777" font-size="12" fill="#ececec" textLength="65" lengthAdjust="spacingAndGlyphs">640 nm</text><path d="M1692 811L1724 790" stroke="#d0d0d0" stroke-width="0.9"/><text x="1724" y="794" font-size="12" fill="#ececec" textLength="65" lengthAdjust="spacingAndGlyphs">660 nm</text><path d="M1713 818L1744 797" stroke="#d0d0d0" stroke-width="0.9"/><text x="1744" y="801" font-size="12" fill="#ececec" textLength="65" lengthAdjust="spacingAndGlyphs">680 nm</text><path d="M532 644.5L503 650.5" stroke="#d0d0d0" stroke-width="0.9"/><text x="448" y="660" font-size="12" fill="#ececec" textLength="65" lengthAdjust="spacingAndGlyphs">500 nm</text><path d="M657 878.4L627 883.2" stroke="#d0d0d0" stroke-width="0.9"/><text x="573" y="893.5" font-size="12" fill="#ececec" textLength="65" lengthAdjust="spacingAndGlyphs">480 nm</text><path d="M729.7 941L701 946.8" stroke="#d0d0d0" stroke-width="0.9"/><text x="646.5" y="956" font-size="12" fill="#ececec" textLength="65" lengthAdjust="spacingAndGlyphs">460 nm</text><path d="M754 956L724.5 960.7" stroke="#d0d0d0" stroke-width="0.9"/><text x="670" y="972" font-size="12" fill="#ececec" textLength="65" lengthAdjust="spacingAndGlyphs">440 nm</text><path d="M768 963.5L740.5 968.2" stroke="#d0d0d0" stroke-width="0.9"/><text x="686" y="979" font-size="12" fill="#ececec" textLength="65" lengthAdjust="spacingAndGlyphs">420 nm</text><text x="1725" y="944" font-family="Liberation Sans, sans-serif" font-weight="bold" font-size="14.2" fill="#4e5456" textLength="155" lengthAdjust="spacingAndGlyphs">hcfr.sourceforge.net</text><path d="M936.1 836.1L938.3 835.0L941.7 833.4L946.0 831.3L951.2 829.0L957.3 826.2L964.5 823.0L973.9 819.0L984.3 814.6L992.4 811.3L996.0 809.8L997.2 809.4L999.5 808.5L1004.4 806.6L1010.4 804.3L1016.6 802.0L1022.9 799.7L1029.4 797.4L1035.1 795.4L1039.4 793.9L1043.0 792.7L1046.8 791.4L1051.3 790.0L1056.0 788.4L1061.0 786.9L1066.4 785.2L1072.0 783.5L1078.1 781.6L1084.6 779.8L1091.5 777.8L1099.1 775.8L1107.1 773.6L1115.7 771.3L1125.0 769.0L1135.1 766.6L1145.8 764.1L1157.6 761.6L1170.2 759.0L1183.8 756.4L1198.6 753.8L1215.7 751.1L1234.0 748.5L1250.8 746.3L1265.4 744.7L1278.5 743.5L1288.8 742.7L1295.7 742.1L1299.9 741.8L1302.5 741.7" fill="none" stroke="#000" stroke-width="1.3"/><text x="1225.5" y="739.5" font-size="13.2" fill="#111">3000</text><text x="1286.5" y="737" font-size="13.2" fill="#111">2700</text><text x="1131" y="756" font-size="13.2" fill="#111">4000</text><text x="1052.5" y="774" font-size="13.2" fill="#111">5500</text><text x="978" y="806" font-size="13.2" fill="#111">9300</text><circle cx="1250.8" cy="746.3" r="2.4" fill="#fff" stroke="#000" stroke-width="0.8"/><circle cx="1288.8" cy="742.7" r="2.4" fill="#fff" stroke="#000" stroke-width="0.8"/><circle cx="1157.6" cy="761.6" r="2.4" fill="#fff" stroke="#000" stroke-width="0.8"/><circle cx="1078.1" cy="781.6" r="2.4" fill="#fff" stroke="#000" stroke-width="0.8"/><circle cx="999.5" cy="808.5" r="2.4" fill="#fff" stroke="#000" stroke-width="0.8"/><circle cx="1266.5" cy="746.5" r="2.6" fill="#10c010" stroke="#064" stroke-width=".6"/><circle cx="1102.5" cy="779.2" r="2.4" fill="#10c010" stroke="#064" stroke-width=".6"/><text x="1012" y="793" font-size="13" fill="#111">D65</text><text x="1106" y="796" font-size="11" fill="#111">B</text><path d="M1584.5 791.3L1043.5 791.8" stroke="#333" stroke-width="0.8" stroke-dasharray="3 4" fill="none" opacity=".8"/><path d="M1022.5 639.8L1043.5 791.8" stroke="#333" stroke-width="0.8" stroke-dasharray="3 4" fill="none" opacity=".8"/><path d="M774.5 942.7L1043.5 791.8" stroke="#333" stroke-width="0.8" stroke-dasharray="3 4" fill="none" opacity=".8"/><path d="M1219.7 692.9L1043.5 791.8" stroke="#333" stroke-width="0.8" stroke-dasharray="3 4" fill="none" opacity=".8"/><path d="M897.9 792.0L1043.5 791.8" stroke="#333" stroke-width="0.8" stroke-dasharray="3 4" fill="none" opacity=".8"/><path d="M1057.0 889.9L1043.5 791.8" stroke="#333" stroke-width="0.8" stroke-dasharray="3 4" fill="none" opacity=".8"/><rect x="1122.1" y="689.6" width="12.4" height="12.4" fill="none" stroke="#cf8f48" stroke-width="1.7"/><rect x="1123.7" y="691.2" width="9.2" height="9.2" fill="none" stroke="#68745a" stroke-width="1.4"/><path d="M1121.3 688.8l3.2 3.2M1135.3 688.8l-3.2 3.2M1121.3 702.8l3.2-3.2M1135.3 702.8l-3.2-3.2" stroke="#fbf4e6" stroke-width="0.8"/><rect x="1153.5" y="690.5" width="12.4" height="12.4" fill="none" stroke="#cf8f48" stroke-width="1.7"/><rect x="1155.1" y="692.1" width="9.2" height="9.2" fill="none" stroke="#68745a" stroke-width="1.4"/><path d="M1152.7 689.7l3.2 3.2M1166.7 689.7l-3.2 3.2M1152.7 703.7l3.2-3.2M1166.7 703.7l-3.2-3.2" stroke="#fbf4e6" stroke-width="0.8"/><rect x="1193.8" y="677.8" width="12.4" height="12.4" fill="none" stroke="#cf8f48" stroke-width="1.7"/><rect x="1195.4" y="679.4" width="9.2" height="9.2" fill="none" stroke="#68745a" stroke-width="1.4"/><path d="M1193.0 677.0l3.2 3.2M1207.0 677.0l-3.2 3.2M1193.0 691.0l3.2-3.2M1207.0 691.0l-3.2-3.2" stroke="#fbf4e6" stroke-width="0.8"/><rect x="1225.5" y="689.6" width="12.4" height="12.4" fill="none" stroke="#cf8f48" stroke-width="1.7"/><rect x="1227.1" y="691.2" width="9.2" height="9.2" fill="none" stroke="#68745a" stroke-width="1.4"/><path d="M1224.7 688.8l3.2 3.2M1238.7 688.8l-3.2 3.2M1224.7 702.8l3.2-3.2M1238.7 702.8l-3.2-3.2" stroke="#fbf4e6" stroke-width="0.8"/><rect x="1244.6" y="694.6" width="12.4" height="12.4" fill="none" stroke="#cf8f48" stroke-width="1.7"/><rect x="1246.2" y="696.2" width="9.2" height="9.2" fill="none" stroke="#68745a" stroke-width="1.4"/><path d="M1243.8 693.8l3.2 3.2M1257.8 693.8l-3.2 3.2M1243.8 707.8l3.2-3.2M1257.8 707.8l-3.2-3.2" stroke="#fbf4e6" stroke-width="0.8"/><rect x="1283.8" y="709.6" width="12.4" height="12.4" fill="none" stroke="#cf8f48" stroke-width="1.7"/><rect x="1285.4" y="711.2" width="9.2" height="9.2" fill="none" stroke="#68745a" stroke-width="1.4"/><path d="M1283.0 708.8l3.2 3.2M1297.0 708.8l-3.2 3.2M1283.0 722.8l3.2-3.2M1297.0 722.8l-3.2-3.2" stroke="#fbf4e6" stroke-width="0.8"/><rect x="1291.3" y="707.1" width="12.4" height="12.4" fill="none" stroke="#cf8f48" stroke-width="1.7"/><rect x="1292.9" y="708.7" width="9.2" height="9.2" fill="none" stroke="#68745a" stroke-width="1.4"/><path d="M1290.5 706.3l3.2 3.2M1304.5 706.3l-3.2 3.2M1290.5 720.3l3.2-3.2M1304.5 720.3l-3.2-3.2" stroke="#fbf4e6" stroke-width="0.8"/><rect x="1319.6" y="728.0" width="12.4" height="12.4" fill="none" stroke="#cf8f48" stroke-width="1.7"/><rect x="1321.2" y="729.6" width="9.2" height="9.2" fill="none" stroke="#68745a" stroke-width="1.4"/><path d="M1318.8 727.2l3.2 3.2M1332.8 727.2l-3.2 3.2M1318.8 741.2l3.2-3.2M1332.8 741.2l-3.2-3.2" stroke="#fbf4e6" stroke-width="0.8"/><rect x="1347.6" y="723.3" width="12.4" height="12.4" fill="none" stroke="#cf8f48" stroke-width="1.7"/><rect x="1349.2" y="724.9" width="9.2" height="9.2" fill="none" stroke="#68745a" stroke-width="1.4"/><path d="M1346.8 722.5l3.2 3.2M1360.8 722.5l-3.2 3.2M1346.8 736.5l3.2-3.2M1360.8 736.5l-3.2-3.2" stroke="#fbf4e6" stroke-width="0.8"/><rect x="1353.8" y="723.8" width="12.4" height="12.4" fill="none" stroke="#cf8f48" stroke-width="1.7"/><rect x="1355.4" y="725.4" width="9.2" height="9.2" fill="none" stroke="#68745a" stroke-width="1.4"/><path d="M1353.0 723.0l3.2 3.2M1367.0 723.0l-3.2 3.2M1353.0 737.0l3.2-3.2M1367.0 737.0l-3.2-3.2" stroke="#fbf4e6" stroke-width="0.8"/><rect x="1171.8" y="746.3" width="12.4" height="12.4" fill="none" stroke="#cf8f48" stroke-width="1.7"/><rect x="1173.4" y="747.9" width="9.2" height="9.2" fill="none" stroke="#68745a" stroke-width="1.4"/><path d="M1171.0 745.5l3.2 3.2M1185.0 745.5l-3.2 3.2M1171.0 759.5l3.2-3.2M1185.0 759.5l-3.2-3.2" stroke="#fbf4e6" stroke-width="0.8"/><rect x="1170.5" y="759.6" width="12.4" height="12.4" fill="none" stroke="#cf8f48" stroke-width="1.7"/><rect x="1172.1" y="761.2" width="9.2" height="9.2" fill="none" stroke="#68745a" stroke-width="1.4"/><path d="M1169.7 758.8l3.2 3.2M1183.7 758.8l-3.2 3.2M1169.7 772.8l3.2-3.2M1183.7 772.8l-3.2-3.2" stroke="#fbf4e6" stroke-width="0.8"/><rect x="1069.6" y="753.8" width="12.4" height="12.4" fill="none" stroke="#cf8f48" stroke-width="1.7"/><rect x="1071.2" y="755.4" width="9.2" height="9.2" fill="none" stroke="#68745a" stroke-width="1.4"/><path d="M1068.8 753.0l3.2 3.2M1082.8 753.0l-3.2 3.2M1068.8 767.0l3.2-3.2M1082.8 767.0l-3.2-3.2" stroke="#fbf4e6" stroke-width="0.8"/><rect x="1145.5" y="768.8" width="12.4" height="12.4" fill="none" stroke="#cf8f48" stroke-width="1.7"/><rect x="1147.1" y="770.4" width="9.2" height="9.2" fill="none" stroke="#68745a" stroke-width="1.4"/><path d="M1144.7 768.0l3.2 3.2M1158.7 768.0l-3.2 3.2M1144.7 782.0l3.2-3.2M1158.7 782.0l-3.2-3.2" stroke="#fbf4e6" stroke-width="0.8"/><rect x="1130.5" y="774.6" width="12.4" height="12.4" fill="none" stroke="#cf8f48" stroke-width="1.7"/><rect x="1132.1" y="776.2" width="9.2" height="9.2" fill="none" stroke="#68745a" stroke-width="1.4"/><path d="M1129.7 773.8l3.2 3.2M1143.7 773.8l-3.2 3.2M1129.7 787.8l3.2-3.2M1143.7 787.8l-3.2-3.2" stroke="#fbf4e6" stroke-width="0.8"/><rect x="1087.1" y="777.1" width="12.4" height="12.4" fill="none" stroke="#cf8f48" stroke-width="1.7"/><rect x="1088.7" y="778.7" width="9.2" height="9.2" fill="none" stroke="#68745a" stroke-width="1.4"/><path d="M1086.3 776.3l3.2 3.2M1100.3 776.3l-3.2 3.2M1086.3 790.3l3.2-3.2M1100.3 790.3l-3.2-3.2" stroke="#fbf4e6" stroke-width="0.8"/><rect x="1065.5" y="775.5" width="12.4" height="12.4" fill="none" stroke="#cf8f48" stroke-width="1.7"/><rect x="1067.1" y="777.1" width="9.2" height="9.2" fill="none" stroke="#68745a" stroke-width="1.4"/><path d="M1064.7 774.7l3.2 3.2M1078.7 774.7l-3.2 3.2M1064.7 788.7l3.2-3.2M1078.7 788.7l-3.2-3.2" stroke="#fbf4e6" stroke-width="0.8"/><rect x="1192.1" y="759.6" width="12.4" height="12.4" fill="none" stroke="#cf8f48" stroke-width="1.7"/><rect x="1193.7" y="761.2" width="9.2" height="9.2" fill="none" stroke="#68745a" stroke-width="1.4"/><path d="M1191.3 758.8l3.2 3.2M1205.3 758.8l-3.2 3.2M1191.3 772.8l3.2-3.2M1205.3 772.8l-3.2-3.2" stroke="#fbf4e6" stroke-width="0.8"/><rect x="1202.1" y="758.0" width="12.4" height="12.4" fill="none" stroke="#cf8f48" stroke-width="1.7"/><rect x="1203.7" y="759.6" width="9.2" height="9.2" fill="none" stroke="#68745a" stroke-width="1.4"/><path d="M1201.3 757.2l3.2 3.2M1215.3 757.2l-3.2 3.2M1201.3 771.2l3.2-3.2M1215.3 771.2l-3.2-3.2" stroke="#fbf4e6" stroke-width="0.8"/><rect x="1210.5" y="757.1" width="12.4" height="12.4" fill="none" stroke="#cf8f48" stroke-width="1.7"/><rect x="1212.1" y="758.7" width="9.2" height="9.2" fill="none" stroke="#68745a" stroke-width="1.4"/><path d="M1209.7 756.3l3.2 3.2M1223.7 756.3l-3.2 3.2M1209.7 770.3l3.2-3.2M1223.7 770.3l-3.2-3.2" stroke="#fbf4e6" stroke-width="0.8"/><rect x="1218.8" y="756.3" width="12.4" height="12.4" fill="none" stroke="#cf8f48" stroke-width="1.7"/><rect x="1220.4" y="757.9" width="9.2" height="9.2" fill="none" stroke="#68745a" stroke-width="1.4"/><path d="M1218.0 755.5l3.2 3.2M1232.0 755.5l-3.2 3.2M1218.0 769.5l3.2-3.2M1232.0 769.5l-3.2-3.2" stroke="#fbf4e6" stroke-width="0.8"/><rect x="1227.1" y="756.3" width="12.4" height="12.4" fill="none" stroke="#cf8f48" stroke-width="1.7"/><rect x="1228.7" y="757.9" width="9.2" height="9.2" fill="none" stroke="#68745a" stroke-width="1.4"/><path d="M1226.3 755.5l3.2 3.2M1240.3 755.5l-3.2 3.2M1226.3 769.5l3.2-3.2M1240.3 769.5l-3.2-3.2" stroke="#fbf4e6" stroke-width="0.8"/><rect x="1233.8" y="747.1" width="12.4" height="12.4" fill="none" stroke="#cf8f48" stroke-width="1.7"/><rect x="1235.4" y="748.7" width="9.2" height="9.2" fill="none" stroke="#68745a" stroke-width="1.4"/><path d="M1233.0 746.3l3.2 3.2M1247.0 746.3l-3.2 3.2M1233.0 760.3l3.2-3.2M1247.0 760.3l-3.2-3.2" stroke="#fbf4e6" stroke-width="0.8"/><rect x="1258.8" y="753.8" width="12.4" height="12.4" fill="none" stroke="#cf8f48" stroke-width="1.7"/><rect x="1260.4" y="755.4" width="9.2" height="9.2" fill="none" stroke="#68745a" stroke-width="1.4"/><path d="M1258.0 753.0l3.2 3.2M1272.0 753.0l-3.2 3.2M1258.0 767.0l3.2-3.2M1272.0 767.0l-3.2-3.2" stroke="#fbf4e6" stroke-width="0.8"/><rect x="1269.6" y="756.3" width="12.4" height="12.4" fill="none" stroke="#cf8f48" stroke-width="1.7"/><rect x="1271.2" y="757.9" width="9.2" height="9.2" fill="none" stroke="#68745a" stroke-width="1.4"/><path d="M1268.8 755.5l3.2 3.2M1282.8 755.5l-3.2 3.2M1268.8 769.5l3.2-3.2M1282.8 769.5l-3.2-3.2" stroke="#fbf4e6" stroke-width="0.8"/><rect x="1287.1" y="743.8" width="12.4" height="12.4" fill="none" stroke="#cf8f48" stroke-width="1.7"/><rect x="1288.7" y="745.4" width="9.2" height="9.2" fill="none" stroke="#68745a" stroke-width="1.4"/><path d="M1286.3 743.0l3.2 3.2M1300.3 743.0l-3.2 3.2M1286.3 757.0l3.2-3.2M1300.3 757.0l-3.2-3.2" stroke="#fbf4e6" stroke-width="0.8"/><rect x="1313.8" y="743.8" width="12.4" height="12.4" fill="none" stroke="#cf8f48" stroke-width="1.7"/><rect x="1315.4" y="745.4" width="9.2" height="9.2" fill="none" stroke="#68745a" stroke-width="1.4"/><path d="M1313.0 743.0l3.2 3.2M1327.0 743.0l-3.2 3.2M1313.0 757.0l3.2-3.2M1327.0 757.0l-3.2-3.2" stroke="#fbf4e6" stroke-width="0.8"/><rect x="1317.1" y="755.5" width="12.4" height="12.4" fill="none" stroke="#cf8f48" stroke-width="1.7"/><rect x="1318.7" y="757.1" width="9.2" height="9.2" fill="none" stroke="#68745a" stroke-width="1.4"/><path d="M1316.3 754.7l3.2 3.2M1330.3 754.7l-3.2 3.2M1316.3 768.7l3.2-3.2M1330.3 768.7l-3.2-3.2" stroke="#fbf4e6" stroke-width="0.8"/><rect x="1328.8" y="753.0" width="12.4" height="12.4" fill="none" stroke="#cf8f48" stroke-width="1.7"/><rect x="1330.4" y="754.6" width="9.2" height="9.2" fill="none" stroke="#68745a" stroke-width="1.4"/><path d="M1328.0 752.2l3.2 3.2M1342.0 752.2l-3.2 3.2M1328.0 766.2l3.2-3.2M1342.0 766.2l-3.2-3.2" stroke="#fbf4e6" stroke-width="0.8"/><rect x="1282.1" y="774.6" width="12.4" height="12.4" fill="none" stroke="#cf8f48" stroke-width="1.7"/><rect x="1283.7" y="776.2" width="9.2" height="9.2" fill="none" stroke="#68745a" stroke-width="1.4"/><path d="M1281.3 773.8l3.2 3.2M1295.3 773.8l-3.2 3.2M1281.3 787.8l3.2-3.2M1295.3 787.8l-3.2-3.2" stroke="#fbf4e6" stroke-width="0.8"/><rect x="1230.5" y="786.3" width="12.4" height="12.4" fill="none" stroke="#cf8f48" stroke-width="1.7"/><rect x="1232.1" y="787.9" width="9.2" height="9.2" fill="none" stroke="#68745a" stroke-width="1.4"/><path d="M1229.7 785.5l3.2 3.2M1243.7 785.5l-3.2 3.2M1229.7 799.5l3.2-3.2M1243.7 799.5l-3.2-3.2" stroke="#fbf4e6" stroke-width="0.8"/><rect x="1101.3" y="807.1" width="12.4" height="12.4" fill="none" stroke="#cf8f48" stroke-width="1.7"/><rect x="1102.9" y="808.7" width="9.2" height="9.2" fill="none" stroke="#68745a" stroke-width="1.4"/><path d="M1100.5 806.3l3.2 3.2M1114.5 806.3l-3.2 3.2M1100.5 820.3l3.2-3.2M1114.5 820.3l-3.2-3.2" stroke="#fbf4e6" stroke-width="0.8"/><rect x="1228.8" y="819.6" width="12.4" height="12.4" fill="none" stroke="#cf8f48" stroke-width="1.7"/><rect x="1230.4" y="821.2" width="9.2" height="9.2" fill="none" stroke="#68745a" stroke-width="1.4"/><path d="M1228.0 818.8l3.2 3.2M1242.0 818.8l-3.2 3.2M1228.0 832.8l3.2-3.2M1242.0 832.8l-3.2-3.2" stroke="#fbf4e6" stroke-width="0.8"/><rect x="1228.0" y="826.3" width="12.4" height="12.4" fill="none" stroke="#cf8f48" stroke-width="1.7"/><rect x="1229.6" y="827.9" width="9.2" height="9.2" fill="none" stroke="#68745a" stroke-width="1.4"/><path d="M1227.2 825.5l3.2 3.2M1241.2 825.5l-3.2 3.2M1227.2 839.5l3.2-3.2M1241.2 839.5l-3.2-3.2" stroke="#fbf4e6" stroke-width="0.8"/><rect x="1280.1" y="833.0" width="12.4" height="12.4" fill="none" stroke="#cf8f48" stroke-width="1.7"/><rect x="1281.7" y="834.6" width="9.2" height="9.2" fill="none" stroke="#68745a" stroke-width="1.4"/><path d="M1279.3 832.2l3.2 3.2M1293.3 832.2l-3.2 3.2M1279.3 846.2l3.2-3.2M1293.3 846.2l-3.2-3.2" stroke="#fbf4e6" stroke-width="0.8"/><rect x="1060.5" y="834.1" width="12.4" height="12.4" fill="none" stroke="#cf8f48" stroke-width="1.7"/><rect x="1062.1" y="835.7" width="9.2" height="9.2" fill="none" stroke="#68745a" stroke-width="1.4"/><path d="M1059.7 833.3l3.2 3.2M1073.7 833.3l-3.2 3.2M1059.7 847.3l3.2-3.2M1073.7 847.3l-3.2-3.2" stroke="#fbf4e6" stroke-width="0.8"/><rect x="1034.3" y="770.8" width="12.4" height="12.4" fill="none" stroke="#cf8f48" stroke-width="1.7"/><rect x="1035.9" y="772.4" width="9.2" height="9.2" fill="none" stroke="#68745a" stroke-width="1.4"/><path d="M1033.5 770.0l3.2 3.2M1047.5 770.0l-3.2 3.2M1033.5 784.0l3.2-3.2M1047.5 784.0l-3.2-3.2" stroke="#fbf4e6" stroke-width="0.8"/><rect x="1375.1" y="743.8" width="12.4" height="12.4" fill="none" stroke="#cf8f48" stroke-width="1.7"/><rect x="1376.7" y="745.4" width="9.2" height="9.2" fill="none" stroke="#68745a" stroke-width="1.4"/><path d="M1374.3 743.0l3.2 3.2M1388.3 743.0l-3.2 3.2M1374.3 757.0l3.2-3.2M1388.3 757.0l-3.2-3.2" stroke="#fbf4e6" stroke-width="0.8"/><rect x="1466.3" y="755.1" width="12.4" height="12.4" fill="none" stroke="#cf8f48" stroke-width="1.7"/><rect x="1467.9" y="756.7" width="9.2" height="9.2" fill="none" stroke="#68745a" stroke-width="1.4"/><path d="M1465.5 754.3l3.2 3.2M1479.5 754.3l-3.2 3.2M1465.5 768.3l3.2-3.2M1479.5 768.3l-3.2-3.2" stroke="#fbf4e6" stroke-width="0.8"/><rect x="1403.8" y="787.6" width="12.4" height="12.4" fill="none" stroke="#cf8f48" stroke-width="1.7"/><rect x="1405.4" y="789.2" width="9.2" height="9.2" fill="none" stroke="#68745a" stroke-width="1.4"/><path d="M1403.0 786.8l3.2 3.2M1417.0 786.8l-3.2 3.2M1403.0 800.8l3.2-3.2M1417.0 800.8l-3.2-3.2" stroke="#fbf4e6" stroke-width="0.8"/><rect x="1376.3" y="801.8" width="12.4" height="12.4" fill="none" stroke="#cf8f48" stroke-width="1.7"/><rect x="1377.9" y="803.4" width="9.2" height="9.2" fill="none" stroke="#68745a" stroke-width="1.4"/><path d="M1375.5 801.0l3.2 3.2M1389.5 801.0l-3.2 3.2M1375.5 815.0l3.2-3.2M1389.5 815.0l-3.2-3.2" stroke="#fbf4e6" stroke-width="0.8"/><rect x="1413.8" y="808.8" width="12.4" height="12.4" fill="none" stroke="#cf8f48" stroke-width="1.7"/><rect x="1415.4" y="810.4" width="9.2" height="9.2" fill="none" stroke="#68745a" stroke-width="1.4"/><path d="M1413.0 808.0l3.2 3.2M1427.0 808.0l-3.2 3.2M1413.0 822.0l3.2-3.2M1427.0 822.0l-3.2-3.2" stroke="#fbf4e6" stroke-width="0.8"/><rect x="1521.3" y="781.3" width="12.4" height="12.4" fill="none" stroke="#cf8f48" stroke-width="1.7"/><rect x="1522.9" y="782.9" width="9.2" height="9.2" fill="none" stroke="#68745a" stroke-width="1.4"/><path d="M1520.5 780.5l3.2 3.2M1534.5 780.5l-3.2 3.2M1520.5 794.5l3.2-3.2M1534.5 794.5l-3.2-3.2" stroke="#fbf4e6" stroke-width="0.8"/><rect x="1536.3" y="792.6" width="12.4" height="12.4" fill="none" stroke="#cf8f48" stroke-width="1.7"/><rect x="1537.9" y="794.2" width="9.2" height="9.2" fill="none" stroke="#68745a" stroke-width="1.4"/><path d="M1535.5 791.8l3.2 3.2M1549.5 791.8l-3.2 3.2M1535.5 805.8l3.2-3.2M1549.5 805.8l-3.2-3.2" stroke="#fbf4e6" stroke-width="0.8"/><rect x="965.7" y="726.3" width="12.4" height="12.4" fill="none" stroke="#cf8f48" stroke-width="1.7"/><rect x="967.3" y="727.9" width="9.2" height="9.2" fill="none" stroke="#68745a" stroke-width="1.4"/><path d="M964.9 725.5l3.2 3.2M978.9 725.5l-3.2 3.2M964.9 739.5l3.2-3.2M978.9 739.5l-3.2-3.2" stroke="#fbf4e6" stroke-width="0.8"/><rect x="992.2" y="720.3" width="12.4" height="12.4" fill="none" stroke="#cf8f48" stroke-width="1.7"/><rect x="993.8" y="721.9" width="9.2" height="9.2" fill="none" stroke="#68745a" stroke-width="1.4"/><path d="M991.4 719.5l3.2 3.2M1005.4 719.5l-3.2 3.2M991.4 733.5l3.2-3.2M1005.4 733.5l-3.2-3.2" stroke="#fbf4e6" stroke-width="0.8"/><rect x="985.0" y="751.1" width="12.4" height="12.4" fill="none" stroke="#cf8f48" stroke-width="1.7"/><rect x="986.6" y="752.7" width="9.2" height="9.2" fill="none" stroke="#68745a" stroke-width="1.4"/><path d="M984.2 750.3l3.2 3.2M998.2 750.3l-3.2 3.2M984.2 764.3l3.2-3.2M998.2 764.3l-3.2-3.2" stroke="#fbf4e6" stroke-width="0.8"/><rect x="913.9" y="756.9" width="12.4" height="12.4" fill="none" stroke="#cf8f48" stroke-width="1.7"/><rect x="915.5" y="758.5" width="9.2" height="9.2" fill="none" stroke="#68745a" stroke-width="1.4"/><path d="M913.1 756.1l3.2 3.2M927.1 756.1l-3.2 3.2M913.1 770.1l3.2-3.2M927.1 770.1l-3.2-3.2" stroke="#fbf4e6" stroke-width="0.8"/><rect x="906.7" y="763.6" width="12.4" height="12.4" fill="none" stroke="#cf8f48" stroke-width="1.7"/><rect x="908.3" y="765.2" width="9.2" height="9.2" fill="none" stroke="#68745a" stroke-width="1.4"/><path d="M905.9 762.8l3.2 3.2M919.9 762.8l-3.2 3.2M905.9 776.8l3.2-3.2M919.9 776.8l-3.2-3.2" stroke="#fbf4e6" stroke-width="0.8"/><rect x="879.0" y="799.7" width="12.4" height="12.4" fill="none" stroke="#cf8f48" stroke-width="1.7"/><rect x="880.6" y="801.3" width="9.2" height="9.2" fill="none" stroke="#68745a" stroke-width="1.4"/><path d="M878.2 798.9l3.2 3.2M892.2 798.9l-3.2 3.2M878.2 812.9l3.2-3.2M892.2 812.9l-3.2-3.2" stroke="#fbf4e6" stroke-width="0.8"/><rect x="869.4" y="813.0" width="12.4" height="12.4" fill="none" stroke="#cf8f48" stroke-width="1.7"/><rect x="871.0" y="814.6" width="9.2" height="9.2" fill="none" stroke="#68745a" stroke-width="1.4"/><path d="M868.6 812.2l3.2 3.2M882.6 812.2l-3.2 3.2M868.6 826.2l3.2-3.2M882.6 826.2l-3.2-3.2" stroke="#fbf4e6" stroke-width="0.8"/><rect x="900.7" y="788.9" width="12.4" height="12.4" fill="none" stroke="#cf8f48" stroke-width="1.7"/><rect x="902.3" y="790.5" width="9.2" height="9.2" fill="none" stroke="#68745a" stroke-width="1.4"/><path d="M899.9 788.1l3.2 3.2M913.9 788.1l-3.2 3.2M899.9 802.1l3.2-3.2M913.9 802.1l-3.2-3.2" stroke="#fbf4e6" stroke-width="0.8"/><rect x="915.1" y="805.0" width="12.4" height="12.4" fill="none" stroke="#cf8f48" stroke-width="1.7"/><rect x="916.7" y="806.6" width="9.2" height="9.2" fill="none" stroke="#68745a" stroke-width="1.4"/><path d="M914.3 804.2l3.2 3.2M928.3 804.2l-3.2 3.2M914.3 818.2l3.2-3.2M928.3 818.2l-3.2-3.2" stroke="#fbf4e6" stroke-width="0.8"/><rect x="951.2" y="808.2" width="12.4" height="12.4" fill="none" stroke="#cf8f48" stroke-width="1.7"/><rect x="952.8" y="809.8" width="9.2" height="9.2" fill="none" stroke="#68745a" stroke-width="1.4"/><path d="M950.4 807.4l3.2 3.2M964.4 807.4l-3.2 3.2M950.4 821.4l3.2-3.2M964.4 821.4l-3.2-3.2" stroke="#fbf4e6" stroke-width="0.8"/><rect x="956.1" y="807.0" width="12.4" height="12.4" fill="none" stroke="#cf8f48" stroke-width="1.7"/><rect x="957.7" y="808.6" width="9.2" height="9.2" fill="none" stroke="#68745a" stroke-width="1.4"/><path d="M955.3 806.2l3.2 3.2M969.3 806.2l-3.2 3.2M955.3 820.2l3.2-3.2M969.3 820.2l-3.2-3.2" stroke="#fbf4e6" stroke-width="0.8"/><rect x="1005.4" y="813.0" width="12.4" height="12.4" fill="none" stroke="#cf8f48" stroke-width="1.7"/><rect x="1007.0" y="814.6" width="9.2" height="9.2" fill="none" stroke="#68745a" stroke-width="1.4"/><path d="M1004.6 812.2l3.2 3.2M1018.6 812.2l-3.2 3.2M1004.6 826.2l3.2-3.2M1018.6 826.2l-3.2-3.2" stroke="#fbf4e6" stroke-width="0.8"/><rect x="977.7" y="838.3" width="12.4" height="12.4" fill="none" stroke="#cf8f48" stroke-width="1.7"/><rect x="979.3" y="839.9" width="9.2" height="9.2" fill="none" stroke="#68745a" stroke-width="1.4"/><path d="M976.9 837.5l3.2 3.2M990.9 837.5l-3.2 3.2M976.9 851.5l3.2-3.2M990.9 851.5l-3.2-3.2" stroke="#fbf4e6" stroke-width="0.8"/><rect x="848.2" y="838.3" width="12.4" height="12.4" fill="none" stroke="#cf8f48" stroke-width="1.7"/><rect x="849.8" y="839.9" width="9.2" height="9.2" fill="none" stroke="#68745a" stroke-width="1.4"/><path d="M847.4 837.5l3.2 3.2M861.4 837.5l-3.2 3.2M847.4 851.5l3.2-3.2M861.4 851.5l-3.2-3.2" stroke="#fbf4e6" stroke-width="0.8"/><rect x="827.2" y="862.4" width="12.4" height="12.4" fill="none" stroke="#cf8f48" stroke-width="1.7"/><rect x="828.8" y="864.0" width="9.2" height="9.2" fill="none" stroke="#68745a" stroke-width="1.4"/><path d="M826.4 861.6l3.2 3.2M840.4 861.6l-3.2 3.2M826.4 875.6l3.2-3.2M840.4 875.6l-3.2-3.2" stroke="#fbf4e6" stroke-width="0.8"/><rect x="867.0" y="866.0" width="12.4" height="12.4" fill="none" stroke="#cf8f48" stroke-width="1.7"/><rect x="868.6" y="867.6" width="9.2" height="9.2" fill="none" stroke="#68745a" stroke-width="1.4"/><path d="M866.2 865.2l3.2 3.2M880.2 865.2l-3.2 3.2M866.2 879.2l3.2-3.2M880.2 879.2l-3.2-3.2" stroke="#fbf4e6" stroke-width="0.8"/><rect x="794.7" y="905.7" width="12.4" height="12.4" fill="none" stroke="#cf8f48" stroke-width="1.7"/><rect x="796.3" y="907.3" width="9.2" height="9.2" fill="none" stroke="#68745a" stroke-width="1.4"/><path d="M793.9 904.9l3.2 3.2M807.9 904.9l-3.2 3.2M793.9 918.9l3.2-3.2M807.9 918.9l-3.2-3.2" stroke="#fbf4e6" stroke-width="0.8"/><rect x="1041.8" y="648.8" width="12.4" height="12.4" fill="none" stroke="#cf8f48" stroke-width="1.7"/><rect x="1043.4" y="650.4" width="9.2" height="9.2" fill="none" stroke="#68745a" stroke-width="1.4"/><path d="M1041.0 648.0l3.2 3.2M1055.0 648.0l-3.2 3.2M1041.0 662.0l3.2-3.2M1055.0 662.0l-3.2-3.2" stroke="#fbf4e6" stroke-width="0.8"/><rect x="1051.3" y="659.8" width="12.4" height="12.4" fill="none" stroke="#cf8f48" stroke-width="1.7"/><rect x="1052.9" y="661.4" width="9.2" height="9.2" fill="none" stroke="#68745a" stroke-width="1.4"/><path d="M1050.5 659.0l3.2 3.2M1064.5 659.0l-3.2 3.2M1050.5 673.0l3.2-3.2M1064.5 673.0l-3.2-3.2" stroke="#fbf4e6" stroke-width="0.8"/><rect x="1052.6" y="664.8" width="12.4" height="12.4" fill="none" stroke="#cf8f48" stroke-width="1.7"/><rect x="1054.2" y="666.4" width="9.2" height="9.2" fill="none" stroke="#68745a" stroke-width="1.4"/><path d="M1051.8 664.0l3.2 3.2M1065.8 664.0l-3.2 3.2M1051.8 678.0l3.2-3.2M1065.8 678.0l-3.2-3.2" stroke="#fbf4e6" stroke-width="0.8"/><rect x="1068.6" y="871.9" width="12.4" height="12.4" fill="none" stroke="#cf8f48" stroke-width="1.7"/><rect x="1070.2" y="873.5" width="9.2" height="9.2" fill="none" stroke="#68745a" stroke-width="1.4"/><path d="M1067.8 871.1l3.2 3.2M1081.8 871.1l-3.2 3.2M1067.8 885.1l3.2-3.2M1081.8 885.1l-3.2-3.2" stroke="#fbf4e6" stroke-width="0.8"/><rect x="1579.3" y="786.1" width="10.4" height="10.4" fill="none" stroke="#f00000" stroke-width="2.6"/><path d="M1577.5 791.3V784.3H1591.5" fill="none" stroke="#20106a" stroke-width="1.1"/><path d="M1577.5 791.3V798.3H1591.5V784.3" fill="none" stroke="#e00020" stroke-width="1.1"/><rect x="1525.2" y="786.1" width="10.4" height="10.4" fill="none" stroke="#f00000" stroke-width="2.6"/><path d="M1523.4 791.3V784.3H1537.4" fill="none" stroke="#20106a" stroke-width="1.1"/><path d="M1523.4 791.3V798.3H1537.4V784.3" fill="none" stroke="#e00020" stroke-width="1.1"/><rect x="1471.1" y="786.2" width="10.4" height="10.4" fill="none" stroke="#f00000" stroke-width="2.6"/><path d="M1469.3 791.4V784.4H1483.3" fill="none" stroke="#20106a" stroke-width="1.1"/><path d="M1469.3 791.4V798.4H1483.3V784.4" fill="none" stroke="#e00020" stroke-width="1.1"/><rect x="1417.0" y="786.2" width="10.4" height="10.4" fill="none" stroke="#f00000" stroke-width="2.6"/><path d="M1415.2 791.4V784.4H1429.2" fill="none" stroke="#20106a" stroke-width="1.1"/><path d="M1415.2 791.4V798.4H1429.2V784.4" fill="none" stroke="#e00020" stroke-width="1.1"/><rect x="1362.9" y="786.3" width="10.4" height="10.4" fill="none" stroke="#f00000" stroke-width="2.6"/><path d="M1361.1 791.5V784.5H1375.1" fill="none" stroke="#20106a" stroke-width="1.1"/><path d="M1361.1 791.5V798.5H1375.1V784.5" fill="none" stroke="#e00020" stroke-width="1.1"/><rect x="1308.8" y="786.4" width="10.4" height="10.4" fill="none" stroke="#f00000" stroke-width="2.6"/><path d="M1307.0 791.6V784.6H1321.0" fill="none" stroke="#20106a" stroke-width="1.1"/><path d="M1307.0 791.6V798.6H1321.0V784.6" fill="none" stroke="#e00020" stroke-width="1.1"/><rect x="1254.7" y="786.4" width="10.4" height="10.4" fill="none" stroke="#f00000" stroke-width="2.6"/><path d="M1252.9 791.6V784.6H1266.9" fill="none" stroke="#20106a" stroke-width="1.1"/><path d="M1252.9 791.6V798.6H1266.9V784.6" fill="none" stroke="#e00020" stroke-width="1.1"/><rect x="1200.6" y="786.5" width="10.4" height="10.4" fill="none" stroke="#f00000" stroke-width="2.6"/><path d="M1198.8 791.7V784.7H1212.8" fill="none" stroke="#20106a" stroke-width="1.1"/><path d="M1198.8 791.7V798.7H1212.8V784.7" fill="none" stroke="#e00020" stroke-width="1.1"/><rect x="1146.5" y="786.5" width="10.4" height="10.4" fill="none" stroke="#f00000" stroke-width="2.6"/><path d="M1144.7 791.7V784.7H1158.7" fill="none" stroke="#20106a" stroke-width="1.1"/><path d="M1144.7 791.7V798.7H1158.7V784.7" fill="none" stroke="#e00020" stroke-width="1.1"/><rect x="1092.4" y="786.6" width="10.4" height="10.4" fill="none" stroke="#f00000" stroke-width="2.6"/><path d="M1090.6 791.8V784.8H1104.6" fill="none" stroke="#20106a" stroke-width="1.1"/><path d="M1090.6 791.8V798.8H1104.6V784.8" fill="none" stroke="#e00020" stroke-width="1.1"/><rect x="1015.5" y="632.8" width="14" height="14" fill="#48f000" fill-opacity="0.25"/><rect x="1017.3" y="634.6" width="10.4" height="10.4" fill="none" stroke="#48f000" stroke-width="2.6"/><path d="M1015.5 639.8V632.8H1029.5" fill="none" stroke="#10208a" stroke-width="1.1"/><path d="M1015.5 639.8V646.8H1029.5V632.8" fill="none" stroke="#c01040" stroke-width="1.1"/><path d="M1019.5 639.8h6M1022.5 636.8v6" stroke="#000" stroke-width="1"/><rect x="1017.6" y="648.0" width="14" height="14" fill="#48f000" fill-opacity="0.25"/><rect x="1019.4" y="649.8" width="10.4" height="10.4" fill="none" stroke="#48f000" stroke-width="2.6"/><path d="M1017.6 655.0V648.0H1031.6" fill="none" stroke="#10208a" stroke-width="1.1"/><path d="M1017.6 655.0V662.0H1031.6V648.0" fill="none" stroke="#c01040" stroke-width="1.1"/><rect x="1019.7" y="663.2" width="14" height="14" fill="#48f000" fill-opacity="0.25"/><rect x="1021.5" y="665.0" width="10.4" height="10.4" fill="none" stroke="#48f000" stroke-width="2.6"/><path d="M1019.7 670.2V663.2H1033.7" fill="none" stroke="#10208a" stroke-width="1.1"/><path d="M1019.7 670.2V677.2H1033.7V663.2" fill="none" stroke="#c01040" stroke-width="1.1"/><rect x="1021.8" y="678.4" width="14" height="14" fill="#48f000" fill-opacity="0.25"/><rect x="1023.6" y="680.2" width="10.4" height="10.4" fill="none" stroke="#48f000" stroke-width="2.6"/><path d="M1021.8 685.4V678.4H1035.8" fill="none" stroke="#10208a" stroke-width="1.1"/><path d="M1021.8 685.4V692.4H1035.8V678.4" fill="none" stroke="#c01040" stroke-width="1.1"/><rect x="1023.9" y="693.6" width="14" height="14" fill="#48f000" fill-opacity="0.25"/><rect x="1025.7" y="695.4" width="10.4" height="10.4" fill="none" stroke="#48f000" stroke-width="2.6"/><path d="M1023.9 700.6V693.6H1037.9" fill="none" stroke="#10208a" stroke-width="1.1"/><path d="M1023.9 700.6V707.6H1037.9V693.6" fill="none" stroke="#c01040" stroke-width="1.1"/><rect x="1026.0" y="708.8" width="14" height="14" fill="#48f000" fill-opacity="0.25"/><rect x="1027.8" y="710.6" width="10.4" height="10.4" fill="none" stroke="#48f000" stroke-width="2.6"/><path d="M1026.0 715.8V708.8H1040.0" fill="none" stroke="#10208a" stroke-width="1.1"/><path d="M1026.0 715.8V722.8H1040.0V708.8" fill="none" stroke="#c01040" stroke-width="1.1"/><rect x="1028.1" y="724.0" width="14" height="14" fill="#48f000" fill-opacity="0.25"/><rect x="1029.9" y="725.8" width="10.4" height="10.4" fill="none" stroke="#48f000" stroke-width="2.6"/><path d="M1028.1 731.0V724.0H1042.1" fill="none" stroke="#10208a" stroke-width="1.1"/><path d="M1028.1 731.0V738.0H1042.1V724.0" fill="none" stroke="#c01040" stroke-width="1.1"/><rect x="1030.2" y="739.2" width="14" height="14" fill="#48f000" fill-opacity="0.25"/><rect x="1032.0" y="741.0" width="10.4" height="10.4" fill="none" stroke="#48f000" stroke-width="2.6"/><path d="M1030.2 746.2V739.2H1044.2" fill="none" stroke="#10208a" stroke-width="1.1"/><path d="M1030.2 746.2V753.2H1044.2V739.2" fill="none" stroke="#c01040" stroke-width="1.1"/><rect x="1032.3" y="754.4" width="14" height="14" fill="#48f000" fill-opacity="0.25"/><rect x="1034.1" y="756.2" width="10.4" height="10.4" fill="none" stroke="#48f000" stroke-width="2.6"/><path d="M1032.3 761.4V754.4H1046.3" fill="none" stroke="#10208a" stroke-width="1.1"/><path d="M1032.3 761.4V768.4H1046.3V754.4" fill="none" stroke="#c01040" stroke-width="1.1"/><rect x="1034.4" y="769.6" width="14" height="14" fill="#48f000" fill-opacity="0.25"/><rect x="1036.2" y="771.4" width="10.4" height="10.4" fill="none" stroke="#48f000" stroke-width="2.6"/><path d="M1034.4 776.6V769.6H1048.4" fill="none" stroke="#10208a" stroke-width="1.1"/><path d="M1034.4 776.6V783.6H1048.4V769.6" fill="none" stroke="#c01040" stroke-width="1.1"/><rect x="769.2" y="937.4" width="10.6" height="10.6" fill="none" stroke="#4a14ff" stroke-width="2.4"/><path d="M767.5 942.7V935.7H781.5" fill="none" stroke="#2010b0" stroke-width="1.1"/><path d="M767.5 942.7V949.7H781.5V935.7" fill="none" stroke="#e0103a" stroke-width="1.1"/><rect x="796.1" y="922.3" width="10.6" height="10.6" fill="none" stroke="#4a14ff" stroke-width="2.4"/><path d="M794.4 927.6V920.6H808.4" fill="none" stroke="#2010b0" stroke-width="1.1"/><path d="M794.4 927.6V934.6H808.4V920.6" fill="none" stroke="#e0103a" stroke-width="1.1"/><rect x="823.0" y="907.3" width="10.6" height="10.6" fill="none" stroke="#4a14ff" stroke-width="2.4"/><path d="M821.3 912.6V905.6H835.3" fill="none" stroke="#2010b0" stroke-width="1.1"/><path d="M821.3 912.6V919.6H835.3V905.6" fill="none" stroke="#e0103a" stroke-width="1.1"/><rect x="849.9" y="892.2" width="10.6" height="10.6" fill="none" stroke="#4a14ff" stroke-width="2.4"/><path d="M848.2 897.5V890.5H862.2" fill="none" stroke="#2010b0" stroke-width="1.1"/><path d="M848.2 897.5V904.5H862.2V890.5" fill="none" stroke="#e0103a" stroke-width="1.1"/><rect x="876.8" y="877.1" width="10.6" height="10.6" fill="none" stroke="#4a14ff" stroke-width="2.4"/><path d="M875.1 882.4V875.4H889.1" fill="none" stroke="#2010b0" stroke-width="1.1"/><path d="M875.1 882.4V889.4H889.1V875.4" fill="none" stroke="#e0103a" stroke-width="1.1"/><rect x="903.7" y="862.0" width="10.6" height="10.6" fill="none" stroke="#4a14ff" stroke-width="2.4"/><path d="M902.0 867.3V860.3H916.0" fill="none" stroke="#2010b0" stroke-width="1.1"/><path d="M902.0 867.3V874.3H916.0V860.3" fill="none" stroke="#e0103a" stroke-width="1.1"/><rect x="930.6" y="846.9" width="10.6" height="10.6" fill="none" stroke="#4a14ff" stroke-width="2.4"/><path d="M928.9 852.2V845.2H942.9" fill="none" stroke="#2010b0" stroke-width="1.1"/><path d="M928.9 852.2V859.2H942.9V845.2" fill="none" stroke="#e0103a" stroke-width="1.1"/><rect x="957.5" y="831.8" width="10.6" height="10.6" fill="none" stroke="#4a14ff" stroke-width="2.4"/><path d="M955.8 837.1V830.1H969.8" fill="none" stroke="#2010b0" stroke-width="1.1"/><path d="M955.8 837.1V844.1H969.8V830.1" fill="none" stroke="#e0103a" stroke-width="1.1"/><rect x="984.4" y="816.7" width="10.6" height="10.6" fill="none" stroke="#4a14ff" stroke-width="2.4"/><path d="M982.7 822.0V815.0H996.7" fill="none" stroke="#2010b0" stroke-width="1.1"/><path d="M982.7 822.0V829.0H996.7V815.0" fill="none" stroke="#e0103a" stroke-width="1.1"/><rect x="1011.3" y="801.6" width="10.6" height="10.6" fill="none" stroke="#4a14ff" stroke-width="2.4"/><path d="M1009.6 806.9V799.9H1023.6" fill="none" stroke="#2010b0" stroke-width="1.1"/><path d="M1009.6 806.9V813.9H1023.6V799.9" fill="none" stroke="#e0103a" stroke-width="1.1"/><rect x="1212.7" y="685.9" width="14" height="14" fill="#ffe800" fill-opacity="0.15"/><rect x="1214.5" y="687.7" width="10.4" height="10.4" fill="none" stroke="#ffe800" stroke-width="2.6"/><path d="M1212.7 692.9V685.9H1226.7" fill="none" stroke="#10208a" stroke-width="1.1"/><path d="M1212.7 692.9V699.9H1226.7V685.9" fill="none" stroke="#c01040" stroke-width="1.1"/><path d="M1216.7 692.9h6M1219.7 689.9v6" stroke="#000" stroke-width="1"/><rect x="1195.1" y="695.8" width="14" height="14" fill="#ffe800" fill-opacity="0.15"/><rect x="1196.9" y="697.6" width="10.4" height="10.4" fill="none" stroke="#ffe800" stroke-width="2.6"/><path d="M1195.1 702.8V695.8H1209.1" fill="none" stroke="#10208a" stroke-width="1.1"/><path d="M1195.1 702.8V709.8H1209.1V695.8" fill="none" stroke="#c01040" stroke-width="1.1"/><rect x="1177.5" y="705.7" width="14" height="14" fill="#ffe800" fill-opacity="0.15"/><rect x="1179.3" y="707.5" width="10.4" height="10.4" fill="none" stroke="#ffe800" stroke-width="2.6"/><path d="M1177.5 712.7V705.7H1191.5" fill="none" stroke="#10208a" stroke-width="1.1"/><path d="M1177.5 712.7V719.7H1191.5V705.7" fill="none" stroke="#c01040" stroke-width="1.1"/><rect x="1159.8" y="715.6" width="14" height="14" fill="#ffe800" fill-opacity="0.15"/><rect x="1161.6" y="717.4" width="10.4" height="10.4" fill="none" stroke="#ffe800" stroke-width="2.6"/><path d="M1159.8 722.6V715.6H1173.8" fill="none" stroke="#10208a" stroke-width="1.1"/><path d="M1159.8 722.6V729.6H1173.8V715.6" fill="none" stroke="#c01040" stroke-width="1.1"/><rect x="1142.2" y="725.5" width="14" height="14" fill="#ffe800" fill-opacity="0.15"/><rect x="1144.0" y="727.3" width="10.4" height="10.4" fill="none" stroke="#ffe800" stroke-width="2.6"/><path d="M1142.2 732.5V725.5H1156.2" fill="none" stroke="#10208a" stroke-width="1.1"/><path d="M1142.2 732.5V739.5H1156.2V725.5" fill="none" stroke="#c01040" stroke-width="1.1"/><rect x="1124.6" y="735.4" width="14" height="14" fill="#ffe800" fill-opacity="0.15"/><rect x="1126.4" y="737.2" width="10.4" height="10.4" fill="none" stroke="#ffe800" stroke-width="2.6"/><path d="M1124.6 742.4V735.4H1138.6" fill="none" stroke="#10208a" stroke-width="1.1"/><path d="M1124.6 742.4V749.4H1138.6V735.4" fill="none" stroke="#c01040" stroke-width="1.1"/><rect x="1107.0" y="745.3" width="14" height="14" fill="#ffe800" fill-opacity="0.15"/><rect x="1108.8" y="747.1" width="10.4" height="10.4" fill="none" stroke="#ffe800" stroke-width="2.6"/><path d="M1107.0 752.3V745.3H1121.0" fill="none" stroke="#10208a" stroke-width="1.1"/><path d="M1107.0 752.3V759.3H1121.0V745.3" fill="none" stroke="#c01040" stroke-width="1.1"/><rect x="1089.4" y="755.2" width="14" height="14" fill="#ffe800" fill-opacity="0.15"/><rect x="1091.2" y="757.0" width="10.4" height="10.4" fill="none" stroke="#ffe800" stroke-width="2.6"/><path d="M1089.4 762.2V755.2H1103.4" fill="none" stroke="#10208a" stroke-width="1.1"/><path d="M1089.4 762.2V769.2H1103.4V755.2" fill="none" stroke="#c01040" stroke-width="1.1"/><rect x="1071.7" y="765.1" width="14" height="14" fill="#ffe800" fill-opacity="0.15"/><rect x="1073.5" y="766.9" width="10.4" height="10.4" fill="none" stroke="#ffe800" stroke-width="2.6"/><path d="M1071.7 772.1V765.1H1085.7" fill="none" stroke="#10208a" stroke-width="1.1"/><path d="M1071.7 772.1V779.1H1085.7V765.1" fill="none" stroke="#c01040" stroke-width="1.1"/><rect x="1054.1" y="774.9" width="14" height="14" fill="#ffe800" fill-opacity="0.15"/><rect x="1055.9" y="776.7" width="10.4" height="10.4" fill="none" stroke="#ffe800" stroke-width="2.6"/><path d="M1054.1 781.9V774.9H1068.1" fill="none" stroke="#10208a" stroke-width="1.1"/><path d="M1054.1 781.9V788.9H1068.1V774.9" fill="none" stroke="#c01040" stroke-width="1.1"/><rect x="890.9" y="785.0" width="14" height="14" fill="#58f4f4" fill-opacity="0.45"/><rect x="892.6" y="786.7" width="10.6" height="10.6" fill="none" stroke="#58f4f4" stroke-width="2.4"/><path d="M890.9 792.0V785.0H904.9" fill="none" stroke="#10208a" stroke-width="1.1"/><path d="M890.9 792.0V799.0H904.9V785.0" fill="none" stroke="#e0206a" stroke-width="1.1"/><path d="M894.9 792.0h6M897.9 789.0v6" stroke="#000" stroke-width="1"/><rect x="905.4" y="785.0" width="14" height="14" fill="#58f4f4" fill-opacity="0.45"/><rect x="907.1" y="786.7" width="10.6" height="10.6" fill="none" stroke="#58f4f4" stroke-width="2.4"/><path d="M905.4 792.0V785.0H919.4" fill="none" stroke="#10208a" stroke-width="1.1"/><path d="M905.4 792.0V799.0H919.4V785.0" fill="none" stroke="#e0206a" stroke-width="1.1"/><rect x="920.0" y="785.0" width="14" height="14" fill="#58f4f4" fill-opacity="0.45"/><rect x="921.7" y="786.7" width="10.6" height="10.6" fill="none" stroke="#58f4f4" stroke-width="2.4"/><path d="M920.0 792.0V785.0H934.0" fill="none" stroke="#10208a" stroke-width="1.1"/><path d="M920.0 792.0V799.0H934.0V785.0" fill="none" stroke="#e0206a" stroke-width="1.1"/><rect x="934.6" y="784.9" width="14" height="14" fill="#58f4f4" fill-opacity="0.45"/><rect x="936.3" y="786.6" width="10.6" height="10.6" fill="none" stroke="#58f4f4" stroke-width="2.4"/><path d="M934.6 791.9V784.9H948.6" fill="none" stroke="#10208a" stroke-width="1.1"/><path d="M934.6 791.9V798.9H948.6V784.9" fill="none" stroke="#e0206a" stroke-width="1.1"/><rect x="949.1" y="784.9" width="14" height="14" fill="#58f4f4" fill-opacity="0.45"/><rect x="950.8" y="786.6" width="10.6" height="10.6" fill="none" stroke="#58f4f4" stroke-width="2.4"/><path d="M949.1 791.9V784.9H963.1" fill="none" stroke="#10208a" stroke-width="1.1"/><path d="M949.1 791.9V798.9H963.1V784.9" fill="none" stroke="#e0206a" stroke-width="1.1"/><rect x="963.7" y="784.9" width="14" height="14" fill="#58f4f4" fill-opacity="0.45"/><rect x="965.4" y="786.6" width="10.6" height="10.6" fill="none" stroke="#58f4f4" stroke-width="2.4"/><path d="M963.7 791.9V784.9H977.7" fill="none" stroke="#10208a" stroke-width="1.1"/><path d="M963.7 791.9V798.9H977.7V784.9" fill="none" stroke="#e0206a" stroke-width="1.1"/><rect x="978.2" y="784.9" width="14" height="14" fill="#58f4f4" fill-opacity="0.45"/><rect x="979.9" y="786.6" width="10.6" height="10.6" fill="none" stroke="#58f4f4" stroke-width="2.4"/><path d="M978.2 791.9V784.9H992.2" fill="none" stroke="#10208a" stroke-width="1.1"/><path d="M978.2 791.9V798.9H992.2V784.9" fill="none" stroke="#e0206a" stroke-width="1.1"/><rect x="992.8" y="784.9" width="14" height="14" fill="#58f4f4" fill-opacity="0.45"/><rect x="994.5" y="786.6" width="10.6" height="10.6" fill="none" stroke="#58f4f4" stroke-width="2.4"/><path d="M992.8 791.9V784.9H1006.8" fill="none" stroke="#10208a" stroke-width="1.1"/><path d="M992.8 791.9V798.9H1006.8V784.9" fill="none" stroke="#e0206a" stroke-width="1.1"/><rect x="1007.4" y="784.9" width="14" height="14" fill="#58f4f4" fill-opacity="0.45"/><rect x="1009.1" y="786.6" width="10.6" height="10.6" fill="none" stroke="#58f4f4" stroke-width="2.4"/><path d="M1007.4 791.9V784.9H1021.4" fill="none" stroke="#10208a" stroke-width="1.1"/><path d="M1007.4 791.9V798.9H1021.4V784.9" fill="none" stroke="#e0206a" stroke-width="1.1"/><rect x="1021.9" y="784.8" width="14" height="14" fill="#58f4f4" fill-opacity="0.45"/><rect x="1023.6" y="786.5" width="10.6" height="10.6" fill="none" stroke="#58f4f4" stroke-width="2.4"/><path d="M1021.9 791.8V784.8H1035.9" fill="none" stroke="#10208a" stroke-width="1.1"/><path d="M1021.9 791.8V798.8H1035.9V784.8" fill="none" stroke="#e0206a" stroke-width="1.1"/><rect x="1051.6" y="884.5" width="10.8" height="10.8" fill="none" stroke="#f010e0" stroke-width="2.2"/><path d="M1050.0 889.9V882.9H1064.0" fill="none" stroke="#a010a0" stroke-width="1.1"/><path d="M1050.0 889.9V896.9H1064.0V882.9" fill="none" stroke="#e01060" stroke-width="1.1"/><rect x="1050.3" y="874.7" width="10.8" height="10.8" fill="none" stroke="#f010e0" stroke-width="2.2"/><path d="M1048.7 880.1V873.1H1062.7" fill="none" stroke="#a010a0" stroke-width="1.1"/><path d="M1048.7 880.1V887.1H1062.7V873.1" fill="none" stroke="#e01060" stroke-width="1.1"/><rect x="1048.9" y="864.9" width="10.8" height="10.8" fill="none" stroke="#f010e0" stroke-width="2.2"/><path d="M1047.3 870.3V863.3H1061.3" fill="none" stroke="#a010a0" stroke-width="1.1"/><path d="M1047.3 870.3V877.3H1061.3V863.3" fill="none" stroke="#e01060" stroke-width="1.1"/><rect x="1047.6" y="855.1" width="10.8" height="10.8" fill="none" stroke="#f010e0" stroke-width="2.2"/><path d="M1046.0 860.5V853.5H1060.0" fill="none" stroke="#a010a0" stroke-width="1.1"/><path d="M1046.0 860.5V867.5H1060.0V853.5" fill="none" stroke="#e01060" stroke-width="1.1"/><rect x="1046.2" y="845.3" width="10.8" height="10.8" fill="none" stroke="#f010e0" stroke-width="2.2"/><path d="M1044.6 850.7V843.7H1058.6" fill="none" stroke="#a010a0" stroke-width="1.1"/><path d="M1044.6 850.7V857.7H1058.6V843.7" fill="none" stroke="#e01060" stroke-width="1.1"/><rect x="1044.9" y="835.5" width="10.8" height="10.8" fill="none" stroke="#f010e0" stroke-width="2.2"/><path d="M1043.3 840.9V833.9H1057.3" fill="none" stroke="#a010a0" stroke-width="1.1"/><path d="M1043.3 840.9V847.9H1057.3V833.9" fill="none" stroke="#e01060" stroke-width="1.1"/><rect x="1043.5" y="825.7" width="10.8" height="10.8" fill="none" stroke="#f010e0" stroke-width="2.2"/><path d="M1041.9 831.1V824.1H1055.9" fill="none" stroke="#a010a0" stroke-width="1.1"/><path d="M1041.9 831.1V838.1H1055.9V824.1" fill="none" stroke="#e01060" stroke-width="1.1"/><rect x="1042.2" y="815.8" width="10.8" height="10.8" fill="none" stroke="#f010e0" stroke-width="2.2"/><path d="M1040.6 821.2V814.2H1054.6" fill="none" stroke="#a010a0" stroke-width="1.1"/><path d="M1040.6 821.2V828.2H1054.6V814.2" fill="none" stroke="#e01060" stroke-width="1.1"/><rect x="1040.8" y="806.0" width="10.8" height="10.8" fill="none" stroke="#f010e0" stroke-width="2.2"/><path d="M1039.2 811.4V804.4H1053.2" fill="none" stroke="#a010a0" stroke-width="1.1"/><path d="M1039.2 811.4V818.4H1053.2V804.4" fill="none" stroke="#e01060" stroke-width="1.1"/><rect x="1039.4" y="796.2" width="10.8" height="10.8" fill="none" stroke="#f010e0" stroke-width="2.2"/><path d="M1037.8 801.6V794.6H1051.8" fill="none" stroke="#a010a0" stroke-width="1.1"/><path d="M1037.8 801.6V808.6H1051.8V794.6" fill="none" stroke="#e01060" stroke-width="1.1"/><circle cx="1030.1" cy="800.7" r="7.2" fill="#000" opacity=".16"/><circle cx="1029.6" cy="800.2" r="6.2" fill="#000" opacity=".32"/><circle cx="1028.5" cy="798.7" r="6" fill="url(#ccya)" stroke="#00000055" stroke-width="0.6"/><ellipse cx="1028.5" cy="799.5" rx="0.7" ry="0.95" fill="#801010"/><circle cx="1015.6" cy="800.7" r="7.2" fill="#000" opacity=".16"/><circle cx="1015.1" cy="800.2" r="6.2" fill="#000" opacity=".32"/><circle cx="1014.0" cy="798.7" r="6" fill="url(#ccya)" stroke="#00000055" stroke-width="0.6"/><ellipse cx="1014.0" cy="799.5" rx="0.7" ry="0.95" fill="#801010"/><circle cx="1001.2" cy="800.7" r="7.2" fill="#000" opacity=".16"/><circle cx="1000.7" cy="800.2" r="6.2" fill="#000" opacity=".32"/><circle cx="999.6" cy="798.7" r="6" fill="url(#ccya)" stroke="#00000055" stroke-width="0.6"/><ellipse cx="999.6" cy="799.5" rx="0.7" ry="0.95" fill="#801010"/><circle cx="986.7" cy="800.7" r="7.2" fill="#000" opacity=".16"/><circle cx="986.2" cy="800.2" r="6.2" fill="#000" opacity=".32"/><circle cx="985.1" cy="798.7" r="6" fill="url(#ccya)" stroke="#00000055" stroke-width="0.6"/><ellipse cx="985.1" cy="799.5" rx="0.7" ry="0.95" fill="#801010"/><circle cx="972.3" cy="800.7" r="7.2" fill="#000" opacity=".16"/><circle cx="971.8" cy="800.2" r="6.2" fill="#000" opacity=".32"/><circle cx="970.7" cy="798.7" r="6" fill="url(#ccya)" stroke="#00000055" stroke-width="0.6"/><ellipse cx="970.7" cy="799.5" rx="0.7" ry="0.95" fill="#801010"/><circle cx="957.8" cy="800.7" r="7.2" fill="#000" opacity=".16"/><circle cx="957.3" cy="800.2" r="6.2" fill="#000" opacity=".32"/><circle cx="956.2" cy="798.7" r="6" fill="url(#ccya)" stroke="#00000055" stroke-width="0.6"/><ellipse cx="956.2" cy="799.5" rx="0.7" ry="0.95" fill="#801010"/><circle cx="941.7" cy="800.7" r="7.2" fill="#000" opacity=".16"/><circle cx="941.2" cy="800.2" r="6.2" fill="#000" opacity=".32"/><circle cx="940.1" cy="798.7" r="6" fill="url(#ccya)" stroke="#00000055" stroke-width="0.6"/><ellipse cx="940.1" cy="799.5" rx="0.7" ry="0.95" fill="#801010"/><circle cx="927.7" cy="800.7" r="7.2" fill="#000" opacity=".16"/><circle cx="927.2" cy="800.2" r="6.2" fill="#000" opacity=".32"/><circle cx="926.1" cy="798.7" r="6" fill="url(#ccya)" stroke="#00000055" stroke-width="0.6"/><ellipse cx="926.1" cy="799.5" rx="0.7" ry="0.95" fill="#801010"/><circle cx="913.8" cy="800.7" r="7.2" fill="#000" opacity=".16"/><circle cx="913.3" cy="800.2" r="6.2" fill="#000" opacity=".32"/><circle cx="912.2" cy="798.7" r="6" fill="url(#ccya)" stroke="#00000055" stroke-width="0.6"/><ellipse cx="912.2" cy="799.5" rx="0.7" ry="0.95" fill="#801010"/><circle cx="898.9" cy="800.7" r="7.2" fill="#000" opacity=".16"/><circle cx="898.4" cy="800.2" r="6.2" fill="#000" opacity=".32"/><circle cx="897.3" cy="798.7" r="6" fill="url(#ccya)" stroke="#00000055" stroke-width="0.6"/><ellipse cx="897.3" cy="799.5" rx="0.7" ry="0.95" fill="#801010"/><circle cx="1063.8" cy="790.4" r="7.2" fill="#000" opacity=".16"/><circle cx="1063.3" cy="789.9" r="6.2" fill="#000" opacity=".32"/><circle cx="1062.2" cy="788.4" r="6" fill="url(#cyel)" stroke="#00000055" stroke-width="0.6"/><ellipse cx="1062.2" cy="789.2" rx="0.7" ry="0.95" fill="#102080"/><circle cx="1080.1" cy="779.4" r="7.2" fill="#000" opacity=".16"/><circle cx="1079.6" cy="778.9" r="6.2" fill="#000" opacity=".32"/><circle cx="1078.5" cy="777.4" r="6" fill="url(#cyel)" stroke="#00000055" stroke-width="0.6"/><ellipse cx="1078.5" cy="778.2" rx="0.7" ry="0.95" fill="#102080"/><circle cx="1100.0" cy="769.9" r="7.2" fill="#000" opacity=".16"/><circle cx="1099.5" cy="769.4" r="6.2" fill="#000" opacity=".32"/><circle cx="1098.4" cy="767.9" r="6" fill="url(#cyel)" stroke="#00000055" stroke-width="0.6"/><ellipse cx="1098.4" cy="768.7" rx="0.7" ry="0.95" fill="#102080"/><circle cx="1118.2" cy="759.5" r="7.2" fill="#000" opacity=".16"/><circle cx="1117.7" cy="759.0" r="6.2" fill="#000" opacity=".32"/><circle cx="1116.6" cy="757.5" r="6" fill="url(#cyel)" stroke="#00000055" stroke-width="0.6"/><ellipse cx="1116.6" cy="758.3" rx="0.7" ry="0.95" fill="#102080"/><circle cx="1137.7" cy="749.5" r="7.2" fill="#000" opacity=".16"/><circle cx="1137.2" cy="749.0" r="6.2" fill="#000" opacity=".32"/><circle cx="1136.1" cy="747.5" r="6" fill="url(#cyel)" stroke="#00000055" stroke-width="0.6"/><ellipse cx="1136.1" cy="748.3" rx="0.7" ry="0.95" fill="#102080"/><circle cx="1155.1" cy="739.1" r="7.2" fill="#000" opacity=".16"/><circle cx="1154.6" cy="738.6" r="6.2" fill="#000" opacity=".32"/><circle cx="1153.5" cy="737.1" r="6" fill="url(#cyel)" stroke="#00000055" stroke-width="0.6"/><ellipse cx="1153.5" cy="737.9" rx="0.7" ry="0.95" fill="#102080"/><circle cx="1170.8" cy="731.5" r="7.2" fill="#000" opacity=".16"/><circle cx="1170.3" cy="731.0" r="6.2" fill="#000" opacity=".32"/><circle cx="1169.2" cy="729.5" r="6" fill="url(#cyel)" stroke="#00000055" stroke-width="0.6"/><ellipse cx="1169.2" cy="730.3" rx="0.7" ry="0.95" fill="#102080"/><circle cx="1191.2" cy="721.2" r="7.2" fill="#000" opacity=".16"/><circle cx="1190.7" cy="720.7" r="6.2" fill="#000" opacity=".32"/><circle cx="1189.6" cy="719.2" r="6" fill="url(#cyel)" stroke="#00000055" stroke-width="0.6"/><ellipse cx="1189.6" cy="720.0" rx="0.7" ry="0.95" fill="#102080"/><circle cx="1211.1" cy="710.8" r="7.2" fill="#000" opacity=".16"/><circle cx="1210.6" cy="710.3" r="6.2" fill="#000" opacity=".32"/><circle cx="1209.5" cy="708.8" r="6" fill="url(#cyel)" stroke="#00000055" stroke-width="0.6"/><ellipse cx="1209.5" cy="709.6" rx="0.7" ry="0.95" fill="#102080"/><circle cx="1230.0" cy="699.1" r="7.2" fill="#000" opacity=".16"/><circle cx="1229.5" cy="698.6" r="6.2" fill="#000" opacity=".32"/><circle cx="1228.4" cy="697.1" r="6" fill="url(#cyel)" stroke="#00000055" stroke-width="0.6"/><ellipse cx="1228.4" cy="697.9" rx="0.7" ry="0.95" fill="#102080"/><circle cx="1098.6" cy="798.5" r="7.2" fill="#000" opacity=".16"/><circle cx="1098.1" cy="798.0" r="6.2" fill="#000" opacity=".32"/><circle cx="1097.0" cy="796.5" r="6" fill="url(#cred)" stroke="#00000055" stroke-width="0.6"/><circle cx="1149.6" cy="798.0" r="7.2" fill="#000" opacity=".16"/><circle cx="1149.1" cy="797.5" r="6.2" fill="#000" opacity=".32"/><circle cx="1148.0" cy="796.0" r="6" fill="url(#cred)" stroke="#00000055" stroke-width="0.6"/><circle cx="1200.6" cy="797.4" r="7.2" fill="#000" opacity=".16"/><circle cx="1200.1" cy="796.9" r="6.2" fill="#000" opacity=".32"/><circle cx="1199.0" cy="795.4" r="6" fill="url(#cred)" stroke="#00000055" stroke-width="0.6"/><circle cx="1252.6" cy="796.6" r="7.2" fill="#000" opacity=".16"/><circle cx="1252.1" cy="796.1" r="6.2" fill="#000" opacity=".32"/><circle cx="1251.0" cy="794.6" r="6" fill="url(#cred)" stroke="#00000055" stroke-width="0.6"/><circle cx="1312.0" cy="796.4" r="7.2" fill="#000" opacity=".16"/><circle cx="1311.5" cy="795.9" r="6.2" fill="#000" opacity=".32"/><circle cx="1310.4" cy="794.4" r="6" fill="url(#cred)" stroke="#00000055" stroke-width="0.6"/><circle cx="1368.1" cy="796.2" r="7.2" fill="#000" opacity=".16"/><circle cx="1367.6" cy="795.7" r="6.2" fill="#000" opacity=".32"/><circle cx="1366.5" cy="794.2" r="6" fill="url(#cred)" stroke="#00000055" stroke-width="0.6"/><circle cx="1422.2" cy="796.2" r="7.2" fill="#000" opacity=".16"/><circle cx="1421.7" cy="795.7" r="6.2" fill="#000" opacity=".32"/><circle cx="1420.6" cy="794.2" r="6" fill="url(#cred)" stroke="#00000055" stroke-width="0.6"/><circle cx="1479.6" cy="796.2" r="7.2" fill="#000" opacity=".16"/><circle cx="1479.1" cy="795.7" r="6.2" fill="#000" opacity=".32"/><circle cx="1478.0" cy="794.2" r="6" fill="url(#cred)" stroke="#00000055" stroke-width="0.6"/><circle cx="1529.6" cy="796.0" r="7.2" fill="#000" opacity=".16"/><circle cx="1529.1" cy="795.5" r="6.2" fill="#000" opacity=".32"/><circle cx="1528.0" cy="794.0" r="6" fill="url(#cred)" stroke="#00000055" stroke-width="0.6"/><circle cx="1585.8" cy="795.6" r="7.2" fill="#000" opacity=".16"/><circle cx="1585.3" cy="795.1" r="6.2" fill="#000" opacity=".32"/><circle cx="1584.2" cy="793.6" r="6" fill="url(#cred)" stroke="#00000055" stroke-width="0.6"/><circle cx="1043.1" cy="783.0" r="7.2" fill="#000" opacity=".16"/><circle cx="1042.6" cy="782.5" r="6.2" fill="#000" opacity=".32"/><circle cx="1041.5" cy="781.0" r="6" fill="url(#cgrn)" stroke="#00000055" stroke-width="0.6"/><ellipse cx="1041.5" cy="781.8" rx="0.7" ry="0.95" fill="#000"/><circle cx="1041.4" cy="769.0" r="7.2" fill="#000" opacity=".16"/><circle cx="1040.9" cy="768.5" r="6.2" fill="#000" opacity=".32"/><circle cx="1039.8" cy="767.0" r="6" fill="url(#cgrn)" stroke="#00000055" stroke-width="0.6"/><ellipse cx="1039.8" cy="767.8" rx="0.7" ry="0.95" fill="#000"/><circle cx="1039.4" cy="755.0" r="7.2" fill="#000" opacity=".16"/><circle cx="1038.9" cy="754.5" r="6.2" fill="#000" opacity=".32"/><circle cx="1037.8" cy="753.0" r="6" fill="url(#cgrn)" stroke="#00000055" stroke-width="0.6"/><ellipse cx="1037.8" cy="753.8" rx="0.7" ry="0.95" fill="#000"/><circle cx="1037.6" cy="740.0" r="7.2" fill="#000" opacity=".16"/><circle cx="1037.1" cy="739.5" r="6.2" fill="#000" opacity=".32"/><circle cx="1036.0" cy="738.0" r="6" fill="url(#cgrn)" stroke="#00000055" stroke-width="0.6"/><ellipse cx="1036.0" cy="738.8" rx="0.7" ry="0.95" fill="#000"/><circle cx="1036.0" cy="724.2" r="7.2" fill="#000" opacity=".16"/><circle cx="1035.5" cy="723.7" r="6.2" fill="#000" opacity=".32"/><circle cx="1034.4" cy="722.2" r="6" fill="url(#cgrn)" stroke="#00000055" stroke-width="0.6"/><ellipse cx="1034.4" cy="723.0" rx="0.7" ry="0.95" fill="#000"/><circle cx="1034.7" cy="708.7" r="7.2" fill="#000" opacity=".16"/><circle cx="1034.2" cy="708.2" r="6.2" fill="#000" opacity=".32"/><circle cx="1033.1" cy="706.7" r="6" fill="url(#cgrn)" stroke="#00000055" stroke-width="0.6"/><ellipse cx="1033.1" cy="707.5" rx="0.7" ry="0.95" fill="#000"/><circle cx="1034.4" cy="693.7" r="7.2" fill="#000" opacity=".16"/><circle cx="1033.9" cy="693.2" r="6.2" fill="#000" opacity=".32"/><circle cx="1032.8" cy="691.7" r="6" fill="url(#cgrn)" stroke="#00000055" stroke-width="0.6"/><ellipse cx="1032.8" cy="692.5" rx="0.7" ry="0.95" fill="#000"/><circle cx="1033.6" cy="678.1" r="7.2" fill="#000" opacity=".16"/><circle cx="1033.1" cy="677.6" r="6.2" fill="#000" opacity=".32"/><circle cx="1032.0" cy="676.1" r="6" fill="url(#cgrn)" stroke="#00000055" stroke-width="0.6"/><ellipse cx="1032.0" cy="676.9" rx="0.7" ry="0.95" fill="#000"/><circle cx="1033.6" cy="661.4" r="7.2" fill="#000" opacity=".16"/><circle cx="1033.1" cy="660.9" r="6.2" fill="#000" opacity=".32"/><circle cx="1032.0" cy="659.4" r="6" fill="url(#cgrn)" stroke="#00000055" stroke-width="0.6"/><ellipse cx="1032.0" cy="660.2" rx="0.7" ry="0.95" fill="#000"/><circle cx="1033.8" cy="644.2" r="7.2" fill="#000" opacity=".16"/><circle cx="1033.3" cy="643.7" r="6.2" fill="#000" opacity=".32"/><circle cx="1032.2" cy="642.2" r="6" fill="url(#cgrn)" stroke="#00000055" stroke-width="0.6"/><ellipse cx="1032.2" cy="643.0" rx="0.7" ry="0.95" fill="#000"/><circle cx="1016.4" cy="813.2" r="7.2" fill="#000" opacity=".16"/><circle cx="1015.9" cy="812.7" r="6.2" fill="#000" opacity=".32"/><circle cx="1014.8" cy="811.2" r="6" fill="url(#cblu)" stroke="#00000055" stroke-width="0.6"/><circle cx="989.1" cy="827.2" r="7.2" fill="#000" opacity=".16"/><circle cx="988.6" cy="826.7" r="6.2" fill="#000" opacity=".32"/><circle cx="987.5" cy="825.2" r="6" fill="url(#cblu)" stroke="#00000055" stroke-width="0.6"/><circle cx="961.5" cy="844.1" r="7.2" fill="#000" opacity=".16"/><circle cx="961.0" cy="843.6" r="6.2" fill="#000" opacity=".32"/><circle cx="959.9" cy="842.1" r="6" fill="url(#cblu)" stroke="#00000055" stroke-width="0.6"/><circle cx="934.5" cy="857.8" r="7.2" fill="#000" opacity=".16"/><circle cx="934.0" cy="857.3" r="6.2" fill="#000" opacity=".32"/><circle cx="932.9" cy="855.8" r="6" fill="url(#cblu)" stroke="#00000055" stroke-width="0.6"/><circle cx="903.7" cy="874.6" r="7.2" fill="#000" opacity=".16"/><circle cx="903.2" cy="874.1" r="6.2" fill="#000" opacity=".32"/><circle cx="902.1" cy="872.6" r="6" fill="url(#cblu)" stroke="#00000055" stroke-width="0.6"/><circle cx="878.9" cy="887.9" r="7.2" fill="#000" opacity=".16"/><circle cx="878.4" cy="887.4" r="6.2" fill="#000" opacity=".32"/><circle cx="877.3" cy="885.9" r="6" fill="url(#cblu)" stroke="#00000055" stroke-width="0.6"/><circle cx="856.7" cy="899.9" r="7.2" fill="#000" opacity=".16"/><circle cx="856.2" cy="899.4" r="6.2" fill="#000" opacity=".32"/><circle cx="855.1" cy="897.9" r="6" fill="url(#cblu)" stroke="#00000055" stroke-width="0.6"/><circle cx="827.8" cy="915.8" r="7.2" fill="#000" opacity=".16"/><circle cx="827.3" cy="915.3" r="6.2" fill="#000" opacity=".32"/><circle cx="826.2" cy="913.8" r="6" fill="url(#cblu)" stroke="#00000055" stroke-width="0.6"/><circle cx="802.1" cy="929.5" r="7.2" fill="#000" opacity=".16"/><circle cx="801.6" cy="929.0" r="6.2" fill="#000" opacity=".32"/><circle cx="800.5" cy="927.5" r="6" fill="url(#cblu)" stroke="#00000055" stroke-width="0.6"/><circle cx="774.8" cy="945.2" r="7.2" fill="#000" opacity=".16"/><circle cx="774.3" cy="944.7" r="6.2" fill="#000" opacity=".32"/><circle cx="773.2" cy="943.2" r="6" fill="url(#cblu)" stroke="#00000055" stroke-width="0.6"/><circle cx="1046.1" cy="809.0" r="7.2" fill="#000" opacity=".16"/><circle cx="1045.6" cy="808.5" r="6.2" fill="#000" opacity=".32"/><circle cx="1044.5" cy="807.0" r="6" fill="url(#cmag)" stroke="#00000055" stroke-width="0.6"/><ellipse cx="1044.5" cy="807.8" rx="0.7" ry="0.95" fill="#300030"/><circle cx="1048.1" cy="818.0" r="7.2" fill="#000" opacity=".16"/><circle cx="1047.6" cy="817.5" r="6.2" fill="#000" opacity=".32"/><circle cx="1046.5" cy="816.0" r="6" fill="url(#cmag)" stroke="#00000055" stroke-width="0.6"/><ellipse cx="1046.5" cy="816.8" rx="0.7" ry="0.95" fill="#300030"/><circle cx="1048.1" cy="828.0" r="7.2" fill="#000" opacity=".16"/><circle cx="1047.6" cy="827.5" r="6.2" fill="#000" opacity=".32"/><circle cx="1046.5" cy="826.0" r="6" fill="url(#cmag)" stroke="#00000055" stroke-width="0.6"/><ellipse cx="1046.5" cy="826.8" rx="0.7" ry="0.95" fill="#300030"/><circle cx="1050.6" cy="838.0" r="7.2" fill="#000" opacity=".16"/><circle cx="1050.1" cy="837.5" r="6.2" fill="#000" opacity=".32"/><circle cx="1049.0" cy="836.0" r="6" fill="url(#cmag)" stroke="#00000055" stroke-width="0.6"/><ellipse cx="1049.0" cy="836.8" rx="0.7" ry="0.95" fill="#300030"/><circle cx="1049.1" cy="848.0" r="7.2" fill="#000" opacity=".16"/><circle cx="1048.6" cy="847.5" r="6.2" fill="#000" opacity=".32"/><circle cx="1047.5" cy="846.0" r="6" fill="url(#cmag)" stroke="#00000055" stroke-width="0.6"/><ellipse cx="1047.5" cy="846.8" rx="0.7" ry="0.95" fill="#300030"/><circle cx="1052.1" cy="858.5" r="7.2" fill="#000" opacity=".16"/><circle cx="1051.6" cy="858.0" r="6.2" fill="#000" opacity=".32"/><circle cx="1050.5" cy="856.5" r="6" fill="url(#cmag)" stroke="#00000055" stroke-width="0.6"/><ellipse cx="1050.5" cy="857.3" rx="0.7" ry="0.95" fill="#300030"/><circle cx="1049.6" cy="868.0" r="7.2" fill="#000" opacity=".16"/><circle cx="1049.1" cy="867.5" r="6.2" fill="#000" opacity=".32"/><circle cx="1048.0" cy="866.0" r="6" fill="url(#cmag)" stroke="#00000055" stroke-width="0.6"/><ellipse cx="1048.0" cy="866.8" rx="0.7" ry="0.95" fill="#300030"/><circle cx="1053.1" cy="877.0" r="7.2" fill="#000" opacity=".16"/><circle cx="1052.6" cy="876.5" r="6.2" fill="#000" opacity=".32"/><circle cx="1051.5" cy="875.0" r="6" fill="url(#cmag)" stroke="#00000055" stroke-width="0.6"/><ellipse cx="1051.5" cy="875.8" rx="0.7" ry="0.95" fill="#300030"/><circle cx="1048.1" cy="886.0" r="7.2" fill="#000" opacity=".16"/><circle cx="1047.6" cy="885.5" r="6.2" fill="#000" opacity=".32"/><circle cx="1046.5" cy="884.0" r="6" fill="url(#cmag)" stroke="#00000055" stroke-width="0.6"/><ellipse cx="1046.5" cy="884.8" rx="0.7" ry="0.95" fill="#300030"/><circle cx="1054.1" cy="892.5" r="7.2" fill="#000" opacity=".16"/><circle cx="1053.6" cy="892.0" r="6.2" fill="#000" opacity=".32"/><circle cx="1052.5" cy="890.5" r="6" fill="url(#cmag)" stroke="#00000055" stroke-width="0.6"/><ellipse cx="1052.5" cy="891.3" rx="0.7" ry="0.95" fill="#300030"/><circle cx="1136.3" cy="703.3" r="5.9" fill="#000" opacity=".16"/><circle cx="1135.8" cy="702.8" r="4.9" fill="#000" opacity=".32"/><circle cx="1134.7" cy="701.3" r="4.7" fill="url(#bw)" stroke="#1a1a1a" stroke-width="0.9"/><circle cx="1166.3" cy="702.3" r="5.9" fill="#000" opacity=".16"/><circle cx="1165.8" cy="701.8" r="4.9" fill="#000" opacity=".32"/><circle cx="1164.7" cy="700.3" r="4.7" fill="url(#bw)" stroke="#1a1a1a" stroke-width="0.9"/><circle cx="1196.3" cy="689.5" r="5.9" fill="#000" opacity=".16"/><circle cx="1195.8" cy="689.0" r="4.9" fill="#000" opacity=".32"/><circle cx="1194.7" cy="687.5" r="4.7" fill="url(#bw)" stroke="#1a1a1a" stroke-width="0.9"/><circle cx="1211.3" cy="693.3" r="5.9" fill="#000" opacity=".16"/><circle cx="1210.8" cy="692.8" r="4.9" fill="#000" opacity=".32"/><circle cx="1209.7" cy="691.3" r="4.7" fill="url(#bw)" stroke="#1a1a1a" stroke-width="0.9"/><circle cx="1246.6" cy="702.0" r="5.9" fill="#000" opacity=".16"/><circle cx="1246.1" cy="701.5" r="4.9" fill="#000" opacity=".32"/><circle cx="1245.0" cy="700.0" r="4.7" fill="url(#bw)" stroke="#1a1a1a" stroke-width="0.9"/><circle cx="1243.3" cy="706.7" r="5.9" fill="#000" opacity=".16"/><circle cx="1242.8" cy="706.2" r="4.9" fill="#000" opacity=".32"/><circle cx="1241.7" cy="704.7" r="4.7" fill="url(#bw)" stroke="#1a1a1a" stroke-width="0.9"/><circle cx="1265.3" cy="708.7" r="5.9" fill="#000" opacity=".16"/><circle cx="1264.8" cy="708.2" r="4.9" fill="#000" opacity=".32"/><circle cx="1263.7" cy="706.7" r="4.7" fill="url(#bw)" stroke="#1a1a1a" stroke-width="0.9"/><circle cx="1303.3" cy="722.5" r="5.9" fill="#000" opacity=".16"/><circle cx="1302.8" cy="722.0" r="4.9" fill="#000" opacity=".32"/><circle cx="1301.7" cy="720.5" r="4.7" fill="url(#bw)" stroke="#1a1a1a" stroke-width="0.9"/><circle cx="1309.6" cy="719.5" r="5.9" fill="#000" opacity=".16"/><circle cx="1309.1" cy="719.0" r="4.9" fill="#000" opacity=".32"/><circle cx="1308.0" cy="717.5" r="4.7" fill="url(#bw)" stroke="#1a1a1a" stroke-width="0.9"/><circle cx="1319.1" cy="722.5" r="5.9" fill="#000" opacity=".16"/><circle cx="1318.6" cy="722.0" r="4.9" fill="#000" opacity=".32"/><circle cx="1317.5" cy="720.5" r="4.7" fill="url(#bw)" stroke="#1a1a1a" stroke-width="0.9"/><circle cx="1339.1" cy="742.3" r="5.9" fill="#000" opacity=".16"/><circle cx="1338.6" cy="741.8" r="4.9" fill="#000" opacity=".32"/><circle cx="1337.5" cy="740.3" r="4.7" fill="url(#bw)" stroke="#1a1a1a" stroke-width="0.9"/><circle cx="1371.6" cy="737.0" r="5.9" fill="#000" opacity=".16"/><circle cx="1371.1" cy="736.5" r="4.9" fill="#000" opacity=".32"/><circle cx="1370.0" cy="735.0" r="4.7" fill="url(#bw)" stroke="#1a1a1a" stroke-width="0.9"/><circle cx="1375.4" cy="738.3" r="5.9" fill="#000" opacity=".16"/><circle cx="1374.9" cy="737.8" r="4.9" fill="#000" opacity=".32"/><circle cx="1373.8" cy="736.3" r="4.7" fill="url(#bw)" stroke="#1a1a1a" stroke-width="0.9"/><circle cx="1175.4" cy="757.3" r="5.9" fill="#000" opacity=".16"/><circle cx="1174.9" cy="756.8" r="4.9" fill="#000" opacity=".32"/><circle cx="1173.8" cy="755.3" r="4.7" fill="url(#bw)" stroke="#1a1a1a" stroke-width="0.9"/><circle cx="1182.4" cy="771.5" r="5.9" fill="#000" opacity=".16"/><circle cx="1181.9" cy="771.0" r="4.9" fill="#000" opacity=".32"/><circle cx="1180.8" cy="769.5" r="4.7" fill="url(#bw)" stroke="#1a1a1a" stroke-width="0.9"/><circle cx="1149.6" cy="748.3" r="5.9" fill="#000" opacity=".16"/><circle cx="1149.1" cy="747.8" r="4.9" fill="#000" opacity=".32"/><circle cx="1148.0" cy="746.3" r="4.7" fill="url(#bw)" stroke="#1a1a1a" stroke-width="0.9"/><circle cx="1083.3" cy="766.5" r="5.9" fill="#000" opacity=".16"/><circle cx="1082.8" cy="766.0" r="4.9" fill="#000" opacity=".32"/><circle cx="1081.7" cy="764.5" r="4.7" fill="url(#bw)" stroke="#1a1a1a" stroke-width="0.9"/><circle cx="1158.3" cy="782.3" r="5.9" fill="#000" opacity=".16"/><circle cx="1157.8" cy="781.8" r="4.9" fill="#000" opacity=".32"/><circle cx="1156.7" cy="780.3" r="4.7" fill="url(#bw)" stroke="#1a1a1a" stroke-width="0.9"/><circle cx="1141.3" cy="786.5" r="5.9" fill="#000" opacity=".16"/><circle cx="1140.8" cy="786.0" r="4.9" fill="#000" opacity=".32"/><circle cx="1139.7" cy="784.5" r="4.7" fill="url(#bw)" stroke="#1a1a1a" stroke-width="0.9"/><circle cx="1096.3" cy="791.5" r="5.9" fill="#000" opacity=".16"/><circle cx="1095.8" cy="791.0" r="4.9" fill="#000" opacity=".32"/><circle cx="1094.7" cy="789.5" r="4.7" fill="url(#bw)" stroke="#1a1a1a" stroke-width="0.9"/><circle cx="1076.6" cy="787.3" r="5.9" fill="#000" opacity=".16"/><circle cx="1076.1" cy="786.8" r="4.9" fill="#000" opacity=".32"/><circle cx="1075.0" cy="785.3" r="4.7" fill="url(#bw)" stroke="#1a1a1a" stroke-width="0.9"/><circle cx="1078.6" cy="792.0" r="5.9" fill="#000" opacity=".16"/><circle cx="1078.1" cy="791.5" r="4.9" fill="#000" opacity=".32"/><circle cx="1077.0" cy="790.0" r="4.7" fill="url(#bw)" stroke="#1a1a1a" stroke-width="0.9"/><circle cx="1204.6" cy="777.0" r="5.9" fill="#000" opacity=".16"/><circle cx="1204.1" cy="776.5" r="4.9" fill="#000" opacity=".32"/><circle cx="1203.0" cy="775.0" r="4.7" fill="url(#bw)" stroke="#1a1a1a" stroke-width="0.9"/><circle cx="1211.9" cy="775.7" r="5.9" fill="#000" opacity=".16"/><circle cx="1211.4" cy="775.2" r="4.9" fill="#000" opacity=".32"/><circle cx="1210.3" cy="773.7" r="4.7" fill="url(#bw)" stroke="#1a1a1a" stroke-width="0.9"/><circle cx="1220.8" cy="775.7" r="5.9" fill="#000" opacity=".16"/><circle cx="1220.3" cy="775.2" r="4.9" fill="#000" opacity=".32"/><circle cx="1219.2" cy="773.7" r="4.7" fill="url(#bw)" stroke="#1a1a1a" stroke-width="0.9"/><circle cx="1226.3" cy="772.5" r="5.9" fill="#000" opacity=".16"/><circle cx="1225.8" cy="772.0" r="4.9" fill="#000" opacity=".32"/><circle cx="1224.7" cy="770.5" r="4.7" fill="url(#bw)" stroke="#1a1a1a" stroke-width="0.9"/><circle cx="1234.9" cy="772.8" r="5.9" fill="#000" opacity=".16"/><circle cx="1234.4" cy="772.3" r="4.9" fill="#000" opacity=".32"/><circle cx="1233.3" cy="770.8" r="4.7" fill="url(#bw)" stroke="#1a1a1a" stroke-width="0.9"/><circle cx="1248.3" cy="764.5" r="5.9" fill="#000" opacity=".16"/><circle cx="1247.8" cy="764.0" r="4.9" fill="#000" opacity=".32"/><circle cx="1246.7" cy="762.5" r="4.7" fill="url(#bw)" stroke="#1a1a1a" stroke-width="0.9"/><circle cx="1243.3" cy="776.7" r="5.9" fill="#000" opacity=".16"/><circle cx="1242.8" cy="776.2" r="4.9" fill="#000" opacity=".32"/><circle cx="1241.7" cy="774.7" r="4.7" fill="url(#bw)" stroke="#1a1a1a" stroke-width="0.9"/><circle cx="1266.6" cy="777.3" r="5.9" fill="#000" opacity=".16"/><circle cx="1266.1" cy="776.8" r="4.9" fill="#000" opacity=".32"/><circle cx="1265.0" cy="775.3" r="4.7" fill="url(#bw)" stroke="#1a1a1a" stroke-width="0.9"/><circle cx="1275.3" cy="769.0" r="5.9" fill="#000" opacity=".16"/><circle cx="1274.8" cy="768.5" r="4.9" fill="#000" opacity=".32"/><circle cx="1273.7" cy="767.0" r="4.7" fill="url(#bw)" stroke="#1a1a1a" stroke-width="0.9"/><circle cx="1279.9" cy="771.7" r="5.9" fill="#000" opacity=".16"/><circle cx="1279.4" cy="771.2" r="4.9" fill="#000" opacity=".32"/><circle cx="1278.3" cy="769.7" r="4.7" fill="url(#bw)" stroke="#1a1a1a" stroke-width="0.9"/><circle cx="1299.4" cy="758.7" r="5.9" fill="#000" opacity=".16"/><circle cx="1298.9" cy="758.2" r="4.9" fill="#000" opacity=".32"/><circle cx="1297.8" cy="756.7" r="4.7" fill="url(#bw)" stroke="#1a1a1a" stroke-width="0.9"/><circle cx="1327.4" cy="757.3" r="5.9" fill="#000" opacity=".16"/><circle cx="1326.9" cy="756.8" r="4.9" fill="#000" opacity=".32"/><circle cx="1325.8" cy="755.3" r="4.7" fill="url(#bw)" stroke="#1a1a1a" stroke-width="0.9"/><circle cx="1330.3" cy="767.3" r="5.9" fill="#000" opacity=".16"/><circle cx="1329.8" cy="766.8" r="4.9" fill="#000" opacity=".32"/><circle cx="1328.7" cy="765.3" r="4.7" fill="url(#bw)" stroke="#1a1a1a" stroke-width="0.9"/><circle cx="1343.3" cy="766.5" r="5.9" fill="#000" opacity=".16"/><circle cx="1342.8" cy="766.0" r="4.9" fill="#000" opacity=".32"/><circle cx="1341.7" cy="764.5" r="4.7" fill="url(#bw)" stroke="#1a1a1a" stroke-width="0.9"/><circle cx="1292.1" cy="788.7" r="5.9" fill="#000" opacity=".16"/><circle cx="1291.6" cy="788.2" r="4.9" fill="#000" opacity=".32"/><circle cx="1290.5" cy="786.7" r="4.7" fill="url(#bw)" stroke="#1a1a1a" stroke-width="0.9"/><circle cx="1234.4" cy="799.2" r="5.9" fill="#000" opacity=".16"/><circle cx="1233.9" cy="798.7" r="4.9" fill="#000" opacity=".32"/><circle cx="1232.8" cy="797.2" r="4.7" fill="url(#bw)" stroke="#1a1a1a" stroke-width="0.9"/><circle cx="1104.6" cy="819.5" r="5.9" fill="#000" opacity=".16"/><circle cx="1104.1" cy="819.0" r="4.9" fill="#000" opacity=".32"/><circle cx="1103.0" cy="817.5" r="4.7" fill="url(#bw)" stroke="#1a1a1a" stroke-width="0.9"/><circle cx="1226.9" cy="830.3" r="5.9" fill="#000" opacity=".16"/><circle cx="1226.4" cy="829.8" r="4.9" fill="#000" opacity=".32"/><circle cx="1225.3" cy="828.3" r="4.7" fill="url(#bw)" stroke="#1a1a1a" stroke-width="0.9"/><circle cx="1220.3" cy="839.5" r="5.9" fill="#000" opacity=".16"/><circle cx="1219.8" cy="839.0" r="4.9" fill="#000" opacity=".32"/><circle cx="1218.7" cy="837.5" r="4.7" fill="url(#bw)" stroke="#1a1a1a" stroke-width="0.9"/><circle cx="1277.4" cy="844.5" r="5.9" fill="#000" opacity=".16"/><circle cx="1276.9" cy="844.0" r="4.9" fill="#000" opacity=".32"/><circle cx="1275.8" cy="842.5" r="4.7" fill="url(#bw)" stroke="#1a1a1a" stroke-width="0.9"/><circle cx="1067.4" cy="843.3" r="5.9" fill="#000" opacity=".16"/><circle cx="1066.9" cy="842.8" r="4.9" fill="#000" opacity=".32"/><circle cx="1065.8" cy="841.3" r="4.7" fill="url(#bw)" stroke="#1a1a1a" stroke-width="0.9"/><circle cx="1044.1" cy="724.5" r="5.9" fill="#000" opacity=".16"/><circle cx="1043.6" cy="724.0" r="4.9" fill="#000" opacity=".32"/><circle cx="1042.5" cy="722.5" r="4.7" fill="url(#bw)" stroke="#1a1a1a" stroke-width="0.9"/><circle cx="1049.1" cy="775.7" r="5.9" fill="#000" opacity=".16"/><circle cx="1048.6" cy="775.2" r="4.9" fill="#000" opacity=".32"/><circle cx="1047.5" cy="773.7" r="4.7" fill="url(#bw)" stroke="#1a1a1a" stroke-width="0.9"/><circle cx="1044.9" cy="783.7" r="5.9" fill="#000" opacity=".16"/><circle cx="1044.4" cy="783.2" r="4.9" fill="#000" opacity=".32"/><circle cx="1043.3" cy="781.7" r="4.7" fill="url(#bw)" stroke="#1a1a1a" stroke-width="0.9"/><circle cx="1391.1" cy="757.5" r="5.9" fill="#000" opacity=".16"/><circle cx="1390.6" cy="757.0" r="4.9" fill="#000" opacity=".32"/><circle cx="1389.5" cy="755.5" r="4.7" fill="url(#bw)" stroke="#1a1a1a" stroke-width="0.9"/><circle cx="1439.1" cy="756.5" r="5.9" fill="#000" opacity=".16"/><circle cx="1438.6" cy="756.0" r="4.9" fill="#000" opacity=".32"/><circle cx="1437.5" cy="754.5" r="4.7" fill="url(#bw)" stroke="#1a1a1a" stroke-width="0.9"/><circle cx="1480.4" cy="766.5" r="5.9" fill="#000" opacity=".16"/><circle cx="1479.9" cy="766.0" r="4.9" fill="#000" opacity=".32"/><circle cx="1478.8" cy="764.5" r="4.7" fill="url(#bw)" stroke="#1a1a1a" stroke-width="0.9"/><circle cx="1413.4" cy="797.8" r="5.9" fill="#000" opacity=".16"/><circle cx="1412.9" cy="797.3" r="4.9" fill="#000" opacity=".32"/><circle cx="1411.8" cy="795.8" r="4.7" fill="url(#bw)" stroke="#1a1a1a" stroke-width="0.9"/><circle cx="1376.6" cy="810.0" r="5.9" fill="#000" opacity=".16"/><circle cx="1376.1" cy="809.5" r="4.9" fill="#000" opacity=".32"/><circle cx="1375.0" cy="808.0" r="4.7" fill="url(#bw)" stroke="#1a1a1a" stroke-width="0.9"/><circle cx="1418.4" cy="819.5" r="5.9" fill="#000" opacity=".16"/><circle cx="1417.9" cy="819.0" r="4.9" fill="#000" opacity=".32"/><circle cx="1416.8" cy="817.5" r="4.7" fill="url(#bw)" stroke="#1a1a1a" stroke-width="0.9"/><circle cx="1529.1" cy="791.5" r="5.9" fill="#000" opacity=".16"/><circle cx="1528.6" cy="791.0" r="4.9" fill="#000" opacity=".32"/><circle cx="1527.5" cy="789.5" r="4.7" fill="url(#bw)" stroke="#1a1a1a" stroke-width="0.9"/><circle cx="1538.6" cy="802.5" r="5.9" fill="#000" opacity=".16"/><circle cx="1538.1" cy="802.0" r="4.9" fill="#000" opacity=".32"/><circle cx="1537.0" cy="800.5" r="4.7" fill="url(#bw)" stroke="#1a1a1a" stroke-width="0.9"/><circle cx="1560.4" cy="798.5" r="5.9" fill="#000" opacity=".16"/><circle cx="1559.9" cy="798.0" r="4.9" fill="#000" opacity=".32"/><circle cx="1558.8" cy="796.5" r="4.7" fill="url(#bw)" stroke="#1a1a1a" stroke-width="0.9"/><circle cx="1572.1" cy="797.0" r="5.9" fill="#000" opacity=".16"/><circle cx="1571.6" cy="796.5" r="4.9" fill="#000" opacity=".32"/><circle cx="1570.5" cy="795.0" r="4.7" fill="url(#bw)" stroke="#1a1a1a" stroke-width="0.9"/><circle cx="972.3" cy="715.7" r="5.9" fill="#000" opacity=".16"/><circle cx="971.8" cy="715.2" r="4.9" fill="#000" opacity=".32"/><circle cx="970.7" cy="713.7" r="4.7" fill="url(#bw)" stroke="#1a1a1a" stroke-width="0.9"/><circle cx="976.4" cy="744.9" r="5.9" fill="#000" opacity=".16"/><circle cx="975.9" cy="744.4" r="4.9" fill="#000" opacity=".32"/><circle cx="974.8" cy="742.9" r="4.7" fill="url(#bw)" stroke="#1a1a1a" stroke-width="0.9"/><circle cx="1004.3" cy="734.5" r="5.9" fill="#000" opacity=".16"/><circle cx="1003.8" cy="734.0" r="4.9" fill="#000" opacity=".32"/><circle cx="1002.7" cy="732.5" r="4.7" fill="url(#bw)" stroke="#1a1a1a" stroke-width="0.9"/><circle cx="994.0" cy="766.5" r="5.9" fill="#000" opacity=".16"/><circle cx="993.5" cy="766.0" r="4.9" fill="#000" opacity=".32"/><circle cx="992.4" cy="764.5" r="4.7" fill="url(#bw)" stroke="#1a1a1a" stroke-width="0.9"/><circle cx="923.4" cy="772.6" r="5.9" fill="#000" opacity=".16"/><circle cx="922.9" cy="772.1" r="4.9" fill="#000" opacity=".32"/><circle cx="921.8" cy="770.6" r="4.7" fill="url(#bw)" stroke="#1a1a1a" stroke-width="0.9"/><circle cx="914.5" cy="783.4" r="5.9" fill="#000" opacity=".16"/><circle cx="914.0" cy="782.9" r="4.9" fill="#000" opacity=".32"/><circle cx="912.9" cy="781.4" r="4.7" fill="url(#bw)" stroke="#1a1a1a" stroke-width="0.9"/><circle cx="919.3" cy="781.9" r="5.9" fill="#000" opacity=".16"/><circle cx="918.8" cy="781.4" r="4.9" fill="#000" opacity=".32"/><circle cx="917.7" cy="779.9" r="4.7" fill="url(#bw)" stroke="#1a1a1a" stroke-width="0.9"/><circle cx="883.9" cy="822.4" r="5.9" fill="#000" opacity=".16"/><circle cx="883.4" cy="821.9" r="4.9" fill="#000" opacity=".32"/><circle cx="882.3" cy="820.4" r="4.7" fill="url(#bw)" stroke="#1a1a1a" stroke-width="0.9"/><circle cx="910.4" cy="804.8" r="5.9" fill="#000" opacity=".16"/><circle cx="909.9" cy="804.3" r="4.9" fill="#000" opacity=".32"/><circle cx="908.8" cy="802.8" r="4.7" fill="url(#bw)" stroke="#1a1a1a" stroke-width="0.9"/><circle cx="912.1" cy="816.9" r="5.9" fill="#000" opacity=".16"/><circle cx="911.6" cy="816.4" r="4.9" fill="#000" opacity=".32"/><circle cx="910.5" cy="814.9" r="4.7" fill="url(#bw)" stroke="#1a1a1a" stroke-width="0.9"/><circle cx="924.1" cy="819.5" r="5.9" fill="#000" opacity=".16"/><circle cx="923.6" cy="819.0" r="4.9" fill="#000" opacity=".32"/><circle cx="922.5" cy="817.5" r="4.7" fill="url(#bw)" stroke="#1a1a1a" stroke-width="0.9"/><circle cx="960.3" cy="824.8" r="5.9" fill="#000" opacity=".16"/><circle cx="959.8" cy="824.3" r="4.9" fill="#000" opacity=".32"/><circle cx="958.7" cy="822.8" r="4.7" fill="url(#bw)" stroke="#1a1a1a" stroke-width="0.9"/><circle cx="965.8" cy="821.2" r="5.9" fill="#000" opacity=".16"/><circle cx="965.3" cy="820.7" r="4.9" fill="#000" opacity=".32"/><circle cx="964.2" cy="819.2" r="4.7" fill="url(#bw)" stroke="#1a1a1a" stroke-width="0.9"/><circle cx="1012.5" cy="826.5" r="5.9" fill="#000" opacity=".16"/><circle cx="1012.0" cy="826.0" r="4.9" fill="#000" opacity=".32"/><circle cx="1010.9" cy="824.5" r="4.7" fill="url(#bw)" stroke="#1a1a1a" stroke-width="0.9"/><circle cx="984.3" cy="852.5" r="5.9" fill="#000" opacity=".16"/><circle cx="983.8" cy="852.0" r="4.9" fill="#000" opacity=".32"/><circle cx="982.7" cy="850.5" r="4.7" fill="url(#bw)" stroke="#1a1a1a" stroke-width="0.9"/><circle cx="855.5" cy="851.8" r="5.9" fill="#000" opacity=".16"/><circle cx="855.0" cy="851.3" r="4.9" fill="#000" opacity=".32"/><circle cx="853.9" cy="849.8" r="4.7" fill="url(#bw)" stroke="#1a1a1a" stroke-width="0.9"/><circle cx="838.2" cy="873.4" r="5.9" fill="#000" opacity=".16"/><circle cx="837.7" cy="872.9" r="4.9" fill="#000" opacity=".32"/><circle cx="836.6" cy="871.4" r="4.7" fill="url(#bw)" stroke="#1a1a1a" stroke-width="0.9"/><circle cx="876.5" cy="878.5" r="5.9" fill="#000" opacity=".16"/><circle cx="876.0" cy="878.0" r="4.9" fill="#000" opacity=".32"/><circle cx="874.9" cy="876.5" r="4.7" fill="url(#bw)" stroke="#1a1a1a" stroke-width="0.9"/><circle cx="803.3" cy="916.3" r="5.9" fill="#000" opacity=".16"/><circle cx="802.8" cy="915.8" r="4.9" fill="#000" opacity=".32"/><circle cx="801.7" cy="914.3" r="4.7" fill="url(#bw)" stroke="#1a1a1a" stroke-width="0.9"/><circle cx="1059.1" cy="662.5" r="5.9" fill="#000" opacity=".16"/><circle cx="1058.6" cy="662.0" r="4.9" fill="#000" opacity=".32"/><circle cx="1057.5" cy="660.5" r="4.7" fill="url(#bw)" stroke="#1a1a1a" stroke-width="0.9"/><circle cx="1072.4" cy="670.8" r="5.9" fill="#000" opacity=".16"/><circle cx="1071.9" cy="670.3" r="4.9" fill="#000" opacity=".32"/><circle cx="1070.8" cy="668.8" r="4.7" fill="url(#bw)" stroke="#1a1a1a" stroke-width="0.9"/><circle cx="1070.4" cy="677.8" r="5.9" fill="#000" opacity=".16"/><circle cx="1069.9" cy="677.3" r="4.9" fill="#000" opacity=".32"/><circle cx="1068.8" cy="675.8" r="4.7" fill="url(#bw)" stroke="#1a1a1a" stroke-width="0.9"/><circle cx="1066.9" cy="882.3" r="5.9" fill="#000" opacity=".16"/><circle cx="1066.4" cy="881.8" r="4.9" fill="#000" opacity=".32"/><circle cx="1065.3" cy="880.3" r="4.7" fill="url(#bw)" stroke="#1a1a1a" stroke-width="0.9"/><circle cx="1044.1" cy="866.5" r="5.9" fill="#000" opacity=".16"/><circle cx="1043.6" cy="866.0" r="4.9" fill="#000" opacity=".32"/><circle cx="1042.5" cy="864.5" r="4.7" fill="url(#bw)" stroke="#1a1a1a" stroke-width="0.9"/><circle cx="1043.4" cy="797.7" r="7.200" fill="#000"/><circle cx="1042.5" cy="796.8" r="4.700" fill="url(#bwp)"/></svg>
<div class="a" style="left:2px;top:1021.6px;width:1898px;height:20.6px;background:#f0f0f0"></div>
<div class="a" style="left:19px;top:1029.6px;width:1825px;height:2px;background:#868686;border-radius:1px"></div>
<div class="a" style="left:0px;top:1042px;width:1920px;height:1.3px;background:#000"></div>
<div class="a" style="left:0px;top:1043.3px;width:1920px;height:17px;background:#f0f0f0"></div>
<div class="a" style="left:0px;top:1042px;width:18px;height:18.5px;border:1.3px solid #000;background:#f0f0f0"></div>
<div class="a" style="left:17px;top:1042px;width:18px;height:18.5px;border:1.3px solid #000;background:#f0f0f0"></div>
<div class="a" style="left:34px;top:1042px;width:19.5px;height:18.5px;border:1.3px solid #000;background:#f0f0f0"></div>
<svg class="a" style="left:0;top:1042px" width="54" height="19" viewBox="0 0 54 19"><path d="M5 5l8 8M13 5l-8 8" stroke="#000" stroke-width="1.2"/><path d="M28 5.500v7l-4-3.500z" fill="#000"/><path d="M42 5.500v7l4-3.500z" fill="#000"/></svg>
<svg class="a" style="left:50px;top:1042px" width="340" height="19" viewBox="50 1042 340 19"><path d="M54.500 1043l8 17.500h57.500l6-17.500z" fill="#fff"/><path d="M54.500 1043l8 17.500M120 1060.500l6-17.500M123.600 1054.500l3 5.200h77.500M196.500 1043l8 17M201.300 1054.500l-2.500 5.200M204.500 1059.700h105M302 1043l7.600 17M305.900 1054.500l-2.500 5.200M309 1059.700h68M384 1043l-7.200 17" fill="none" stroke="#000" stroke-width="1"/></svg>
<div class="t" style="left:66px;top:1046.5px;font-size:11.5px;font-weight:bold;letter-spacing:-0.36px">Measures</div>
<div class="t" style="left:135px;top:1046.5px;font-size:10.8px;letter-spacing:-0.76px">CIE Diagram</div>
<div class="t" style="left:216px;top:1046.5px;font-size:10.8px;letter-spacing:-0.78px">Color temperature</div>
<div class="t" style="left:318px;top:1046.5px;font-size:10.8px;letter-spacing:-0.8px">RGB Levels</div>
<svg class="a" style="left:1750px;top:1044px" width="16" height="15" viewBox="0 0 16 15"><path d="M1 1h14v8l-2 5h-3l-1-3-1 3h-4l-3-5z" fill="#6a6a10" stroke="#2a2a00" stroke-width=".8"/><rect x="3" y="3" width="8" height="5" fill="#e02020"/><path d="M4 5.500h5l-2-2" stroke="#fff" stroke-width="1.200" fill="none"/><rect x="9" y="9" width="4.500" height="4.500" fill="#f0e000"/></svg>
<div class="a" style="left:1846px;top:1044.5px;width:12px;height:12px;background:#fff;border:1.4px solid #6a6a6a;border-right-color:#f4f4f4;border-bottom-color:#f4f4f4"></div>
<div class="t" style="left:1864px;top:1045.5px;font-size:11.5px;letter-spacing:-0.3px">Reference</div>
<div class="a" style="left:0px;top:1060.3px;width:1920px;height:19.7px;background:linear-gradient(90deg,#e5ebf5,#eef2f9)"></div>
<div class="t" style="left:2px;top:1065.5px;font-size:12px;letter-spacing:-0.25px">Ready</div>
<div class="a" style="left:1743px;top:1062px;width:74px;height:18px;border:1px solid #9db3d0;border-bottom:none;border-right-color:#e8eef8;background:#eef2fa"></div>
<div class="a" style="left:1820px;top:1062px;width:28px;height:18px;border:1px solid #9db3d0;border-bottom:none;border-right-color:#e8eef8;background:#eef2fa"></div>
<div class="a" style="left:1851px;top:1062px;width:33px;height:18px;border:1px solid #9db3d0;border-bottom:none;border-right-color:#e8eef8;background:#eef2fa"></div>
<div class="a" style="left:1887px;top:1062px;width:32px;height:18px;border:1px solid #9db3d0;border-bottom:none;border-right-color:#e8eef8;background:#eef2fa"></div>
<div class="t" style="left:1853.5px;top:1065.5px;font-size:12px">NUM</div>
</body></html>
